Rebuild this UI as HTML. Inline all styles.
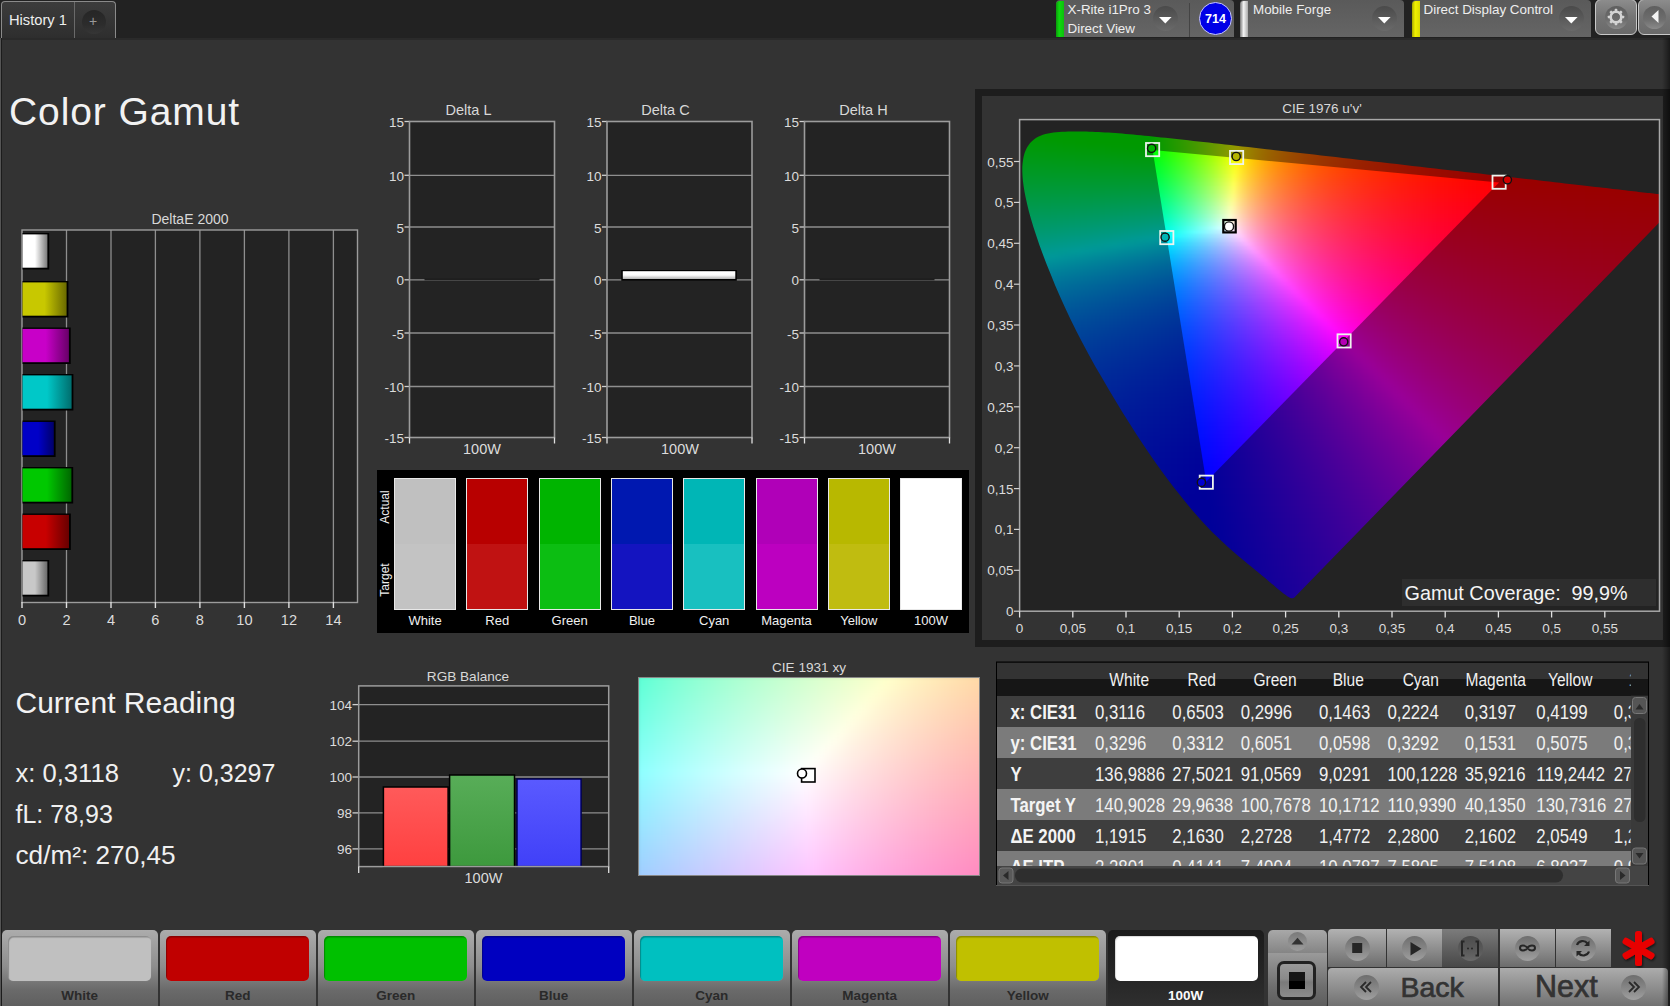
<!DOCTYPE html><html><head><meta charset="utf-8"><style>
*{margin:0;padding:0;box-sizing:border-box}
html,body{width:1670px;height:1006px;overflow:hidden;background:#333;font-family:"Liberation Sans",sans-serif;color:#e6e6e6}
.a{position:absolute}
.t{position:absolute;white-space:nowrap;line-height:1}
svg{position:absolute;overflow:visible}
.fld b{position:absolute;left:0;width:100%}
.r6{height:6px}.r4{height:4px}
</style></head><body>
<div class="a" style="left:0;top:0;width:1670px;height:38px;background:#222"></div><div class="a" style="left:0;top:38px;width:1670px;height:2px;background:#2a2a2a"></div><div class="a" style="left:0;top:38px;width:2px;height:968px;background:#1c1c1c;border-left:1px solid #555"></div><div class="a" style="left:1px;top:0.5px;width:115px;height:37.5px;border:1px solid #8a8a8a;border-bottom:none;border-radius:4px 4px 0 0;background:linear-gradient(#3c3c3c,#2e2e2e)"></div><div class="a" style="left:74px;top:2px;width:1px;height:36px;background:#6a6a6a"></div><div class="t" style="left:9px;top:13.3px;font-size:14.7px;color:#eee">History 1</div><div class="a" style="left:81.5px;top:9.5px;width:24px;height:24px;border-radius:50%;background:linear-gradient(#262626,#2c2c2c 60%,#363636)"></div><div class="t" style="left:89px;top:14px;font-size:14px;color:#999">+</div><div class="a" style="left:1056px;top:0;width:178px;height:37px;border-radius:4px 4px 0 0;background:linear-gradient(#5a5a5a,#656565)"></div><div class="a" style="left:1056px;top:1px;width:8px;height:36px;border-radius:4px 0 0 0;background:linear-gradient(90deg,#0a9a0a,#10d810 40%,#0cc00c)"></div><div class="t" style="left:1067.5px;top:3px;font-size:13.4px;color:#eee">X-Rite i1Pro 3</div><div class="t" style="left:1067.5px;top:22px;font-size:13.4px;color:#eee">Direct View</div><div class="a" style="left:1153px;top:6px;width:25px;height:25px;border-radius:50%;background:linear-gradient(#4a4a4a,#6a6a6a)"></div><svg style="left:1159.2px;top:17px" width="13" height="7"><path d="M0 0H12.6L6.3 6.6Z" fill="#fff"/></svg><div class="a" style="left:1189px;top:3px;width:1px;height:34px;background:#444"></div><div class="a" style="left:1199px;top:2px;width:33px;height:33px;border-radius:50%;background:#0000e6;border:1.5px solid #c8c8ff"></div><div class="t" style="left:1199px;top:12.5px;width:33px;text-align:center;font-size:12.5px;font-weight:bold;color:#fff">714</div><div class="a" style="left:1240px;top:0;width:164px;height:37px;border-radius:4px 4px 0 0;background:linear-gradient(#5a5a5a,#656565)"></div><div class="a" style="left:1240px;top:1px;width:8px;height:36px;border-radius:4px 0 0 0;background:linear-gradient(90deg,#777,#f4f4f4 45%,#aaa)"></div><div class="t" style="left:1253.0px;top:3px;font-size:13.4px;color:#eee">Mobile Forge</div><div class="a" style="left:1372px;top:6px;width:25px;height:25px;border-radius:50%;background:linear-gradient(#4a4a4a,#6a6a6a)"></div><svg style="left:1378.2px;top:17px" width="13" height="7"><path d="M0 0H12.6L6.3 6.6Z" fill="#fff"/></svg><div class="a" style="left:1412px;top:0;width:179px;height:37px;border-radius:4px 4px 0 0;background:linear-gradient(#5a5a5a,#656565)"></div><div class="a" style="left:1412px;top:1px;width:8px;height:36px;border-radius:4px 0 0 0;background:linear-gradient(90deg,#a8a800,#f0f000 40%,#d8d800)"></div><div class="t" style="left:1423.5px;top:3px;font-size:13.4px;color:#eee">Direct Display Control</div><div class="a" style="left:1559px;top:6px;width:25px;height:25px;border-radius:50%;background:linear-gradient(#4a4a4a,#6a6a6a)"></div><svg style="left:1565.2px;top:17px" width="13" height="7"><path d="M0 0H12.6L6.3 6.6Z" fill="#fff"/></svg><div class="a" style="left:1595px;top:-1px;width:42px;height:36px;border:1.5px solid #c8c8c8;border-radius:6px;background:linear-gradient(#8c8c8c,#747474 50%,#6a6a6a)"></div><div class="a" style="left:1637.5px;top:-1px;width:40px;height:36px;border:1.5px solid #c8c8c8;border-radius:6px;background:linear-gradient(#8c8c8c,#747474 50%,#6a6a6a)"></div><div class="a" style="left:1604.5px;top:6px;width:23px;height:23px;border-radius:50%;background:linear-gradient(#5e5e5e,#6e6e6e 60%,#8a8a8a)"></div><div class="a" style="left:1642.5px;top:6px;width:23px;height:23px;border-radius:50%;background:linear-gradient(#5e5e5e,#6e6e6e 60%,#8a8a8a)"></div><svg style="left:1615.8px;top:17.4px" width="1" height="1"><g><rect x="-1.3" y="-8.2" width="2.6" height="4" rx="0.6" transform="rotate(0)" fill="#d4d4d4"/><rect x="-1.3" y="-8.2" width="2.6" height="4" rx="0.6" transform="rotate(45)" fill="#d4d4d4"/><rect x="-1.3" y="-8.2" width="2.6" height="4" rx="0.6" transform="rotate(90)" fill="#d4d4d4"/><rect x="-1.3" y="-8.2" width="2.6" height="4" rx="0.6" transform="rotate(135)" fill="#d4d4d4"/><rect x="-1.3" y="-8.2" width="2.6" height="4" rx="0.6" transform="rotate(180)" fill="#d4d4d4"/><rect x="-1.3" y="-8.2" width="2.6" height="4" rx="0.6" transform="rotate(225)" fill="#d4d4d4"/><rect x="-1.3" y="-8.2" width="2.6" height="4" rx="0.6" transform="rotate(270)" fill="#d4d4d4"/><rect x="-1.3" y="-8.2" width="2.6" height="4" rx="0.6" transform="rotate(315)" fill="#d4d4d4"/><circle r="5.3" fill="none" stroke="#d4d4d4" stroke-width="2.6"/></g></svg><svg style="left:1650.5px;top:10px" width="9" height="14"><path d="M7.5 0V13L0.5 6.5Z" fill="#f4f4f4"/></svg><div class="t" style="left:9px;top:91.5px;font-size:39px;letter-spacing:0.9px;color:#f2f2f2">Color Gamut</div><div class="t" style="left:90px;top:212px;width:200px;text-align:center;font-size:14px;color:#d8d8d8">DeltaE 2000</div><svg style="left:0;top:0" width="1670" height="1006"><defs><linearGradient id="db0" x1="0" x2="1" y1="0" y2="0"><stop offset="0" stop-color="#ffffff"/><stop offset="0.5" stop-color="#ffffff"/><stop offset="1" stop-color="#7a7a7a"/></linearGradient><linearGradient id="db1" x1="0" x2="1" y1="0" y2="0"><stop offset="0" stop-color="#c8c800"/><stop offset="0.5" stop-color="#c8c800"/><stop offset="1" stop-color="#6a6a00"/></linearGradient><linearGradient id="db2" x1="0" x2="1" y1="0" y2="0"><stop offset="0" stop-color="#c800c8"/><stop offset="0.5" stop-color="#c800c8"/><stop offset="1" stop-color="#680068"/></linearGradient><linearGradient id="db3" x1="0" x2="1" y1="0" y2="0"><stop offset="0" stop-color="#00c8c8"/><stop offset="0.5" stop-color="#00c8c8"/><stop offset="1" stop-color="#006e6e"/></linearGradient><linearGradient id="db4" x1="0" x2="1" y1="0" y2="0"><stop offset="0" stop-color="#0000c8"/><stop offset="0.5" stop-color="#0000c8"/><stop offset="1" stop-color="#00006a"/></linearGradient><linearGradient id="db5" x1="0" x2="1" y1="0" y2="0"><stop offset="0" stop-color="#00c800"/><stop offset="0.5" stop-color="#00c800"/><stop offset="1" stop-color="#006800"/></linearGradient><linearGradient id="db6" x1="0" x2="1" y1="0" y2="0"><stop offset="0" stop-color="#c80000"/><stop offset="0.5" stop-color="#c80000"/><stop offset="1" stop-color="#680000"/></linearGradient><linearGradient id="db7" x1="0" x2="1" y1="0" y2="0"><stop offset="0" stop-color="#c8c8c8"/><stop offset="0.5" stop-color="#c8c8c8"/><stop offset="1" stop-color="#6a6a6a"/></linearGradient></defs><rect x="22" y="230" width="335" height="372" fill="#232323"/><line x1="66.5" y1="230" x2="66.5" y2="602" stroke="#8e8e8e" stroke-width="1.3"/><line x1="111.0" y1="230" x2="111.0" y2="602" stroke="#8e8e8e" stroke-width="1.3"/><line x1="155.4" y1="230" x2="155.4" y2="602" stroke="#8e8e8e" stroke-width="1.3"/><line x1="199.9" y1="230" x2="199.9" y2="602" stroke="#8e8e8e" stroke-width="1.3"/><line x1="244.4" y1="230" x2="244.4" y2="602" stroke="#8e8e8e" stroke-width="1.3"/><line x1="288.9" y1="230" x2="288.9" y2="602" stroke="#8e8e8e" stroke-width="1.3"/><line x1="333.4" y1="230" x2="333.4" y2="602" stroke="#8e8e8e" stroke-width="1.3"/><rect x="22" y="230" width="335.5" height="372.5" fill="none" stroke="#9c9c9c" stroke-width="1.4"/><line x1="22.0" y1="602" x2="22.0" y2="608" stroke="#e0e0e0" stroke-width="1.4"/><text x="22.0" y="624.8" font-size="14.6" fill="#dcdcdc" text-anchor="middle">0</text><line x1="66.5" y1="602" x2="66.5" y2="608" stroke="#e0e0e0" stroke-width="1.4"/><text x="66.5" y="624.8" font-size="14.6" fill="#dcdcdc" text-anchor="middle">2</text><line x1="111.0" y1="602" x2="111.0" y2="608" stroke="#e0e0e0" stroke-width="1.4"/><text x="111.0" y="624.8" font-size="14.6" fill="#dcdcdc" text-anchor="middle">4</text><line x1="155.4" y1="602" x2="155.4" y2="608" stroke="#e0e0e0" stroke-width="1.4"/><text x="155.4" y="624.8" font-size="14.6" fill="#dcdcdc" text-anchor="middle">6</text><line x1="199.9" y1="602" x2="199.9" y2="608" stroke="#e0e0e0" stroke-width="1.4"/><text x="199.9" y="624.8" font-size="14.6" fill="#dcdcdc" text-anchor="middle">8</text><line x1="244.4" y1="602" x2="244.4" y2="608" stroke="#e0e0e0" stroke-width="1.4"/><text x="244.4" y="624.8" font-size="14.6" fill="#dcdcdc" text-anchor="middle">10</text><line x1="288.9" y1="602" x2="288.9" y2="608" stroke="#e0e0e0" stroke-width="1.4"/><text x="288.9" y="624.8" font-size="14.6" fill="#dcdcdc" text-anchor="middle">12</text><line x1="333.4" y1="602" x2="333.4" y2="608" stroke="#e0e0e0" stroke-width="1.4"/><text x="333.4" y="624.8" font-size="14.6" fill="#dcdcdc" text-anchor="middle">14</text><rect x="22.5" y="233.0" width="26.7" height="36.5" fill="#000"/><rect x="22.5" y="234.4" width="24.9" height="33.3" fill="url(#db0)"/><rect x="22.5" y="281.0" width="45.9" height="36.5" fill="#000"/><rect x="22.5" y="282.4" width="44.1" height="33.3" fill="url(#db1)"/><rect x="22.5" y="327.5" width="48.2" height="36.5" fill="#000"/><rect x="22.5" y="328.9" width="46.4" height="33.3" fill="url(#db2)"/><rect x="22.5" y="374.0" width="50.9" height="36.5" fill="#000"/><rect x="22.5" y="375.4" width="49.1" height="33.3" fill="url(#db3)"/><rect x="22.5" y="420.5" width="33.1" height="36.5" fill="#000"/><rect x="22.5" y="421.9" width="31.3" height="33.3" fill="url(#db4)"/><rect x="22.5" y="467.0" width="50.7" height="36.5" fill="#000"/><rect x="22.5" y="468.4" width="48.9" height="33.3" fill="url(#db5)"/><rect x="22.5" y="513.5" width="48.3" height="36.5" fill="#000"/><rect x="22.5" y="514.9" width="46.5" height="33.3" fill="url(#db6)"/><rect x="22.5" y="560.0" width="26.7" height="36.5" fill="#000"/><rect x="22.5" y="561.4" width="24.9" height="33.3" fill="url(#db7)"/></svg><div class="t" style="left:366px;top:103px;width:205px;text-align:center;font-size:14.5px;color:#d8d8d8">Delta L</div><svg style="left:0;top:0" width="1670" height="1006"><rect x="409.5" y="121.5" width="145" height="316.0" fill="#232323"/><line x1="404.5" y1="121.5" x2="409.5" y2="121.5" stroke="#d0d0d0" stroke-width="1.3"/><text x="404.0" y="127.0" font-size="13.5" fill="#dcdcdc" text-anchor="end">15</text><line x1="409.5" y1="175.3" x2="554.5" y2="175.3" stroke="#8e8e8e" stroke-width="1.3"/><line x1="404.5" y1="175.3" x2="409.5" y2="175.3" stroke="#d0d0d0" stroke-width="1.3"/><text x="404.0" y="180.8" font-size="13.5" fill="#dcdcdc" text-anchor="end">10</text><line x1="409.5" y1="227.0" x2="554.5" y2="227.0" stroke="#8e8e8e" stroke-width="1.3"/><line x1="404.5" y1="227.0" x2="409.5" y2="227.0" stroke="#d0d0d0" stroke-width="1.3"/><text x="404.0" y="232.5" font-size="13.5" fill="#dcdcdc" text-anchor="end">5</text><line x1="409.5" y1="279.8" x2="554.5" y2="279.8" stroke="#8e8e8e" stroke-width="1.3"/><line x1="404.5" y1="279.8" x2="409.5" y2="279.8" stroke="#d0d0d0" stroke-width="1.3"/><text x="404.0" y="285.3" font-size="13.5" fill="#dcdcdc" text-anchor="end">0</text><line x1="409.5" y1="333.0" x2="554.5" y2="333.0" stroke="#8e8e8e" stroke-width="1.3"/><line x1="404.5" y1="333.0" x2="409.5" y2="333.0" stroke="#d0d0d0" stroke-width="1.3"/><text x="404.0" y="338.5" font-size="13.5" fill="#dcdcdc" text-anchor="end">-5</text><line x1="409.5" y1="386.5" x2="554.5" y2="386.5" stroke="#8e8e8e" stroke-width="1.3"/><line x1="404.5" y1="386.5" x2="409.5" y2="386.5" stroke="#d0d0d0" stroke-width="1.3"/><text x="404.0" y="392.0" font-size="13.5" fill="#dcdcdc" text-anchor="end">-10</text><line x1="404.5" y1="437.5" x2="409.5" y2="437.5" stroke="#d0d0d0" stroke-width="1.3"/><text x="404.0" y="443.0" font-size="13.5" fill="#dcdcdc" text-anchor="end">-15</text><rect x="409.5" y="121.5" width="145" height="316.0" fill="none" stroke="#9c9c9c" stroke-width="1.6"/><line x1="409.5" y1="437.5" x2="409.5" y2="443.5" stroke="#e0e0e0" stroke-width="1.3"/><line x1="554.5" y1="437.5" x2="554.5" y2="443.5" stroke="#e0e0e0" stroke-width="1.3"/><rect x="424.5" y="278.3" width="115" height="2" fill="#1e1e1e"/></svg><div class="t" style="left:432px;top:442px;width:100px;text-align:center;font-size:14.5px;color:#dcdcdc">100W</div><div class="t" style="left:563px;top:103px;width:205px;text-align:center;font-size:14.5px;color:#d8d8d8">Delta C</div><svg style="left:0;top:0" width="1670" height="1006"><rect x="607.0" y="121.5" width="145" height="316.0" fill="#232323"/><line x1="602.0" y1="121.5" x2="607.0" y2="121.5" stroke="#d0d0d0" stroke-width="1.3"/><text x="601.5" y="127.0" font-size="13.5" fill="#dcdcdc" text-anchor="end">15</text><line x1="607.0" y1="175.3" x2="752.0" y2="175.3" stroke="#8e8e8e" stroke-width="1.3"/><line x1="602.0" y1="175.3" x2="607.0" y2="175.3" stroke="#d0d0d0" stroke-width="1.3"/><text x="601.5" y="180.8" font-size="13.5" fill="#dcdcdc" text-anchor="end">10</text><line x1="607.0" y1="227.0" x2="752.0" y2="227.0" stroke="#8e8e8e" stroke-width="1.3"/><line x1="602.0" y1="227.0" x2="607.0" y2="227.0" stroke="#d0d0d0" stroke-width="1.3"/><text x="601.5" y="232.5" font-size="13.5" fill="#dcdcdc" text-anchor="end">5</text><line x1="607.0" y1="279.8" x2="752.0" y2="279.8" stroke="#8e8e8e" stroke-width="1.3"/><line x1="602.0" y1="279.8" x2="607.0" y2="279.8" stroke="#d0d0d0" stroke-width="1.3"/><text x="601.5" y="285.3" font-size="13.5" fill="#dcdcdc" text-anchor="end">0</text><line x1="607.0" y1="333.0" x2="752.0" y2="333.0" stroke="#8e8e8e" stroke-width="1.3"/><line x1="602.0" y1="333.0" x2="607.0" y2="333.0" stroke="#d0d0d0" stroke-width="1.3"/><text x="601.5" y="338.5" font-size="13.5" fill="#dcdcdc" text-anchor="end">-5</text><line x1="607.0" y1="386.5" x2="752.0" y2="386.5" stroke="#8e8e8e" stroke-width="1.3"/><line x1="602.0" y1="386.5" x2="607.0" y2="386.5" stroke="#d0d0d0" stroke-width="1.3"/><text x="601.5" y="392.0" font-size="13.5" fill="#dcdcdc" text-anchor="end">-10</text><line x1="602.0" y1="437.5" x2="607.0" y2="437.5" stroke="#d0d0d0" stroke-width="1.3"/><text x="601.5" y="443.0" font-size="13.5" fill="#dcdcdc" text-anchor="end">-15</text><rect x="607.0" y="121.5" width="145" height="316.0" fill="none" stroke="#9c9c9c" stroke-width="1.6"/><line x1="607.0" y1="437.5" x2="607.0" y2="443.5" stroke="#e0e0e0" stroke-width="1.3"/><line x1="752.0" y1="437.5" x2="752.0" y2="443.5" stroke="#e0e0e0" stroke-width="1.3"/><defs><linearGradient id="wb" x1="0" x2="0" y1="0" y2="1"><stop offset="0" stop-color="#fff"/><stop offset="0.5" stop-color="#fafafa"/><stop offset="1" stop-color="#b0b0b0"/></linearGradient></defs><rect x="621.3" y="270.0" width="115.5" height="10.8" fill="#000"/><rect x="622.8" y="271.2" width="112.5" height="7.8" fill="url(#wb)"/></svg><div class="t" style="left:630px;top:442px;width:100px;text-align:center;font-size:14.5px;color:#dcdcdc">100W</div><div class="t" style="left:761px;top:103px;width:205px;text-align:center;font-size:14.5px;color:#d8d8d8">Delta H</div><svg style="left:0;top:0" width="1670" height="1006"><rect x="804.5" y="121.5" width="145" height="316.0" fill="#232323"/><line x1="799.5" y1="121.5" x2="804.5" y2="121.5" stroke="#d0d0d0" stroke-width="1.3"/><text x="799.0" y="127.0" font-size="13.5" fill="#dcdcdc" text-anchor="end">15</text><line x1="804.5" y1="175.3" x2="949.5" y2="175.3" stroke="#8e8e8e" stroke-width="1.3"/><line x1="799.5" y1="175.3" x2="804.5" y2="175.3" stroke="#d0d0d0" stroke-width="1.3"/><text x="799.0" y="180.8" font-size="13.5" fill="#dcdcdc" text-anchor="end">10</text><line x1="804.5" y1="227.0" x2="949.5" y2="227.0" stroke="#8e8e8e" stroke-width="1.3"/><line x1="799.5" y1="227.0" x2="804.5" y2="227.0" stroke="#d0d0d0" stroke-width="1.3"/><text x="799.0" y="232.5" font-size="13.5" fill="#dcdcdc" text-anchor="end">5</text><line x1="804.5" y1="279.8" x2="949.5" y2="279.8" stroke="#8e8e8e" stroke-width="1.3"/><line x1="799.5" y1="279.8" x2="804.5" y2="279.8" stroke="#d0d0d0" stroke-width="1.3"/><text x="799.0" y="285.3" font-size="13.5" fill="#dcdcdc" text-anchor="end">0</text><line x1="804.5" y1="333.0" x2="949.5" y2="333.0" stroke="#8e8e8e" stroke-width="1.3"/><line x1="799.5" y1="333.0" x2="804.5" y2="333.0" stroke="#d0d0d0" stroke-width="1.3"/><text x="799.0" y="338.5" font-size="13.5" fill="#dcdcdc" text-anchor="end">-5</text><line x1="804.5" y1="386.5" x2="949.5" y2="386.5" stroke="#8e8e8e" stroke-width="1.3"/><line x1="799.5" y1="386.5" x2="804.5" y2="386.5" stroke="#d0d0d0" stroke-width="1.3"/><text x="799.0" y="392.0" font-size="13.5" fill="#dcdcdc" text-anchor="end">-10</text><line x1="799.5" y1="437.5" x2="804.5" y2="437.5" stroke="#d0d0d0" stroke-width="1.3"/><text x="799.0" y="443.0" font-size="13.5" fill="#dcdcdc" text-anchor="end">-15</text><rect x="804.5" y="121.5" width="145" height="316.0" fill="none" stroke="#9c9c9c" stroke-width="1.6"/><line x1="804.5" y1="437.5" x2="804.5" y2="443.5" stroke="#e0e0e0" stroke-width="1.3"/><line x1="949.5" y1="437.5" x2="949.5" y2="443.5" stroke="#e0e0e0" stroke-width="1.3"/><rect x="819.5" y="278.3" width="115" height="2" fill="#1e1e1e"/></svg><div class="t" style="left:827px;top:442px;width:100px;text-align:center;font-size:14.5px;color:#dcdcdc">100W</div><div class="a" style="left:377px;top:470px;width:592px;height:163px;background:#000"></div><div class="a" style="left:394.0px;top:478px;width:62px;height:132px;border:1px solid #e8e8e8;background:linear-gradient(#c0c0c0 50%,#c3c3c3 50%)"></div><div class="t" style="left:375.0px;top:614px;width:100px;text-align:center;font-size:13px;color:#f0f0f0">White</div><div class="a" style="left:466.3px;top:478px;width:62px;height:132px;border:1px solid #e8e8e8;background:linear-gradient(#b80000 50%,#c01212 50%)"></div><div class="t" style="left:447.3px;top:614px;width:100px;text-align:center;font-size:13px;color:#f0f0f0">Red</div><div class="a" style="left:538.6px;top:478px;width:62px;height:132px;border:1px solid #e8e8e8;background:linear-gradient(#00b400 50%,#0cbe12 50%)"></div><div class="t" style="left:519.6px;top:614px;width:100px;text-align:center;font-size:13px;color:#f0f0f0">Green</div><div class="a" style="left:610.9px;top:478px;width:62px;height:132px;border:1px solid #e8e8e8;background:linear-gradient(#0018b0 50%,#1414c0 50%)"></div><div class="t" style="left:591.9px;top:614px;width:100px;text-align:center;font-size:13px;color:#f0f0f0">Blue</div><div class="a" style="left:683.2px;top:478px;width:62px;height:132px;border:1px solid #e8e8e8;background:linear-gradient(#00b6b6 50%,#18c0c0 50%)"></div><div class="t" style="left:664.2px;top:614px;width:100px;text-align:center;font-size:13px;color:#f0f0f0">Cyan</div><div class="a" style="left:755.5px;top:478px;width:62px;height:132px;border:1px solid #e8e8e8;background:linear-gradient(#b000b8 50%,#bc00c0 50%)"></div><div class="t" style="left:736.5px;top:614px;width:100px;text-align:center;font-size:13px;color:#f0f0f0">Magenta</div><div class="a" style="left:827.8px;top:478px;width:62px;height:132px;border:1px solid #e8e8e8;background:linear-gradient(#b8b800 50%,#c0bc10 50%)"></div><div class="t" style="left:808.8px;top:614px;width:100px;text-align:center;font-size:13px;color:#f0f0f0">Yellow</div><div class="a" style="left:900.1px;top:478px;width:62px;height:132px;border:1px solid #e8e8e8;background:linear-gradient(#ffffff 50%,#ffffff 50%)"></div><div class="t" style="left:881.1px;top:614px;width:100px;text-align:center;font-size:13px;color:#f0f0f0">100W</div><div class="t" style="left:357px;top:501px;width:56px;text-align:center;font-size:12px;color:#f0f0f0;transform:rotate(-90deg)">Actual</div><div class="t" style="left:357px;top:574px;width:56px;text-align:center;font-size:12px;color:#f0f0f0;transform:rotate(-90deg)">Target</div><div class="a" style="left:975px;top:89px;width:695px;height:558px;background:#1d1d1d"></div><div class="a" style="left:982px;top:96px;width:681px;height:544px;background:#333"></div><div class="t" style="left:1222px;top:102px;width:200px;text-align:center;font-size:13.5px;color:#d8d8d8">CIE 1976 u'v'</div><div class="a" style="left:1020px;top:120px;width:640px;height:491px;background:#232323"></div><div class="a" style="left:1000px;top:110px;width:684px;height:510px;clip-path:polygon(294.1px 487.7px,294.0px 487.7px,294.0px 487.7px,293.9px 487.7px,293.9px 487.7px,293.8px 487.7px,293.8px 487.7px,293.7px 487.8px,293.7px 487.8px,293.6px 487.8px,293.6px 487.8px,293.6px 487.9px,293.5px 487.9px,293.5px 488.0px,293.4px 488.0px,293.3px 488.0px,293.3px 488.1px,293.2px 488.1px,293.1px 488.1px,293.0px 488.2px,292.9px 488.2px,292.8px 488.2px,292.7px 488.2px,292.6px 488.2px,292.5px 488.2px,292.3px 488.2px,292.2px 488.2px,292.0px 488.2px,291.9px 488.2px,291.7px 488.2px,291.6px 488.2px,291.4px 488.2px,291.3px 488.2px,291.1px 488.2px,290.9px 488.1px,290.7px 488.1px,290.5px 488.0px,290.2px 487.9px,289.9px 487.8px,289.6px 487.6px,289.2px 487.4px,288.7px 487.1px,288.2px 486.8px,287.6px 486.4px,287.0px 486.0px,286.4px 485.6px,285.7px 485.1px,285.0px 484.6px,284.3px 484.0px,283.5px 483.4px,282.6px 482.7px,281.7px 482.0px,280.7px 481.2px,279.6px 480.3px,278.5px 479.4px,277.3px 478.5px,276.1px 477.4px,274.8px 476.3px,273.5px 475.1px,272.0px 473.9px,270.6px 472.7px,269.0px 471.4px,267.4px 470.0px,265.7px 468.6px,263.9px 467.1px,261.9px 465.5px,259.9px 463.8px,257.8px 462.1px,255.5px 460.2px,253.2px 458.3px,250.8px 456.3px,248.2px 454.2px,245.6px 452.0px,242.9px 449.8px,240.1px 447.4px,237.1px 444.9px,234.0px 442.2px,230.8px 439.4px,227.4px 436.4px,224.0px 433.2px,220.5px 430.0px,216.9px 426.6px,213.1px 422.9px,209.2px 418.9px,205.0px 414.6px,200.6px 409.7px,195.8px 404.3px,190.8px 398.4px,185.5px 392.0px,179.9px 385.1px,174.1px 377.8px,168.2px 370.0px,162.1px 361.7px,155.8px 353.0px,149.4px 343.7px,142.8px 334.0px,136.2px 323.9px,129.4px 313.3px,122.6px 302.4px,115.8px 291.2px,108.9px 279.8px,102.1px 268.1px,95.3px 256.4px,88.7px 244.6px,82.4px 232.8px,76.3px 221.0px,70.5px 209.3px,65.1px 197.8px,60.0px 186.4px,55.2px 175.4px,50.8px 164.6px,46.6px 154.2px,42.8px 144.2px,39.3px 134.7px,36.2px 125.6px,33.4px 117.1px,31.0px 109.0px,28.9px 101.5px,27.2px 94.4px,25.7px 87.8px,24.5px 81.7px,23.6px 76.0px,22.9px 70.8px,22.5px 65.9px,22.3px 61.3px,22.3px 57.1px,22.6px 53.2px,23.1px 49.5px,23.7px 46.2px,24.6px 43.1px,25.7px 40.2px,27.0px 37.6px,28.5px 35.2px,30.1px 33.1px,31.9px 31.2px,33.9px 29.5px,35.9px 28.0px,38.1px 26.7px,40.5px 25.7px,42.9px 24.7px,45.4px 24.0px,48.0px 23.4px,50.7px 22.9px,53.4px 22.5px,56.2px 22.2px,59.1px 22.0px,62.0px 21.8px,65.0px 21.7px,68.0px 21.6px,71.0px 21.5px,74.1px 21.5px,77.1px 21.5px,80.1px 21.5px,83.1px 21.5px,86.2px 21.6px,89.2px 21.7px,92.3px 21.8px,95.5px 21.9px,98.6px 22.0px,101.8px 22.2px,105.1px 22.4px,108.4px 22.6px,111.8px 22.8px,115.2px 23.1px,118.6px 23.3px,122.2px 23.6px,125.7px 23.9px,129.4px 24.2px,133.1px 24.6px,136.9px 24.9px,140.7px 25.3px,144.6px 25.7px,148.6px 26.1px,152.7px 26.5px,156.9px 26.9px,161.1px 27.4px,165.5px 27.8px,169.9px 28.3px,174.4px 28.8px,179.0px 29.3px,183.7px 29.8px,188.5px 30.3px,193.4px 30.9px,198.4px 31.4px,203.5px 32.0px,208.7px 32.6px,214.0px 33.2px,219.4px 33.8px,225.0px 34.4px,230.6px 35.0px,236.3px 35.7px,242.2px 36.4px,248.2px 37.0px,254.2px 37.7px,260.4px 38.4px,266.7px 39.2px,273.2px 39.9px,279.7px 40.7px,286.3px 41.4px,293.1px 42.2px,299.9px 43.0px,306.9px 43.8px,313.9px 44.6px,321.1px 45.4px,328.3px 46.2px,335.7px 47.1px,343.1px 47.9px,350.6px 48.8px,358.1px 49.7px,365.8px 50.5px,373.5px 51.4px,381.3px 52.3px,389.1px 53.2px,396.9px 54.1px,404.7px 55.0px,412.4px 55.9px,420.1px 56.8px,427.7px 57.7px,435.2px 58.5px,442.7px 59.4px,450.1px 60.2px,457.6px 61.1px,465.0px 61.9px,472.4px 62.8px,479.7px 63.6px,486.8px 64.4px,493.8px 65.2px,500.6px 66.0px,507.2px 66.8px,513.6px 67.5px,519.9px 68.2px,526.1px 68.9px,532.2px 69.6px,538.0px 70.3px,543.7px 71.0px,549.3px 71.6px,554.6px 72.2px,559.8px 72.8px,564.8px 73.4px,569.6px 73.9px,574.3px 74.5px,578.8px 75.0px,583.2px 75.5px,587.3px 76.0px,591.4px 76.4px,595.3px 76.9px,599.0px 77.3px,602.7px 77.7px,606.2px 78.1px,609.6px 78.5px,612.9px 78.9px,616.1px 79.3px,619.3px 79.6px,622.3px 80.0px,625.3px 80.3px,628.2px 80.7px,631.0px 81.0px,633.7px 81.3px,636.3px 81.6px,638.8px 81.9px,641.1px 82.2px,643.4px 82.4px,645.6px 82.7px,647.7px 82.9px,649.6px 83.1px,651.5px 83.3px,653.3px 83.6px,655.0px 83.7px,656.7px 83.9px,658.2px 84.1px,659.5px 84.3px,659.5px 112.3px)"><div class="a fld" style="left:0;top:0;width:684px;height:510px;filter:blur(2.5px)"><b class="r6" style="top:0px;background:linear-gradient(90deg,#009900,#009900,#009900,#009900,#009900,#009900,#009900,#009900,#009900,#009900,#009900,#009900,#009900,#009900,#009900,#009900,#009900,#009900,#009900,#009900,#009900,#009900,#009900,#009900,#009900,#049900,#0c9900,#149900,#1c9900,#259900,#2e9900,#379900,#409900,#4a9900,#549900,#5e9900,#699900,#749900,#7f9900,#8b9900,#989900,#998e00,#998400,#997a00,#997200,#996a00,#996300,#995d00,#995700,#995200,#994d00,#994800,#994400,#994000,#993c00,#993900,#993600,#993300,#993000,#992d00,#992b00,#992800,#992600,#992400,#992200,#992000,#991e00,#991c00,#991b00,#991900,#991800,#991600,#991500,#991300,#991200,#991100,#991000,#990f00,#990d00,#990c00,#990b00,#990a00,#990900,#990900,#990800,#990700,#990600,#990500,#990400,#990400,#990300,#990200,#990200,#990100,#990000,#990000,#990000,#990000,#990000,#990000,#990000,#990000,#990000,#990000,#990000,#990000,#990000,#990000,#990000,#990000,#990000,#990000,#990000,#990000,#990000)"></b><b class="r6" style="top:6px;background:linear-gradient(90deg,#009900,#009900,#009900,#009900,#009900,#009900,#009900,#009900,#009900,#009900,#009900,#009900,#009900,#009900,#009900,#009900,#009900,#009900,#009900,#009900,#009900,#009900,#009900,#009900,#009900,#039900,#0b9900,#139900,#1b9900,#249900,#2d9900,#369900,#409900,#4a9900,#549900,#5e9900,#699900,#749900,#809900,#8c9900,#999900,#998d00,#998300,#997900,#997000,#996900,#996200,#995b00,#995600,#995000,#994b00,#994700,#994300,#993f00,#993b00,#993800,#993500,#993200,#992f00,#992c00,#992a00,#992700,#992500,#992300,#992100,#991f00,#991d00,#991b00,#991a00,#991800,#991700,#991500,#991400,#991300,#991100,#991000,#990f00,#990e00,#990d00,#990c00,#990b00,#990a00,#990900,#990800,#990700,#990600,#990500,#990500,#990400,#990300,#990200,#990200,#990100,#990000,#990000,#990000,#990000,#990000,#990000,#990000,#990000,#990000,#990000,#990000,#990000,#990000,#990000,#990000,#990000,#990000,#990000,#990000,#990000,#990000,#990000)"></b><b class="r6" style="top:12px;background:linear-gradient(90deg,#009900,#009900,#009900,#009900,#009900,#009900,#009900,#009900,#009900,#009900,#009900,#009900,#009900,#009900,#009900,#009900,#009900,#009900,#009900,#009900,#009900,#009900,#009900,#009900,#009900,#029900,#0a9900,#129900,#1a9900,#239900,#2c9900,#369900,#3f9900,#499900,#549900,#5e9900,#699900,#759900,#819900,#8d9900,#999800,#998c00,#998100,#997800,#996f00,#996800,#996100,#995a00,#995400,#994f00,#994a00,#994600,#994200,#993e00,#993a00,#993700,#993300,#993000,#992e00,#992b00,#992900,#992600,#992400,#992200,#992000,#991e00,#991c00,#991b00,#991900,#991700,#991600,#991400,#991300,#991200,#991000,#990f00,#990e00,#990d00,#990c00,#990b00,#990a00,#990900,#990800,#990700,#990600,#990500,#990500,#990400,#990300,#990200,#990200,#990100,#990000,#990000,#990000,#990000,#990000,#990000,#990000,#990000,#990000,#990000,#990000,#990000,#990000,#990000,#990000,#990000,#990000,#990000,#990000,#990000,#990000,#990000,#990000)"></b><b class="r6" style="top:18px;background:linear-gradient(90deg,#009900,#009900,#009900,#009900,#009900,#009900,#009900,#009900,#009900,#009900,#009900,#009900,#009900,#009900,#009900,#009900,#009900,#009900,#009900,#009900,#009900,#009900,#009900,#009900,#009900,#009900,#089900,#119900,#199900,#229900,#2c9900,#359900,#3f9900,#499900,#549900,#5e9900,#6a9900,#759900,#829900,#8e9900,#999700,#998b00,#998000,#997600,#996e00,#996600,#995f00,#995900,#995300,#994e00,#994900,#994400,#994000,#993c00,#993900,#993500,#993200,#992f00,#992d00,#992a00,#992800,#992500,#992300,#992100,#991f00,#991d00,#991b00,#991a00,#991800,#991600,#991500,#991400,#991200,#991100,#991000,#990e00,#990d00,#990c00,#990b00,#990a00,#990900,#990800,#990700,#990600,#990600,#990500,#990400,#990300,#990200,#990200,#990100,#990000,#990000,#990000,#990000,#990000,#990000,#990000,#990000,#990000,#990000,#990000,#990000,#990000,#990000,#990000,#990000,#990000,#990000,#990000,#990000,#990000,#990000,#990000,#990000)"></b><b class="r6" style="top:24px;background:linear-gradient(90deg,#009902,#009902,#009901,#009901,#009900,#009900,#009900,#009900,#009900,#009900,#009900,#009900,#009900,#009900,#009900,#009900,#009900,#009900,#009900,#009900,#009900,#009900,#009900,#009900,#009900,#009900,#079900,#109900,#199900,#229900,#2b9900,#359900,#3e9900,#499900,#539900,#5f9900,#6a9900,#769900,#829900,#8f9900,#999600,#998900,#997f00,#997500,#996d00,#996500,#995e00,#995800,#995200,#994d00,#994800,#994300,#993f00,#993b00,#993800,#993400,#993100,#992e00,#992c00,#992900,#992700,#992400,#992200,#992000,#991e00,#991c00,#991a00,#991900,#991700,#991600,#991400,#991300,#991100,#991000,#990f00,#990e00,#990d00,#990b00,#990a00,#990900,#990800,#990700,#990700,#990600,#990500,#990400,#990300,#990200,#990200,#990100,#990000,#990000,#990000,#990000,#990000,#990000,#990000,#990000,#990000,#990000,#990000,#990000,#990000,#990000,#990000,#990000,#990000,#990000,#990000,#990000,#990000,#990000,#990000,#990000,#990000)"></b><b class="r6" style="top:30px;background:linear-gradient(90deg,#009908,#009907,#009907,#009906,#009906,#009906,#009905,#009905,#009904,#009904,#009903,#009902,#009902,#009901,#009901,#009900,#009900,#009900,#009900,#009900,#009900,#009900,#009900,#009900,#009900,#009900,#069900,#0f9900,#189900,#219900,#2a9900,#349900,#3e9900,#499900,#539900,#5f9900,#6a9900,#779900,#839900,#909900,#999400,#998800,#997d00,#997400,#996b00,#996300,#995d00,#995600,#995100,#994b00,#994600,#994200,#993e00,#993a00,#993600,#993300,#993000,#992d00,#992a00,#992800,#992500,#992300,#992100,#991f00,#991d00,#991b00,#991900,#991800,#991600,#991500,#991300,#991200,#991000,#990f00,#990e00,#990d00,#990c00,#990b00,#990a00,#990900,#990800,#990700,#990600,#990500,#990400,#990300,#990300,#990200,#990100,#990000,#990000,#990000,#990000,#990000,#990000,#990000,#990000,#990000,#990000,#990000,#990000,#990000,#990000,#990000,#990000,#990000,#990000,#990000,#990000,#990000,#990000,#990000,#990000,#990000,#990000)"></b><b class="r6" style="top:36px;background:linear-gradient(90deg,#00990d,#00990d,#00990d,#00990c,#00990c,#00990b,#00990b,#00990b,#00990a,#00990a,#009909,#009909,#009908,#009908,#009907,#009907,#009906,#009906,#009905,#009904,#009904,#009903,#009903,#009902,#009901,#009901,#059900,#0d9900,#169900,#209900,#299900,#339900,#3e9900,#489900,#539900,#5f9900,#6b9900,#779900,#849900,#919900,#999300,#998700,#997c00,#997200,#996a00,#996200,#995b00,#995500,#994f00,#994a00,#994500,#994100,#993d00,#993900,#993500,#993200,#992f00,#992c00,#992900,#992700,#992400,#992200,#992000,#991e00,#991c00,#991a00,#991800,#991700,#991500,#991400,#991200,#991100,#991000,#990e00,#990d00,#990c00,#990b00,#990a00,#990900,#990800,#990700,#990600,#990500,#990400,#990300,#990300,#990200,#990100,#990000,#990000,#990000,#990000,#990000,#990000,#990000,#990000,#990000,#990000,#990000,#990000,#990000,#990000,#990000,#990000,#990000,#990000,#990000,#990000,#990000,#990000,#990000,#990000,#990000,#990000,#990000)"></b><b class="r6" style="top:42px;background:linear-gradient(90deg,#009913,#009913,#009913,#009912,#009912,#009912,#009911,#009911,#009910,#009910,#009910,#00990f,#00990f,#00990e,#00990e,#00990e,#00990d,#00990d,#00990c,#00990c,#00990b,#00990b,#00990a,#00990a,#009909,#009908,#039908,#0c9907,#159907,#1f9906,#299905,#339904,#3d9904,#489903,#539902,#5f9901,#6b9900,#789900,#859900,#939900,#999200,#998500,#997a00,#997100,#996800,#996100,#995a00,#995400,#994e00,#994900,#994400,#993f00,#993b00,#993800,#993400,#993100,#992e00,#992b00,#992800,#992600,#992300,#992100,#991f00,#991d00,#991b00,#991900,#991700,#991600,#991400,#991300,#991100,#991000,#990f00,#990e00,#990c00,#990b00,#990a00,#990900,#990800,#990700,#990600,#990500,#990400,#990300,#990300,#990200,#990100,#990000,#990000,#990000,#990000,#990000,#990000,#990000,#990000,#990000,#990000,#990000,#990000,#990000,#990000,#990000,#990000,#990000,#990000,#990000,#990000,#990000,#990000,#990000,#990000,#990000,#990000,#990000,#990000)"></b><b class="r6" style="top:48px;background:linear-gradient(90deg,#009919,#009919,#009919,#009918,#009918,#009918,#009918,#009917,#009917,#009917,#009916,#009916,#009916,#009915,#009915,#009915,#009914,#009914,#009914,#009913,#009913,#009912,#009912,#009911,#009911,#009911,#029910,#0b9910,#14990f,#1e990e,#28990e,#32990d,#3d990d,#48990c,#53990b,#5f990b,#6b990a,#789909,#869909,#949908,#999007,#998405,#997904,#996f03,#996702,#995f01,#995801,#995200,#994c00,#994700,#994300,#993e00,#993a00,#993600,#993300,#993000,#992d00,#992a00,#992700,#992500,#992200,#992000,#991e00,#991c00,#991a00,#991800,#991700,#991500,#991300,#991200,#991000,#990f00,#990e00,#990d00,#990b00,#990a00,#990900,#990800,#990700,#990600,#990500,#990400,#990400,#990300,#990200,#990100,#990000,#990000,#990000,#990000,#990000,#990000,#990000,#990000,#990000,#990000,#990000,#990000,#990000,#990000,#990000,#990000,#990000,#990000,#990000,#990000,#990000,#990000,#990000,#990000,#990000,#990000,#990000,#990000,#990000)"></b><b class="r6" style="top:54px;background:linear-gradient(90deg,#00991f,#00991f,#00991f,#00991f,#00991e,#00991e,#00991e,#00991e,#00991e,#00991d,#00991d,#00991d,#00991d,#00991c,#00991c,#00991c,#00991c,#00991b,#00991b,#00991b,#00991b,#00991a,#00991a,#00991a,#009919,#009919,#019919,#0a9918,#139918,#1d9917,#279917,#319917,#3c9916,#479916,#539915,#5f9915,#6c9914,#799914,#879913,#959913,#998f11,#99820f,#99780d,#996e0b,#99650a,#995e09,#995708,#995107,#994b06,#994605,#994104,#993d04,#993903,#993502,#993202,#992e01,#992b01,#992900,#992600,#992300,#992100,#991f00,#991d00,#991b00,#991900,#991700,#991600,#991400,#991200,#991100,#991000,#990e00,#990d00,#990c00,#990b00,#990900,#990800,#990700,#990600,#990500,#990500,#990400,#990300,#990200,#990100,#990000,#990000,#990000,#990000,#990000,#990000,#990000,#990000,#990000,#990000,#990000,#990000,#990000,#990000,#990000,#990000,#990000,#990000,#990000,#990000,#990000,#990000,#990000,#990000,#990000,#990000,#990000,#990000,#990000,#990000)"></b><b class="r6" style="top:60px;background:linear-gradient(90deg,#009925,#009925,#009925,#009925,#009925,#009925,#009925,#009925,#009924,#009924,#009924,#009924,#009924,#009924,#009924,#009923,#009923,#009923,#009923,#009923,#009923,#009922,#009922,#009922,#009922,#009922,#009921,#089921,#129921,#1c9921,#269920,#319920,#3c9920,#479920,#53991f,#5f991f,#6c991f,#7a991e,#88991e,#96991e,#998d1b,#998118,#997616,#996c14,#996412,#995c10,#99550f,#994f0e,#994a0c,#99450b,#99400a,#993b09,#993708,#993408,#993007,#992d06,#992a05,#992705,#992504,#992204,#992003,#991e03,#991c02,#991a02,#991802,#991601,#991501,#991300,#991100,#991000,#990f00,#990d00,#990c00,#990b00,#990a00,#990900,#990800,#990700,#990600,#990500,#990400,#990300,#990200,#990100,#990000,#990000,#990000,#990000,#990000,#990000,#990000,#990000,#990000,#990000,#990000,#990000,#990000,#990000,#990000,#990000,#990000,#990000,#990000,#990000,#990000,#990000,#990000,#990000,#990000,#990000,#990000,#990000,#990000,#990000,#990000)"></b><b class="r6" style="top:66px;background:linear-gradient(90deg,#00992c,#00992c,#00992c,#00992c,#00992b,#00992b,#00992b,#00992b,#00992b,#00992b,#00992b,#00992b,#00992b,#00992b,#00992b,#00992b,#00992b,#00992b,#00992b,#00992b,#00992b,#00992b,#00992b,#00992b,#00992b,#00992b,#00992a,#07992a,#11992a,#1b992a,#25992a,#30992a,#3b992a,#47992a,#53992a,#60992a,#6d992a,#7a992a,#899929,#989929,#998c26,#997f22,#99751f,#996b1d,#99621a,#995b18,#995416,#994e15,#994813,#994312,#993e10,#993a0f,#99360e,#99320d,#992f0c,#992c0b,#99290a,#99260a,#992409,#992108,#991f07,#991d07,#991b06,#991906,#991705,#991505,#991404,#991204,#991004,#990f03,#990e03,#990c02,#990b02,#990a02,#990901,#990801,#990701,#990601,#990500,#990400,#990300,#990200,#990100,#990000,#990000,#990000,#990000,#990000,#990000,#990000,#990000,#990000,#990000,#990000,#990000,#990000,#990000,#990000,#990000,#990000,#990000,#990000,#990000,#990000,#990000,#990000,#990000,#990000,#990000,#990000,#990000,#990000,#990000,#990000,#990000)"></b><b class="r6" style="top:72px;background:linear-gradient(90deg,#009932,#009932,#009932,#009932,#009932,#009932,#009932,#009932,#009933,#009933,#009933,#009933,#009933,#009933,#009933,#009933,#009933,#009933,#009933,#009933,#009933,#009933,#009934,#009934,#009934,#009934,#009934,#069934,#0f9934,#1a9934,#249934,#2f9934,#3b9935,#469935,#539935,#609935,#6d9935,#7b9935,#8a9935,#999936,#998a31,#997e2c,#997329,#996925,#996123,#995920,#99521e,#994c1c,#99471a,#994218,#993d16,#993915,#993514,#993112,#992e11,#992b10,#99280f,#99250e,#99220d,#99200d,#991e0c,#991c0b,#991a0a,#99180a,#991609,#991408,#991308,#991107,#991007,#990e06,#990d06,#990c06,#990a05,#990905,#990804,#990704,#990604,#990503,#990403,#990303,#990202,#990102,#990002,#990002,#990001,#990001,#990001,#990001,#990000,#990000,#990000,#990000,#990000,#990000,#990000,#990000,#990000,#990000,#990000,#990000,#990000,#990000,#990000,#990000,#990000,#990000,#990000,#990000,#990000,#990000,#990000,#990000,#990000,#990000,#990000)"></b><b class="r6" style="top:78px;background:linear-gradient(90deg,#009939,#009939,#009939,#009939,#009939,#009939,#00993a,#00993a,#00993a,#00993a,#00993a,#00993a,#00993b,#00993b,#00993b,#00993b,#00993b,#00993b,#00993c,#00993c,#00993c,#00993c,#00993d,#00993d,#00993d,#00993d,#00993e,#04993e,#0e993e,#19993f,#23993f,#2e993f,#3a993f,#469940,#539940,#609941,#6e9941,#7c9941,#8b9942,#999742,#99893c,#997c37,#997132,#99682e,#995f2b,#995828,#995125,#994b23,#994520,#99401e,#993c1d,#99371b,#993319,#993018,#992c16,#992915,#992614,#992413,#992112,#991f11,#991d10,#991a0f,#99180e,#99170e,#99150d,#99130c,#99120c,#99100b,#990f0a,#990d0a,#990c09,#990b09,#990908,#990808,#990707,#990607,#990507,#990406,#990306,#990205,#990105,#990105,#990004,#990004,#990004,#990003,#990003,#990003,#990003,#990002,#990002,#990002,#990002,#990001,#990001,#990001,#990001,#990001,#990000,#990000,#990000,#990000,#990000,#990000,#990000,#990000,#990000,#990000,#990000,#990000,#990000,#990000,#990000,#990000,#990000)"></b><b class="r6" style="top:84px;background:linear-gradient(90deg,#00993f,#009940,#009940,#009940,#009940,#009941,#009941,#009941,#009941,#009942,#009942,#009942,#009943,#009943,#009943,#009943,#009944,#009944,#009944,#009945,#009945,#009946,#009946,#009946,#009947,#009947,#009948,#039948,#0d9949,#179949,#22994a,#2e994a,#39994b,#46994b,#53994c,#60994d,#6e994d,#7d994e,#8c994f,#99964e,#998747,#997b41,#99703c,#996638,#995e34,#995630,#994f2d,#99492a,#994427,#993f25,#993a23,#993621,#99321f,#992e1d,#992b1c,#99281a,#992519,#992318,#992017,#991e15,#991b14,#991913,#991712,#991612,#991411,#991210,#99100f,#990f0f,#990e0e,#990c0d,#990b0d,#990a0c,#99080b,#99070b,#99060a,#99050a,#990409,#990309,#990209,#990108,#990108,#990007,#990007,#990007,#990006,#990006,#990006,#990005,#990005,#990005,#990004,#990004,#990004,#990004,#990003,#990003,#990003,#990003,#990002,#990002,#990002,#990002,#990002,#990001,#990001,#990001,#990001,#990001,#990000,#990000,#990000,#990000,#990000,#990000,#990000)"></b><b class="r6" style="top:90px;background:linear-gradient(90deg,#009946,#009947,#009947,#009947,#009948,#009948,#009948,#009949,#009949,#00994a,#00994a,#00994a,#00994b,#00994b,#00994c,#00994c,#00994d,#00994d,#00994e,#00994e,#00994f,#00994f,#009950,#009950,#009951,#009952,#009952,#019953,#0b9954,#169954,#219955,#2d9956,#399957,#459958,#539958,#609959,#6f995a,#7e995b,#8d995d,#99945b,#998653,#99794c,#996e46,#996541,#995c3c,#995538,#994e35,#994831,#99422e,#993d2c,#993929,#993527,#993125,#992d23,#992a21,#992720,#99241e,#99211d,#991f1b,#991c1a,#991a19,#991818,#991617,#991416,#991315,#991114,#990f13,#990e12,#990d11,#990b11,#990a10,#99090f,#99080f,#99060e,#99050d,#99040d,#99030c,#99020c,#99010b,#99010b,#99000a,#99000a,#99000a,#990009,#990009,#990008,#990008,#990008,#990007,#990007,#990007,#990006,#990006,#990006,#990005,#990005,#990005,#990005,#990004,#990004,#990004,#990004,#990003,#990003,#990003,#990003,#990003,#990002,#990002,#990002,#990002,#990002,#990001,#990001,#990001)"></b><b class="r6" style="top:96px;background:linear-gradient(90deg,#00994e,#00994e,#00994e,#00994f,#00994f,#009950,#009950,#009951,#009951,#009952,#009952,#009953,#009953,#009954,#009954,#009955,#009956,#009956,#009957,#009958,#009958,#009959,#00995a,#00995b,#00995b,#00995c,#00995d,#00995e,#0a995f,#159960,#209961,#2c9962,#389963,#459964,#529965,#609967,#6f9968,#7e9969,#8f996b,#999368,#99845f,#997757,#996c50,#99634b,#995a45,#995341,#994c3d,#994639,#994136,#993c33,#993730,#99332d,#992f2b,#992c29,#992827,#992525,#992323,#992021,#991e20,#991b1f,#99191d,#99171c,#99151b,#99131a,#991219,#991018,#990e17,#990d16,#990c15,#990a14,#990913,#990813,#990712,#990511,#990411,#990310,#99020f,#99020f,#99010e,#99000e,#99000d,#99000d,#99000c,#99000c,#99000b,#99000b,#99000a,#99000a,#99000a,#990009,#990009,#990009,#990008,#990008,#990008,#990007,#990007,#990007,#990006,#990006,#990006,#990006,#990005,#990005,#990005,#990005,#990004,#990004,#990004,#990004,#990004,#990003,#990003,#990003,#990003)"></b><b class="r6" style="top:102px;background:linear-gradient(90deg,#009955,#009955,#009956,#009956,#009957,#009958,#009958,#009959,#009959,#00995a,#00995b,#00995b,#00995c,#00995d,#00995d,#00995e,#00995f,#009960,#009961,#009961,#009962,#009963,#009964,#009965,#009966,#009967,#009968,#009969,#08996b,#13996c,#1f996d,#2b996f,#389970,#459971,#529973,#619975,#709976,#7f9978,#90997a,#999175,#99826b,#997662,#996b5b,#996154,#99594e,#995149,#994b45,#994541,#993f3d,#993a39,#993636,#993233,#992e31,#992a2e,#99272c,#99242a,#992128,#991f26,#991c25,#991a23,#991822,#991620,#99141f,#99121e,#99101d,#990f1b,#990d1a,#990c19,#990b18,#990918,#990817,#990716,#990615,#990514,#990414,#990313,#990212,#990112,#990011,#990010,#990010,#99000f,#99000f,#99000e,#99000e,#99000d,#99000d,#99000c,#99000c,#99000c,#99000b,#99000b,#99000a,#99000a,#99000a,#990009,#990009,#990009,#990008,#990008,#990008,#990008,#990007,#990007,#990007,#990006,#990006,#990006,#990006,#990006,#990005,#990005,#990005,#990005,#990004)"></b><b class="r6" style="top:108px;background:linear-gradient(90deg,#00995c,#00995d,#00995e,#00995e,#00995f,#009960,#009960,#009961,#009962,#009962,#009963,#009964,#009965,#009966,#009967,#009968,#009968,#009969,#00996a,#00996c,#00996d,#00996e,#00996f,#009970,#009971,#009973,#009974,#009975,#079977,#129978,#1e997a,#2a997c,#37997d,#44997f,#529981,#619983,#709985,#809987,#91998a,#998f83,#998178,#99746e,#996966,#995f5e,#995758,#995052,#99494d,#994348,#993e44,#993940,#99343d,#99303a,#992c37,#992934,#992632,#99232f,#99202d,#991d2b,#991b2a,#991928,#991726,#991525,#991323,#991122,#990f21,#990e1f,#990c1e,#990b1d,#990a1c,#99081b,#99071a,#990619,#990518,#990418,#990317,#990216,#990115,#990015,#990014,#990013,#990013,#990012,#990011,#990011,#990010,#990010,#99000f,#99000f,#99000e,#99000e,#99000e,#99000d,#99000d,#99000c,#99000c,#99000c,#99000b,#99000b,#99000a,#99000a,#99000a,#990009,#990009,#990009,#990009,#990008,#990008,#990008,#990008,#990007,#990007,#990007,#990007,#990006,#990006)"></b><b class="r6" style="top:114px;background:linear-gradient(90deg,#009964,#009965,#009965,#009966,#009967,#009968,#009969,#009969,#00996a,#00996b,#00996c,#00996d,#00996e,#00996f,#009970,#009971,#009972,#009974,#009975,#009976,#009977,#009979,#00997a,#00997b,#00997d,#00997f,#009980,#009982,#059984,#119985,#1d9987,#299989,#36998b,#44998e,#529990,#619992,#719995,#819997,#929899,#998e91,#997f85,#99727a,#996770,#995e68,#995561,#994e5b,#994755,#994150,#993c4c,#993747,#993344,#992f40,#992b3d,#99273a,#992437,#992135,#991f33,#991c30,#991a2e,#99182d,#99152b,#991429,#991227,#991026,#990e25,#990d23,#990b22,#990a21,#990820,#99071f,#99061e,#99051d,#99041c,#99031b,#99021a,#990119,#990018,#990017,#990017,#990016,#990015,#990015,#990014,#990013,#990013,#990012,#990012,#990011,#990011,#990010,#990010,#99000f,#99000f,#99000e,#99000e,#99000e,#99000d,#99000d,#99000d,#99000c,#99000c,#99000b,#99000b,#99000b,#99000a,#99000a,#99000a,#99000a,#990009,#990009,#990009,#990008,#990008,#990008,#990008)"></b><b class="r6" style="top:120px;background:linear-gradient(90deg,#00996c,#00996d,#00996e,#00996e,#00996f,#009970,#009971,#009972,#009973,#009974,#009975,#009977,#009978,#009979,#00997a,#00997b,#00997d,#00997e,#00997f,#009981,#009982,#009984,#009986,#009987,#009989,#00998b,#00998d,#00998f,#039991,#0f9993,#1b9995,#289998,#359899,#429599,#4f9399,#5c9099,#698e99,#778b99,#848899,#928699,#997d92,#997086,#99657c,#995c73,#99536b,#994c64,#99455e,#994058,#993a53,#99354f,#99314b,#992d47,#992943,#992640,#99233d,#99203a,#991d38,#991b36,#991833,#991631,#99142f,#99122e,#99102c,#990f2a,#990d29,#990c27,#990a26,#990925,#990723,#990622,#990521,#990420,#99031f,#99021e,#99011d,#99001c,#99001b,#99001a,#99001a,#990019,#990018,#990017,#990017,#990016,#990015,#990015,#990014,#990014,#990013,#990013,#990012,#990012,#990011,#990011,#990010,#990010,#99000f,#99000f,#99000f,#99000e,#99000e,#99000d,#99000d,#99000d,#99000c,#99000c,#99000c,#99000b,#99000b,#99000b,#99000a,#99000a,#99000a,#99000a,#990009)"></b><b class="r6" style="top:126px;background:linear-gradient(90deg,#009974,#009975,#009976,#009977,#009978,#009979,#00997a,#00997b,#00997c,#00997e,#00997f,#009980,#009982,#009983,#009984,#009986,#009987,#009989,#00998a,#00998c,#00998e,#009990,#009992,#009994,#009996,#009998,#009899,#009699,#029499,#0d9199,#188f99,#248d99,#2f8a99,#3b8899,#478599,#538399,#608099,#6c7e99,#797b99,#867999,#937699,#996e92,#996387,#995a7d,#995275,#994a6d,#994466,#993e60,#99395b,#993456,#993051,#992c4d,#99284a,#992546,#992143,#991f40,#991c3d,#99193b,#991738,#991536,#991334,#991132,#990f30,#990e2e,#990c2d,#990a2b,#99092a,#990828,#990627,#990526,#990424,#990323,#990222,#990121,#990020,#99001f,#99001e,#99001d,#99001d,#99001c,#99001b,#99001a,#990019,#990019,#990018,#990017,#990017,#990016,#990016,#990015,#990014,#990014,#990013,#990013,#990012,#990012,#990011,#990011,#990011,#990010,#990010,#99000f,#99000f,#99000f,#99000e,#99000e,#99000e,#99000d,#99000d,#99000d,#99000c,#99000c,#99000c,#99000b,#99000b)"></b><b class="r6" style="top:132px;background:linear-gradient(90deg,#00997c,#00997d,#00997e,#009980,#009981,#009982,#009983,#009985,#009986,#009987,#009989,#00998a,#00998c,#00998d,#00998f,#009991,#009992,#009994,#009996,#009998,#009899,#009699,#009499,#009299,#009099,#008e99,#008c99,#008999,#008799,#0a8599,#158399,#208199,#2b7e99,#367c99,#417a99,#4c7799,#587599,#637299,#6f7099,#7b6d99,#876b99,#936899,#996193,#995888,#99507f,#994877,#99426f,#993c69,#993763,#99325d,#992e59,#992a54,#992650,#99234c,#992049,#991d46,#991b43,#991840,#99163d,#99143b,#991239,#991037,#990e35,#990c33,#990b31,#99092f,#99082e,#99072c,#99052b,#990429,#990328,#990227,#990126,#990024,#990023,#990022,#990021,#990020,#99001f,#99001f,#99001e,#99001d,#99001c,#99001b,#99001b,#99001a,#990019,#990019,#990018,#990017,#990017,#990016,#990016,#990015,#990015,#990014,#990014,#990013,#990013,#990012,#990012,#990011,#990011,#990011,#990010,#990010,#99000f,#99000f,#99000f,#99000e,#99000e,#99000e,#99000d,#99000d,#99000d)"></b><b class="r6" style="top:138px;background:linear-gradient(90deg,#009985,#009986,#009987,#009989,#00998a,#00998b,#00998d,#00998e,#009990,#009991,#009993,#009994,#009996,#009998,#009899,#009699,#009599,#009399,#009199,#008f99,#008d99,#008b99,#008999,#008799,#008599,#008399,#008199,#007f99,#007c99,#087a99,#127899,#1c7699,#267499,#317199,#3b6f99,#466d99,#506b99,#5b6899,#666699,#716399,#7d6199,#885e99,#935c99,#995693,#994e89,#994780,#994078,#993a71,#99356b,#993165,#992c60,#99285b,#992557,#992253,#991f4f,#991c4b,#991948,#991745,#991542,#991240,#99103d,#990f3b,#990d39,#990b37,#990a35,#990833,#990732,#990630,#99042e,#99032d,#99022c,#99012a,#990029,#990028,#990027,#990025,#990024,#990023,#990022,#990021,#990021,#990020,#99001f,#99001e,#99001d,#99001d,#99001c,#99001b,#99001a,#99001a,#990019,#990019,#990018,#990017,#990017,#990016,#990016,#990015,#990015,#990014,#990014,#990013,#990013,#990012,#990012,#990012,#990011,#990011,#990010,#990010,#990010,#99000f,#99000f,#99000f,#99000e)"></b><b class="r6" style="top:144px;background:linear-gradient(90deg,#00998e,#00998f,#009990,#009992,#009993,#009995,#009996,#009998,#009899,#009799,#009599,#009399,#009199,#009099,#008e99,#008c99,#008a99,#008899,#008799,#008599,#008399,#008199,#007f99,#007d99,#007b99,#007999,#007799,#007599,#007399,#067199,#106f99,#196d99,#236a99,#2c6899,#366699,#406499,#4a6299,#545f99,#5f5d99,#695b99,#735899,#7e5699,#895499,#945199,#994c94,#99458a,#993e81,#99397a,#993373,#992f6d,#992b67,#992762,#99235d,#992059,#991d55,#991a51,#99184e,#99154b,#991348,#991145,#990f42,#990d40,#990c3d,#990a3b,#990939,#990737,#990636,#990434,#990332,#990231,#99012f,#99002e,#99002c,#99002b,#99002a,#990029,#990028,#990026,#990025,#990024,#990023,#990022,#990022,#990021,#990020,#99001f,#99001e,#99001e,#99001d,#99001c,#99001c,#99001b,#99001a,#99001a,#990019,#990018,#990018,#990017,#990017,#990016,#990016,#990015,#990015,#990014,#990014,#990014,#990013,#990013,#990012,#990012,#990012,#990011,#990011,#990010,#990010)"></b><b class="r6" style="top:150px;background:linear-gradient(90deg,#009997,#009998,#009899,#009799,#009599,#009499,#009299,#009099,#008f99,#008d99,#008b99,#008a99,#008899,#008699,#008499,#008399,#008199,#007f99,#007d99,#007c99,#007a99,#007899,#007699,#007499,#007299,#007099,#006e99,#006c99,#006a99,#046899,#0d6699,#166499,#1f6299,#296099,#325e99,#3b5c99,#455a99,#4e5799,#585599,#625399,#6b5199,#754e99,#7f4c99,#8a4a99,#944799,#994394,#993c8b,#993782,#99327b,#992d74,#99296e,#992569,#992264,#991f5f,#991c5b,#991957,#991653,#991450,#99124d,#99104a,#990e47,#990c44,#990a42,#990940,#99073e,#99063c,#99053a,#990338,#990236,#990134,#990033,#990031,#990030,#99002e,#99002d,#99002c,#99002b,#990029,#990028,#990027,#990026,#990025,#990024,#990023,#990023,#990022,#990021,#990020,#99001f,#99001f,#99001e,#99001d,#99001d,#99001c,#99001b,#99001b,#99001a,#990019,#990019,#990018,#990018,#990017,#990017,#990016,#990016,#990015,#990015,#990015,#990014,#990014,#990013,#990013,#990013,#990012,#990012)"></b><b class="r6" style="top:156px;background:linear-gradient(90deg,#009299,#009199,#008f99,#008e99,#008c99,#008b99,#008999,#008899,#008699,#008499,#008399,#008199,#007f99,#007e99,#007c99,#007a99,#007999,#007799,#007599,#007399,#007199,#007099,#006e99,#006c99,#006a99,#006899,#006699,#006499,#006399,#036199,#0b5f99,#145d99,#1c5b99,#255999,#2e5799,#375599,#405299,#495099,#524e99,#5b4c99,#644a99,#6e4899,#774599,#814399,#8a4199,#943f99,#993a94,#99358b,#993083,#992b7c,#992776,#992370,#99206b,#991d66,#991a61,#99175d,#991559,#991355,#991052,#990e4f,#990d4c,#990b49,#990947,#990844,#990642,#990540,#99033e,#99023c,#99013a,#990038,#990036,#990035,#990033,#990032,#990030,#99002f,#99002e,#99002d,#99002b,#99002a,#990029,#990028,#990027,#990026,#990025,#990024,#990023,#990023,#990022,#990021,#990020,#990020,#99001f,#99001e,#99001d,#99001d,#99001c,#99001c,#99001b,#99001a,#99001a,#990019,#990019,#990018,#990018,#990017,#990017,#990016,#990016,#990016,#990015,#990015,#990014,#990014,#990013)"></b><b class="r6" style="top:162px;background:linear-gradient(90deg,#008a99,#008999,#008799,#008699,#008499,#008399,#008199,#008099,#007e99,#007c99,#007b99,#007999,#007899,#007699,#007499,#007399,#007199,#006f99,#006e99,#006c99,#006a99,#006899,#006799,#006599,#006399,#006199,#005f99,#005d99,#005c99,#015a99,#095899,#115699,#1a5499,#225299,#2a5099,#334e99,#3b4c99,#444a99,#4c4899,#554699,#5e4499,#674299,#704099,#793d99,#823b99,#8b3999,#943799,#993394,#992e8c,#992a84,#99257d,#992277,#991e71,#991b6c,#991967,#991663,#99135f,#99115b,#990f57,#990d54,#990b51,#990a4e,#99084b,#990649,#990546,#990444,#990242,#990140,#99003e,#99003c,#99003a,#990038,#990037,#990035,#990034,#990032,#990031,#990030,#99002e,#99002d,#99002c,#99002b,#99002a,#990029,#990028,#990027,#990026,#990025,#990024,#990023,#990023,#990022,#990021,#990020,#990020,#99001f,#99001e,#99001e,#99001d,#99001d,#99001c,#99001b,#99001b,#99001a,#99001a,#990019,#990019,#990018,#990018,#990017,#990017,#990016,#990016,#990016,#990015)"></b><b class="r6" style="top:168px;background:linear-gradient(90deg,#008399,#008199,#008099,#007e99,#007d99,#007b99,#007a99,#007899,#007799,#007599,#007499,#007299,#007099,#006f99,#006d99,#006c99,#006a99,#006899,#006799,#006599,#006399,#006299,#006099,#005e99,#005c99,#005b99,#005999,#005799,#005599,#005399,#085299,#0f5099,#174e99,#1f4c99,#274a99,#2f4899,#374699,#3f4499,#474299,#504099,#583e99,#603c99,#693a99,#713899,#7a3699,#833499,#8c3299,#953099,#992c95,#99288c,#992485,#99207e,#991d78,#991a73,#99176e,#991469,#991265,#991061,#990e5d,#990c59,#990a56,#990853,#990750,#99054d,#99044b,#990248,#990146,#990044,#990042,#990040,#99003e,#99003c,#99003a,#990039,#990037,#990036,#990034,#990033,#990031,#990030,#99002f,#99002e,#99002d,#99002c,#99002b,#99002a,#990029,#990028,#990027,#990026,#990025,#990024,#990024,#990023,#990022,#990021,#990021,#990020,#99001f,#99001f,#99001e,#99001d,#99001d,#99001c,#99001c,#99001b,#99001b,#99001a,#99001a,#990019,#990019,#990018,#990018,#990017,#990017)"></b><b class="r6" style="top:174px;background:linear-gradient(90deg,#007c99,#007a99,#007999,#007799,#007699,#007499,#007399,#007199,#007099,#006e99,#006d99,#006b99,#006a99,#006899,#006799,#006599,#006499,#006299,#006099,#005f99,#005d99,#005b99,#005a99,#005899,#005699,#005599,#005399,#005199,#004f99,#004e99,#064c99,#0e4a99,#154899,#1c4699,#244599,#2c4399,#334199,#3b3f99,#433d99,#4b3b99,#533999,#5b3799,#633599,#6b3399,#733199,#7b2f99,#842d99,#8c2b99,#952999,#992695,#99228d,#991e86,#991b7f,#99187a,#991574,#99136f,#99106a,#990e66,#990c62,#990a5e,#99095b,#990758,#990555,#990452,#99034f,#99014c,#99004a,#990048,#990045,#990043,#990041,#990040,#99003e,#99003c,#99003a,#990039,#990037,#990036,#990035,#990033,#990032,#990031,#990030,#99002e,#99002d,#99002c,#99002b,#99002a,#990029,#990028,#990028,#990027,#990026,#990025,#990024,#990024,#990023,#990022,#990021,#990021,#990020,#99001f,#99001f,#99001e,#99001e,#99001d,#99001d,#99001c,#99001b,#99001b,#99001a,#99001a,#99001a,#990019,#990019)"></b><b class="r6" style="top:180px;background:linear-gradient(90deg,#007599,#007499,#007299,#007199,#007099,#006e99,#006d99,#006b99,#006a99,#006899,#006799,#006599,#006499,#006299,#006199,#005f99,#005e99,#005c99,#005b99,#005999,#005799,#005699,#005499,#005399,#005199,#004f99,#004e99,#004c99,#004a99,#004899,#054799,#0c4599,#134399,#1a4199,#214099,#293e99,#303c99,#373a99,#3f3899,#463699,#4e3599,#553399,#5d3199,#652f99,#6d2d99,#752b99,#7d2999,#852799,#8d2599,#952399,#992095,#991d8d,#991987,#991680,#99147b,#991175,#990f70,#990d6c,#990b68,#990964,#990760,#99065d,#990459,#990356,#990153,#990051,#99004e,#99004c,#990049,#990047,#990045,#990043,#990041,#99003f,#99003e,#99003c,#99003b,#990039,#990038,#990036,#990035,#990034,#990032,#990031,#990030,#99002f,#99002e,#99002d,#99002c,#99002b,#99002a,#990029,#990028,#990027,#990027,#990026,#990025,#990024,#990024,#990023,#990022,#990021,#990021,#990020,#990020,#99001f,#99001e,#99001e,#99001d,#99001d,#99001c,#99001c,#99001b,#99001b,#99001a)"></b><b class="r6" style="top:186px;background:linear-gradient(90deg,#006f99,#006e99,#006d99,#006b99,#006a99,#006899,#006799,#006699,#006499,#006399,#006199,#006099,#005e99,#005d99,#005b99,#005a99,#005899,#005799,#005599,#005499,#005299,#005199,#004f99,#004d99,#004c99,#004a99,#004999,#004799,#004599,#004499,#044299,#0a4099,#113f99,#183d99,#1f3b99,#263999,#2d3899,#343699,#3b3499,#423299,#493099,#512f99,#582d99,#602b99,#672999,#6f2799,#762599,#7e2399,#852199,#8d1f99,#951d99,#991b95,#99188e,#991587,#991281,#99107c,#990d76,#990b72,#99096d,#990869,#990665,#990462,#99035e,#99015b,#990058,#990055,#990052,#990050,#99004d,#99004b,#990049,#990047,#990045,#990043,#990041,#99003f,#99003e,#99003c,#99003b,#990039,#990038,#990037,#990035,#990034,#990033,#990032,#990031,#99002f,#99002e,#99002d,#99002c,#99002b,#99002b,#99002a,#990029,#990028,#990027,#990026,#990026,#990025,#990024,#990024,#990023,#990022,#990022,#990021,#990020,#990020,#99001f,#99001f,#99001e,#99001e,#99001d,#99001d,#99001c)"></b><b class="r6" style="top:192px;background:linear-gradient(90deg,#006a99,#006899,#006799,#006699,#006499,#006399,#006299,#006099,#005f99,#005d99,#005c99,#005b99,#005999,#005899,#005699,#005599,#005399,#005299,#005099,#004f99,#004d99,#004c99,#004a99,#004999,#004799,#004699,#004499,#004299,#004199,#003f99,#023e99,#093c99,#0f3a99,#163999,#1d3799,#233599,#2a3499,#313299,#383099,#3e2e99,#452d99,#4c2b99,#532999,#5a2799,#622599,#692499,#702299,#772099,#7f1e99,#861c99,#8e1a99,#951899,#991695,#99138e,#991088,#990e82,#990c7d,#990a78,#990873,#99066e,#99046a,#990367,#990163,#990060,#99005c,#990059,#990057,#990054,#990051,#99004f,#99004d,#99004b,#990048,#990047,#990045,#990043,#990041,#99003f,#99003e,#99003c,#99003b,#990039,#990038,#990037,#990036,#990034,#990033,#990032,#990031,#990030,#99002f,#99002e,#99002d,#99002c,#99002b,#99002a,#990029,#990029,#990028,#990027,#990026,#990026,#990025,#990024,#990024,#990023,#990022,#990022,#990021,#990020,#990020,#99001f,#99001f,#99001e,#99001e)"></b><b class="r6" style="top:198px;background:linear-gradient(90deg,#006599,#006399,#006299,#006199,#005f99,#005e99,#005d99,#005b99,#005a99,#005999,#005799,#005699,#005499,#005399,#005299,#005099,#004f99,#004d99,#004c99,#004a99,#004999,#004799,#004699,#004499,#004399,#004199,#004099,#003e99,#003d99,#003b99,#013999,#073899,#0e3699,#143599,#1a3399,#213199,#273099,#2e2e99,#342c99,#3b2b99,#422999,#482799,#4f2699,#562499,#5d2299,#642099,#6b1f99,#721d99,#791b99,#801999,#871799,#8e1599,#951499,#991195,#990f8f,#990c88,#990a83,#99087d,#990679,#990574,#990370,#99026c,#990068,#990064,#990061,#99005e,#99005b,#990058,#990055,#990053,#990051,#99004e,#99004c,#99004a,#990048,#990046,#990044,#990043,#990041,#99003f,#99003e,#99003c,#99003b,#99003a,#990038,#990037,#990036,#990035,#990034,#990032,#990031,#990030,#99002f,#99002e,#99002d,#99002d,#99002c,#99002b,#99002a,#990029,#990028,#990028,#990027,#990026,#990026,#990025,#990024,#990024,#990023,#990022,#990022,#990021,#990021,#990020,#990020)"></b><b class="r6" style="top:204px;background:linear-gradient(90deg,#006099,#005e99,#005d99,#005c99,#005b99,#005999,#005899,#005799,#005599,#005499,#005399,#005199,#005099,#004f99,#004d99,#004c99,#004a99,#004999,#004899,#004699,#004599,#004399,#004299,#004099,#003f99,#003d99,#003c99,#003a99,#003999,#003799,#003699,#063499,#0c3399,#123199,#192f99,#1f2e99,#252c99,#2b2b99,#312999,#382799,#3e2699,#452499,#4b2299,#522199,#581f99,#5f1d99,#651c99,#6c1a99,#731899,#7a1699,#811599,#881399,#8e1199,#960f99,#990d96,#990b8f,#990989,#990783,#99057e,#990379,#990275,#990071,#99006d,#990069,#990066,#990062,#99005f,#99005c,#99005a,#990057,#990054,#990052,#990050,#99004e,#99004c,#99004a,#990048,#990046,#990044,#990043,#990041,#99003f,#99003e,#99003c,#99003b,#99003a,#990039,#990037,#990036,#990035,#990034,#990033,#990032,#990031,#990030,#99002f,#99002e,#99002d,#99002c,#99002b,#99002b,#99002a,#990029,#990028,#990028,#990027,#990026,#990025,#990025,#990024,#990024,#990023,#990022,#990022,#990021)"></b><b class="r6" style="top:210px;background:linear-gradient(90deg,#005b99,#005a99,#005999,#005799,#005699,#005599,#005499,#005299,#005199,#005099,#004e99,#004d99,#004c99,#004a99,#004999,#004899,#004699,#004599,#004499,#004299,#004199,#003f99,#003e99,#003c99,#003b99,#003a99,#003899,#003799,#003599,#003499,#003299,#053199,#0b2f99,#112e99,#172c99,#1d2b99,#232999,#292799,#2f2699,#352499,#3b2399,#412199,#471f99,#4e1e99,#541c99,#5a1b99,#611999,#671799,#6e1699,#741499,#7b1299,#811099,#880f99,#8f0d99,#960b99,#990996,#99078f,#99058a,#990384,#99027f,#99007a,#990076,#990072,#99006e,#99006a,#990067,#990064,#990061,#99005e,#99005b,#990058,#990056,#990053,#990051,#99004f,#99004d,#99004b,#990049,#990047,#990046,#990044,#990042,#990041,#99003f,#99003e,#99003d,#99003b,#99003a,#990039,#990038,#990036,#990035,#990034,#990033,#990032,#990031,#990030,#99002f,#99002e,#99002e,#99002d,#99002c,#99002b,#99002a,#99002a,#990029,#990028,#990027,#990027,#990026,#990025,#990025,#990024,#990024,#990023)"></b><b class="r6" style="top:216px;background:linear-gradient(90deg,#005799,#005699,#005499,#005399,#005299,#005199,#004f99,#004e99,#004d99,#004c99,#004a99,#004999,#004899,#004699,#004599,#004499,#004399,#004199,#004099,#003e99,#003d99,#003c99,#003a99,#003999,#003899,#003699,#003599,#003399,#003299,#003099,#002f99,#042d99,#0a2c99,#0f2b99,#152999,#1b2899,#212699,#262499,#2c2399,#322199,#382099,#3e1e99,#441d99,#4a1b99,#501a99,#561899,#5c1699,#631599,#691399,#6f1199,#751099,#7c0e99,#820c99,#890b99,#8f0999,#960799,#990596,#990490,#99028a,#990085,#990080,#99007b,#990077,#990073,#99006f,#99006b,#990068,#990065,#990062,#99005f,#99005c,#99005a,#990057,#990055,#990053,#990050,#99004e,#99004c,#99004b,#990049,#990047,#990045,#990044,#990042,#990041,#99003f,#99003e,#99003d,#99003b,#99003a,#990039,#990038,#990037,#990036,#990034,#990033,#990032,#990032,#990031,#990030,#99002f,#99002e,#99002d,#99002c,#99002c,#99002b,#99002a,#990029,#990029,#990028,#990027,#990027,#990026,#990025,#990025)"></b><b class="r6" style="top:222px;background:linear-gradient(90deg,#005399,#005299,#005199,#004f99,#004e99,#004d99,#004c99,#004a99,#004999,#004899,#004799,#004599,#004499,#004399,#004299,#004099,#003f99,#003e99,#003c99,#003b99,#003a99,#003899,#003799,#003699,#003499,#003399,#003299,#003099,#002f99,#002d99,#002c99,#032a99,#082999,#0e2899,#132699,#192599,#1f2399,#242299,#2a2099,#2f1f99,#351d99,#3b1c99,#411a99,#471999,#4c1799,#521699,#581499,#5e1299,#641199,#6a0f99,#700e99,#770c99,#7d0a99,#830999,#890799,#8f0599,#960499,#990296,#990090,#99008a,#990085,#990080,#99007c,#990078,#990074,#990070,#99006d,#990069,#990066,#990063,#990060,#99005e,#99005b,#990059,#990056,#990054,#990052,#990050,#99004e,#99004c,#99004a,#990048,#990047,#990045,#990044,#990042,#990041,#99003f,#99003e,#99003d,#99003b,#99003a,#990039,#990038,#990037,#990036,#990035,#990034,#990033,#990032,#990031,#990030,#99002f,#99002e,#99002e,#99002d,#99002c,#99002b,#99002b,#99002a,#990029,#990028,#990028,#990027,#990027)"></b><b class="r6" style="top:228px;background:linear-gradient(90deg,#004f99,#004e99,#004d99,#004c99,#004a99,#004999,#004899,#004799,#004699,#004499,#004399,#004299,#004199,#003f99,#003e99,#003d99,#003c99,#003a99,#003999,#003899,#003699,#003599,#003499,#003399,#003199,#003099,#002f99,#002d99,#002c99,#002a99,#002999,#022899,#072699,#0d2599,#122399,#172299,#1d2199,#221f99,#281e99,#2d1c99,#331b99,#381999,#3e1899,#431699,#491599,#4f1399,#541299,#5a1099,#600f99,#660d99,#6c0c99,#720a99,#780899,#7e0799,#840599,#8a0499,#900299,#960099,#990096,#990090,#99008b,#990086,#990081,#99007d,#990079,#990075,#990071,#99006e,#99006a,#990067,#990064,#990061,#99005f,#99005c,#99005a,#990057,#990055,#990053,#990051,#99004f,#99004d,#99004b,#99004a,#990048,#990046,#990045,#990043,#990042,#990041,#99003f,#99003e,#99003d,#99003c,#99003a,#990039,#990038,#990037,#990036,#990035,#990034,#990033,#990032,#990031,#990030,#990030,#99002f,#99002e,#99002d,#99002c,#99002c,#99002b,#99002a,#99002a,#990029,#990028)"></b><b class="r6" style="top:234px;background:linear-gradient(90deg,#004c99,#004a99,#004999,#004899,#004799,#004699,#004599,#004399,#004299,#004199,#004099,#003f99,#003d99,#003c99,#003b99,#003a99,#003999,#003799,#003699,#003599,#003399,#003299,#003199,#003099,#002e99,#002d99,#002c99,#002a99,#002999,#002899,#002699,#012599,#062499,#0b2299,#112199,#161f99,#1b1e99,#201d99,#261b99,#2b1a99,#301899,#361799,#3b1699,#401499,#461399,#4b1199,#511099,#560e99,#5c0d99,#620b99,#670a99,#6d0899,#730799,#790599,#7e0499,#840299,#8a0099,#900099,#960099,#990096,#990090,#99008b,#990086,#990082,#99007d,#990079,#990076,#990072,#99006f,#99006b,#990068,#990065,#990063,#990060,#99005d,#99005b,#990059,#990056,#990054,#990052,#990050,#99004f,#99004d,#99004b,#990049,#990048,#990046,#990045,#990043,#990042,#990041,#99003f,#99003e,#99003d,#99003c,#99003a,#990039,#990038,#990037,#990036,#990035,#990034,#990033,#990033,#990032,#990031,#990030,#99002f,#99002e,#99002e,#99002d,#99002c,#99002b,#99002b,#99002a)"></b><b class="r6" style="top:240px;background:linear-gradient(90deg,#004899,#004799,#004699,#004599,#004499,#004399,#004199,#004099,#003f99,#003e99,#003d99,#003c99,#003a99,#003999,#003899,#003799,#003699,#003499,#003399,#003299,#003199,#002f99,#002e99,#002d99,#002c99,#002a99,#002999,#002899,#002699,#002599,#002499,#002399,#052199,#0a2099,#0f1e99,#141d99,#191c99,#1e1a99,#241999,#291899,#2e1699,#331599,#381399,#3e1299,#431199,#480f99,#4e0e99,#530c99,#580b99,#5e0999,#630899,#690699,#6e0599,#740399,#7a0299,#7f0099,#850099,#8b0099,#900099,#960099,#990096,#990091,#99008c,#990087,#990082,#99007e,#99007a,#990076,#990073,#990070,#99006c,#990069,#990066,#990064,#990061,#99005f,#99005c,#99005a,#990058,#990056,#990054,#990052,#990050,#99004e,#99004c,#99004b,#990049,#990047,#990046,#990045,#990043,#990042,#990040,#99003f,#99003e,#99003d,#99003c,#99003b,#99003a,#990038,#990037,#990037,#990036,#990035,#990034,#990033,#990032,#990031,#990030,#990030,#99002f,#99002e,#99002d,#99002d,#99002c)"></b><b class="r6" style="top:246px;background:linear-gradient(90deg,#004599,#004499,#004399,#004299,#004199,#004099,#003e99,#003d99,#003c99,#003b99,#003a99,#003999,#003899,#003699,#003599,#003499,#003399,#003299,#003099,#002f99,#002e99,#002d99,#002c99,#002a99,#002999,#002899,#002799,#002599,#002499,#002399,#002199,#002099,#041f99,#091e99,#0e1c99,#131b99,#181a99,#1d1899,#221799,#271699,#2c1499,#311399,#361199,#3b1099,#400f99,#450d99,#4a0c99,#500b99,#550999,#5a0899,#5f0699,#650599,#6a0399,#700299,#750099,#7a0099,#800099,#850099,#8b0099,#910099,#960099,#990096,#990091,#99008c,#990087,#990083,#99007f,#99007b,#990077,#990074,#990070,#99006d,#99006a,#990067,#990065,#990062,#990060,#99005d,#99005b,#990059,#990057,#990055,#990053,#990051,#99004f,#99004d,#99004c,#99004a,#990049,#990047,#990046,#990044,#990043,#990042,#990040,#99003f,#99003e,#99003d,#99003c,#99003b,#99003a,#990039,#990038,#990037,#990036,#990035,#990034,#990033,#990032,#990031,#990031,#990030,#99002f,#99002e,#99002e)"></b><b class="r6" style="top:252px;background:linear-gradient(90deg,#004299,#004199,#004099,#003f99,#003e99,#003d99,#003c99,#003a99,#003999,#003899,#003799,#003699,#003599,#003499,#003299,#003199,#003099,#002f99,#002e99,#002d99,#002b99,#002a99,#002999,#002899,#002799,#002599,#002499,#002399,#002299,#002099,#001f99,#001e99,#041d99,#081b99,#0d1a99,#121999,#161899,#1b1699,#201599,#251499,#2a1299,#2f1199,#331099,#380e99,#3d0d99,#420c99,#470a99,#4c0999,#520799,#570699,#5c0599,#610399,#660299,#6b0099,#710099,#760099,#7b0099,#810099,#860099,#8b0099,#910099,#960099,#990096,#990091,#99008c,#990088,#990083,#99007f,#99007c,#990078,#990075,#990071,#99006e,#99006b,#990068,#990066,#990063,#990061,#99005e,#99005c,#99005a,#990058,#990056,#990054,#990052,#990050,#99004f,#99004d,#99004b,#99004a,#990048,#990047,#990046,#990044,#990043,#990042,#990040,#99003f,#99003e,#99003d,#99003c,#99003b,#99003a,#990039,#990038,#990037,#990036,#990035,#990034,#990033,#990033,#990032,#990031,#990030,#99002f)"></b><b class="r6" style="top:258px;background:linear-gradient(90deg,#003f99,#003e99,#003d99,#003c99,#003b99,#003a99,#003999,#003899,#003799,#003699,#003499,#003399,#003299,#003199,#003099,#002f99,#002e99,#002d99,#002b99,#002a99,#002999,#002899,#002799,#002699,#002499,#002399,#002299,#002199,#002099,#001e99,#001d99,#001c99,#031b99,#071999,#0c1899,#101799,#151699,#1a1499,#1e1399,#231299,#281099,#2d0f99,#310e99,#360d99,#3b0b99,#400a99,#450999,#4a0799,#4e0699,#530599,#580399,#5d0299,#620099,#670099,#6d0099,#720099,#770099,#7c0099,#810099,#860099,#8c0099,#910099,#960099,#990096,#990091,#99008d,#990088,#990084,#990080,#99007c,#990079,#990075,#990072,#99006f,#99006c,#990069,#990067,#990064,#990062,#99005f,#99005d,#99005b,#990059,#990057,#990055,#990053,#990051,#990050,#99004e,#99004c,#99004b,#990049,#990048,#990047,#990045,#990044,#990043,#990042,#990040,#99003f,#99003e,#99003d,#99003c,#99003b,#99003a,#990039,#990038,#990037,#990036,#990035,#990034,#990034,#990033,#990032,#990031)"></b><b class="r6" style="top:264px;background:linear-gradient(90deg,#003d99,#003b99,#003a99,#003999,#003899,#003799,#003699,#003599,#003499,#003399,#003299,#003199,#003099,#002f99,#002e99,#002c99,#002b99,#002a99,#002999,#002899,#002799,#002699,#002499,#002399,#002299,#002199,#002099,#001f99,#001d99,#001c99,#001b99,#001a99,#021999,#061799,#0b1699,#0f1599,#141499,#181399,#1d1199,#211099,#260f99,#2b0e99,#2f0c99,#340b99,#390a99,#3d0899,#420799,#470699,#4c0499,#500399,#550299,#5a0099,#5f0099,#640099,#690099,#6e0099,#730099,#780099,#7d0099,#820099,#870099,#8c0099,#910099,#960099,#990096,#990092,#99008d,#990089,#990084,#990081,#99007d,#990079,#990076,#990073,#990070,#99006d,#99006a,#990068,#990065,#990063,#990060,#99005e,#99005c,#99005a,#990058,#990056,#990054,#990053,#990051,#99004f,#99004e,#99004c,#99004b,#990049,#990048,#990046,#990045,#990044,#990043,#990041,#990040,#99003f,#99003e,#99003d,#99003c,#99003b,#99003a,#990039,#990038,#990037,#990036,#990036,#990035,#990034,#990033)"></b><b class="r6" style="top:270px;background:linear-gradient(90deg,#003a99,#003999,#003899,#003799,#003699,#003599,#003499,#003399,#003299,#003199,#003099,#002e99,#002d99,#002c99,#002b99,#002a99,#002999,#002899,#002799,#002699,#002599,#002399,#002299,#002199,#002099,#001f99,#001e99,#001d99,#001b99,#001a99,#001999,#001899,#011799,#051699,#0a1499,#0e1399,#131299,#171199,#1b1099,#200e99,#240d99,#290c99,#2d0b99,#320999,#360899,#3b0799,#3f0699,#440499,#490399,#4d0299,#520199,#570099,#5c0099,#600099,#650099,#6a0099,#6f0099,#740099,#790099,#7d0099,#820099,#870099,#8c0099,#910099,#960099,#990097,#990092,#99008d,#990089,#990085,#990081,#99007d,#99007a,#990077,#990074,#990071,#99006e,#99006b,#990068,#990066,#990064,#990061,#99005f,#99005d,#99005b,#990059,#990057,#990055,#990054,#990052,#990050,#99004f,#99004d,#99004c,#99004a,#990049,#990047,#990046,#990045,#990044,#990043,#990041,#990040,#99003f,#99003e,#99003d,#99003c,#99003b,#99003a,#990039,#990038,#990037,#990037,#990036,#990035)"></b><b class="r6" style="top:276px;background:linear-gradient(90deg,#003799,#003699,#003599,#003499,#003399,#003299,#003199,#003099,#002f99,#002e99,#002d99,#002c99,#002b99,#002a99,#002999,#002899,#002799,#002699,#002599,#002499,#002399,#002199,#002099,#001f99,#001e99,#001d99,#001c99,#001b99,#001a99,#001899,#001799,#001699,#001599,#051499,#091399,#0d1299,#111099,#160f99,#1a0e99,#1e0d99,#230c99,#270a99,#2b0999,#300899,#340799,#390699,#3d0499,#420399,#460299,#4b0199,#4f0099,#540099,#580099,#5d0099,#620099,#660099,#6b0099,#700099,#750099,#790099,#7e0099,#830099,#880099,#8d0099,#920099,#960099,#990097,#990092,#99008e,#990089,#990085,#990082,#99007e,#99007b,#990077,#990074,#990071,#99006f,#99006c,#990069,#990067,#990065,#990062,#990060,#99005e,#99005c,#99005a,#990058,#990056,#990055,#990053,#990051,#990050,#99004e,#99004d,#99004b,#99004a,#990049,#990047,#990046,#990045,#990044,#990042,#990041,#990040,#99003f,#99003e,#99003d,#99003c,#99003b,#99003a,#990039,#990038,#990038,#990037)"></b><b class="r6" style="top:282px;background:linear-gradient(90deg,#003599,#003499,#003399,#003299,#003199,#003099,#002f99,#002e99,#002d99,#002c99,#002b99,#002a99,#002999,#002899,#002799,#002699,#002599,#002499,#002399,#002299,#002199,#002099,#001e99,#001d99,#001c99,#001b99,#001a99,#001999,#001899,#001799,#001699,#001599,#001399,#041299,#081199,#0c1099,#100f99,#140e99,#190c99,#1d0b99,#210a99,#250999,#2a0899,#2e0799,#320599,#370499,#3b0399,#3f0299,#440199,#480099,#4c0099,#510099,#550099,#5a0099,#5e0099,#630099,#680099,#6c0099,#710099,#750099,#7a0099,#7f0099,#830099,#880099,#8d0099,#920099,#970099,#990097,#990092,#99008e,#99008a,#990086,#990082,#99007f,#99007b,#990078,#990075,#990072,#99006f,#99006d,#99006a,#990068,#990065,#990063,#990061,#99005f,#99005d,#99005b,#990059,#990057,#990056,#990054,#990052,#990051,#99004f,#99004e,#99004c,#99004b,#99004a,#990048,#990047,#990046,#990045,#990043,#990042,#990041,#990040,#99003f,#99003e,#99003d,#99003c,#99003b,#99003a,#990039,#990039)"></b><b class="r6" style="top:288px;background:linear-gradient(90deg,#003399,#003299,#003199,#003099,#002f99,#002e99,#002d99,#002c99,#002b99,#002a99,#002999,#002899,#002799,#002699,#002599,#002499,#002399,#002299,#002199,#002099,#001f99,#001e99,#001d99,#001c99,#001a99,#001999,#001899,#001799,#001699,#001599,#001499,#001399,#001299,#031199,#071099,#0b0e99,#0f0d99,#130c99,#170b99,#1b0a99,#200999,#240899,#280699,#2c0599,#300499,#350399,#390299,#3d0199,#410099,#460099,#4a0099,#4e0099,#530099,#570099,#5b0099,#600099,#640099,#690099,#6d0099,#720099,#760099,#7b0099,#7f0099,#840099,#890099,#8d0099,#920099,#970099,#990097,#990092,#99008e,#99008a,#990086,#990083,#99007f,#99007c,#990079,#990076,#990073,#990070,#99006e,#99006b,#990069,#990066,#990064,#990062,#990060,#99005e,#99005c,#99005a,#990058,#990057,#990055,#990053,#990052,#990050,#99004f,#99004d,#99004c,#99004b,#990049,#990048,#990047,#990046,#990044,#990043,#990042,#990041,#990040,#99003f,#99003e,#99003d,#99003c,#99003b,#99003a)"></b><b class="r6" style="top:294px;background:linear-gradient(90deg,#003199,#003099,#002f99,#002e99,#002d99,#002c99,#002b99,#002a99,#002999,#002899,#002799,#002699,#002599,#002499,#002399,#002299,#002199,#002099,#001f99,#001e99,#001d99,#001c99,#001b99,#001a99,#001999,#001899,#001799,#001699,#001599,#001499,#001299,#001199,#001099,#020f99,#060e99,#0a0d99,#0e0c99,#120b99,#160a99,#1a0999,#1e0799,#220699,#260599,#2a0499,#2e0399,#330299,#370199,#3b0099,#3f0099,#430099,#470099,#4c0099,#500099,#540099,#580099,#5d0099,#610099,#650099,#6a0099,#6e0099,#730099,#770099,#7b0099,#800099,#840099,#890099,#8e0099,#920099,#970099,#990097,#990092,#99008e,#99008a,#990087,#990083,#990080,#99007c,#990079,#990076,#990074,#990071,#99006e,#99006c,#990069,#990067,#990065,#990063,#990061,#99005f,#99005d,#99005b,#990059,#990057,#990056,#990054,#990053,#990051,#990050,#99004e,#99004d,#99004c,#99004a,#990049,#990048,#990047,#990045,#990044,#990043,#990042,#990041,#990040,#99003f,#99003e,#99003d,#99003c)"></b><b class="r6" style="top:300px;background:linear-gradient(90deg,#002f99,#002e99,#002d99,#002c99,#002b99,#002a99,#002999,#002899,#002799,#002699,#002599,#002499,#002399,#002299,#002199,#002099,#001f99,#001e99,#001d99,#001c99,#001b99,#001a99,#001999,#001899,#001799,#001699,#001599,#001499,#001399,#001299,#001199,#001099,#000f99,#020e99,#060d99,#090c99,#0d0b99,#110999,#150899,#190799,#1d0699,#210599,#250499,#290399,#2d0299,#310199,#350099,#390099,#3d0099,#410099,#450099,#490099,#4d0099,#510099,#560099,#5a0099,#5e0099,#620099,#670099,#6b0099,#6f0099,#730099,#780099,#7c0099,#810099,#850099,#890099,#8e0099,#920099,#970099,#990097,#990093,#99008f,#99008b,#990087,#990084,#990080,#99007d,#99007a,#990077,#990074,#990072,#99006f,#99006d,#99006a,#990068,#990066,#990064,#990062,#990060,#99005e,#99005c,#99005a,#990058,#990057,#990055,#990054,#990052,#990051,#99004f,#99004e,#99004d,#99004b,#99004a,#990049,#990048,#990046,#990045,#990044,#990043,#990042,#990041,#990040,#99003f,#99003e)"></b><b class="r6" style="top:306px;background:linear-gradient(90deg,#002d99,#002c99,#002b99,#002a99,#002999,#002899,#002799,#002699,#002599,#002499,#002399,#002299,#002199,#002199,#002099,#001f99,#001e99,#001d99,#001c99,#001b99,#001a99,#001999,#001899,#001799,#001699,#001599,#001499,#001399,#001299,#001199,#001099,#000e99,#000d99,#010c99,#050b99,#090a99,#0c0999,#100899,#140799,#180699,#1c0599,#1f0499,#230399,#270299,#2b0199,#2f0099,#330099,#370099,#3b0099,#3f0099,#430099,#470099,#4b0099,#4f0099,#530099,#570099,#5b0099,#5f0099,#630099,#680099,#6c0099,#700099,#740099,#790099,#7d0099,#810099,#850099,#8a0099,#8e0099,#920099,#970099,#990097,#990093,#99008f,#99008b,#990087,#990084,#990081,#99007e,#99007b,#990078,#990075,#990072,#990070,#99006d,#99006b,#990069,#990067,#990064,#990062,#990060,#99005f,#99005d,#99005b,#990059,#990058,#990056,#990054,#990053,#990052,#990050,#99004f,#99004d,#99004c,#99004b,#99004a,#990048,#990047,#990046,#990045,#990044,#990043,#990042,#990041,#990040)"></b><b class="r6" style="top:312px;background:linear-gradient(90deg,#002b99,#002a99,#002999,#002899,#002799,#002699,#002599,#002499,#002499,#002399,#002299,#002199,#002099,#001f99,#001e99,#001d99,#001c99,#001b99,#001a99,#001999,#001899,#001799,#001699,#001599,#001499,#001399,#001299,#001199,#001099,#000f99,#000e99,#000d99,#000c99,#010b99,#040a99,#080999,#0b0899,#0f0799,#130699,#170599,#1a0499,#1e0399,#220299,#260199,#2a0099,#2d0099,#310099,#350099,#390099,#3d0099,#410099,#450099,#490099,#4d0099,#500099,#540099,#580099,#5d0099,#610099,#650099,#690099,#6d0099,#710099,#750099,#790099,#7d0099,#820099,#860099,#8a0099,#8e0099,#930099,#970099,#990097,#990093,#99008f,#99008b,#990088,#990084,#990081,#99007e,#99007b,#990078,#990076,#990073,#990070,#99006e,#99006c,#990069,#990067,#990065,#990063,#990061,#99005f,#99005e,#99005c,#99005a,#990058,#990057,#990055,#990054,#990052,#990051,#990050,#99004e,#99004d,#99004c,#99004b,#990049,#990048,#990047,#990046,#990045,#990044,#990043,#990042)"></b><b class="r6" style="top:318px;background:linear-gradient(90deg,#002999,#002899,#002799,#002699,#002599,#002599,#002499,#002399,#002299,#002199,#002099,#001f99,#001e99,#001d99,#001c99,#001b99,#001a99,#001999,#001999,#001899,#001799,#001699,#001599,#001499,#001399,#001299,#001199,#001099,#000f99,#000e99,#000d99,#000c99,#000b99,#000a99,#030999,#070899,#0b0799,#0e0699,#120599,#160499,#190399,#1d0299,#210199,#240099,#280099,#2c0099,#2f0099,#330099,#370099,#3b0099,#3f0099,#420099,#460099,#4a0099,#4e0099,#520099,#560099,#5a0099,#5e0099,#620099,#660099,#6a0099,#6e0099,#720099,#760099,#7a0099,#7e0099,#820099,#860099,#8a0099,#8e0099,#930099,#970099,#990097,#990093,#99008f,#99008c,#990088,#990085,#990082,#99007f,#99007c,#990079,#990076,#990074,#990071,#99006f,#99006c,#99006a,#990068,#990066,#990064,#990062,#990060,#99005e,#99005d,#99005b,#990059,#990058,#990056,#990055,#990053,#990052,#990051,#99004f,#99004e,#99004d,#99004b,#99004a,#990049,#990048,#990047,#990046,#990045,#990044)"></b><b class="r6" style="top:324px;background:linear-gradient(90deg,#002799,#002699,#002699,#002599,#002499,#002399,#002299,#002199,#002099,#001f99,#001e99,#001e99,#001d99,#001c99,#001b99,#001a99,#001999,#001899,#001799,#001699,#001599,#001499,#001399,#001299,#001199,#001099,#000f99,#000f99,#000e99,#000d99,#000c99,#000b99,#000a99,#000999,#030899,#060799,#0a0699,#0d0599,#110499,#150399,#180299,#1c0199,#1f0099,#230099,#270099,#2a0099,#2e0099,#320099,#350099,#390099,#3d0099,#400099,#440099,#480099,#4c0099,#500099,#530099,#570099,#5b0099,#5f0099,#630099,#670099,#6b0099,#6f0099,#730099,#770099,#7a0099,#7e0099,#830099,#870099,#8b0099,#8f0099,#930099,#970099,#990097,#990093,#99008f,#99008c,#990088,#990085,#990082,#99007f,#99007c,#990079,#990077,#990074,#990072,#99006f,#99006d,#99006b,#990069,#990067,#990065,#990063,#990061,#99005f,#99005d,#99005c,#99005a,#990059,#990057,#990056,#990054,#990053,#990051,#990050,#99004f,#99004e,#99004c,#99004b,#99004a,#990049,#990048,#990047,#990046)"></b><b class="r6" style="top:330px;background:linear-gradient(90deg,#002699,#002599,#002499,#002399,#002299,#002199,#002099,#002099,#001f99,#001e99,#001d99,#001c99,#001b99,#001a99,#001999,#001899,#001799,#001799,#001699,#001599,#001499,#001399,#001299,#001199,#001099,#000f99,#000e99,#000d99,#000c99,#000b99,#000a99,#000999,#000899,#000899,#020799,#060699,#090599,#0d0499,#100399,#140299,#170199,#1b0099,#1e0099,#220099,#250099,#290099,#2c0099,#300099,#340099,#370099,#3b0099,#3e0099,#420099,#460099,#4a0099,#4d0099,#510099,#550099,#590099,#5c0099,#600099,#640099,#680099,#6c0099,#6f0099,#730099,#770099,#7b0099,#7f0099,#830099,#870099,#8b0099,#8f0099,#930099,#970099,#990097,#990093,#990090,#99008c,#990089,#990085,#990082,#99007f,#99007d,#99007a,#990077,#990075,#990072,#990070,#99006e,#99006c,#990069,#990067,#990065,#990064,#990062,#990060,#99005e,#99005d,#99005b,#990059,#990058,#990056,#990055,#990054,#990052,#990051,#990050,#99004e,#99004d,#99004c,#99004b,#99004a,#990049,#990048)"></b><b class="r6" style="top:336px;background:linear-gradient(90deg,#002499,#002399,#002299,#002199,#002199,#002099,#001f99,#001e99,#001d99,#001c99,#001b99,#001b99,#001a99,#001999,#001899,#001799,#001699,#001599,#001499,#001399,#001399,#001299,#001199,#001099,#000f99,#000e99,#000d99,#000c99,#000b99,#000a99,#000999,#000899,#000799,#000699,#020599,#050599,#080499,#0c0399,#0f0299,#130199,#160099,#190099,#1d0099,#200099,#240099,#270099,#2b0099,#2e0099,#320099,#350099,#390099,#3d0099,#400099,#440099,#470099,#4b0099,#4f0099,#520099,#560099,#5a0099,#5d0099,#610099,#650099,#690099,#6c0099,#700099,#740099,#780099,#7c0099,#800099,#830099,#870099,#8b0099,#8f0099,#930099,#970099,#990097,#990093,#990090,#99008c,#990089,#990086,#990083,#990080,#99007d,#99007a,#990078,#990075,#990073,#990071,#99006e,#99006c,#99006a,#990068,#990066,#990064,#990062,#990061,#99005f,#99005d,#99005c,#99005a,#990059,#990057,#990056,#990054,#990053,#990052,#990050,#99004f,#99004e,#99004d,#99004c,#99004b,#990049)"></b><b class="r6" style="top:342px;background:linear-gradient(90deg,#002299,#002299,#002199,#002099,#001f99,#001e99,#001d99,#001d99,#001c99,#001b99,#001a99,#001999,#001899,#001799,#001799,#001699,#001599,#001499,#001399,#001299,#001199,#001099,#000f99,#000f99,#000e99,#000d99,#000c99,#000b99,#000a99,#000999,#000899,#000799,#000699,#000599,#010499,#040399,#080399,#0b0299,#0e0199,#120099,#150099,#180099,#1c0099,#1f0099,#230099,#260099,#290099,#2d0099,#300099,#340099,#370099,#3b0099,#3e0099,#420099,#450099,#490099,#4d0099,#500099,#540099,#570099,#5b0099,#5f0099,#620099,#660099,#6a0099,#6d0099,#710099,#750099,#780099,#7c0099,#800099,#840099,#880099,#8b0099,#8f0099,#930099,#970099,#990097,#990093,#990090,#99008d,#990089,#990086,#990083,#990080,#99007e,#99007b,#990078,#990076,#990073,#990071,#99006f,#99006d,#99006b,#990069,#990067,#990065,#990063,#990061,#990060,#99005e,#99005d,#99005b,#990059,#990058,#990057,#990055,#990054,#990053,#990051,#990050,#99004f,#99004e,#99004d,#99004b)"></b><b class="r6" style="top:348px;background:linear-gradient(90deg,#002199,#002099,#001f99,#001f99,#001e99,#001d99,#001c99,#001b99,#001a99,#001a99,#001999,#001899,#001799,#001699,#001599,#001499,#001499,#001399,#001299,#001199,#001099,#000f99,#000e99,#000d99,#000d99,#000c99,#000b99,#000a99,#000999,#000899,#000799,#000699,#000599,#000499,#010399,#040399,#070299,#0a0199,#0e0099,#110099,#140099,#170099,#1b0099,#1e0099,#210099,#250099,#280099,#2b0099,#2f0099,#320099,#360099,#390099,#3d0099,#400099,#430099,#470099,#4a0099,#4e0099,#510099,#550099,#590099,#5c0099,#600099,#630099,#670099,#6a0099,#6e0099,#720099,#750099,#790099,#7d0099,#800099,#840099,#880099,#8c0099,#8f0099,#930099,#970099,#990097,#990094,#990090,#99008d,#99008a,#990086,#990084,#990081,#99007e,#99007b,#990079,#990076,#990074,#990072,#990070,#99006d,#99006b,#990069,#990068,#990066,#990064,#990062,#990060,#99005f,#99005d,#99005c,#99005a,#990059,#990057,#990056,#990055,#990053,#990052,#990051,#990050,#99004e,#99004d)"></b><b class="r6" style="top:354px;background:linear-gradient(90deg,#002099,#001f99,#001e99,#001d99,#001c99,#001b99,#001b99,#001a99,#001999,#001899,#001799,#001799,#001699,#001599,#001499,#001399,#001299,#001199,#001199,#001099,#000f99,#000e99,#000d99,#000c99,#000b99,#000b99,#000a99,#000999,#000899,#000799,#000699,#000599,#000499,#000399,#000299,#030299,#060199,#0a0099,#0d0099,#100099,#130099,#160099,#1a0099,#1d0099,#200099,#230099,#270099,#2a0099,#2d0099,#310099,#340099,#370099,#3b0099,#3e0099,#420099,#450099,#480099,#4c0099,#4f0099,#530099,#560099,#5a0099,#5d0099,#610099,#640099,#680099,#6b0099,#6f0099,#720099,#760099,#7a0099,#7d0099,#810099,#850099,#880099,#8c0099,#900099,#930099,#970099,#990097,#990094,#990090,#99008d,#99008a,#990087,#990084,#990081,#99007e,#99007c,#990079,#990077,#990075,#990072,#990070,#99006e,#99006c,#99006a,#990068,#990066,#990065,#990063,#990061,#990060,#99005e,#99005c,#99005b,#99005a,#990058,#990057,#990055,#990054,#990053,#990052,#990050,#99004f)"></b><b class="r6" style="top:360px;background:linear-gradient(90deg,#001e99,#001d99,#001d99,#001c99,#001b99,#001a99,#001999,#001999,#001899,#001799,#001699,#001599,#001499,#001499,#001399,#001299,#001199,#001099,#000f99,#000f99,#000e99,#000d99,#000c99,#000b99,#000a99,#000999,#000999,#000899,#000799,#000699,#000599,#000499,#000399,#000299,#000299,#030199,#060099,#090099,#0c0099,#0f0099,#120099,#150099,#190099,#1c0099,#1f0099,#220099,#260099,#290099,#2c0099,#2f0099,#330099,#360099,#390099,#3c0099,#400099,#430099,#460099,#4a0099,#4d0099,#510099,#540099,#570099,#5b0099,#5e0099,#620099,#650099,#690099,#6c0099,#700099,#730099,#770099,#7a0099,#7e0099,#810099,#850099,#890099,#8c0099,#900099,#930099,#970099,#990097,#990094,#990090,#99008d,#99008a,#990087,#990084,#990081,#99007f,#99007c,#99007a,#990077,#990075,#990073,#990071,#99006f,#99006d,#99006b,#990069,#990067,#990065,#990064,#990062,#990060,#99005f,#99005d,#99005c,#99005a,#990059,#990057,#990056,#990055,#990054,#990052,#990051)"></b><b class="r6" style="top:366px;background:linear-gradient(90deg,#001d99,#001c99,#001b99,#001a99,#001a99,#001999,#001899,#001799,#001699,#001699,#001599,#001499,#001399,#001299,#001299,#001199,#001099,#000f99,#000e99,#000d99,#000d99,#000c99,#000b99,#000a99,#000999,#000899,#000899,#000799,#000699,#000599,#000499,#000399,#000299,#000299,#000199,#020099,#050099,#080099,#0b0099,#0e0099,#110099,#150099,#180099,#1b0099,#1e0099,#210099,#240099,#280099,#2b0099,#2e0099,#310099,#340099,#380099,#3b0099,#3e0099,#410099,#450099,#480099,#4b0099,#4f0099,#520099,#550099,#590099,#5c0099,#5f0099,#630099,#660099,#6a0099,#6d0099,#700099,#740099,#770099,#7b0099,#7e0099,#820099,#850099,#890099,#8c0099,#900099,#940099,#970099,#990097,#990094,#990091,#99008d,#99008a,#990087,#990085,#990082,#99007f,#99007d,#99007a,#990078,#990076,#990073,#990071,#99006f,#99006d,#99006b,#990069,#990068,#990066,#990064,#990063,#990061,#99005f,#99005e,#99005c,#99005b,#99005a,#990058,#990057,#990056,#990054,#990053)"></b><b class="r6" style="top:372px;background:linear-gradient(90deg,#001c99,#001b99,#001a99,#001999,#001899,#001899,#001799,#001699,#001599,#001599,#001499,#001399,#001299,#001199,#001199,#001099,#000f99,#000e99,#000d99,#000c99,#000c99,#000b99,#000a99,#000999,#000899,#000799,#000799,#000699,#000599,#000499,#000399,#000299,#000299,#000199,#000099,#020099,#050099,#080099,#0b0099,#0e0099,#110099,#140099,#170099,#1a0099,#1d0099,#200099,#230099,#260099,#290099,#2d0099,#300099,#330099,#360099,#390099,#3c0099,#400099,#430099,#460099,#490099,#4d0099,#500099,#530099,#560099,#5a0099,#5d0099,#600099,#640099,#670099,#6a0099,#6e0099,#710099,#750099,#780099,#7b0099,#7f0099,#820099,#860099,#890099,#8d0099,#900099,#940099,#970099,#990097,#990094,#990091,#99008e,#99008b,#990088,#990085,#990082,#990080,#99007d,#99007b,#990078,#990076,#990074,#990072,#990070,#99006e,#99006c,#99006a,#990068,#990067,#990065,#990063,#990062,#990060,#99005f,#99005d,#99005c,#99005a,#990059,#990058,#990056,#990055)"></b><b class="r6" style="top:378px;background:linear-gradient(90deg,#001a99,#001a99,#001999,#001899,#001799,#001699,#001699,#001599,#001499,#001399,#001399,#001299,#001199,#001099,#000f99,#000f99,#000e99,#000d99,#000c99,#000b99,#000b99,#000a99,#000999,#000899,#000799,#000799,#000699,#000599,#000499,#000399,#000299,#000299,#000199,#000099,#000099,#010099,#040099,#070099,#0a0099,#0d0099,#100099,#130099,#160099,#190099,#1c0099,#1f0099,#220099,#250099,#280099,#2b0099,#2e0099,#310099,#350099,#380099,#3b0099,#3e0099,#410099,#440099,#470099,#4b0099,#4e0099,#510099,#540099,#580099,#5b0099,#5e0099,#610099,#650099,#680099,#6b0099,#6e0099,#720099,#750099,#780099,#7c0099,#7f0099,#830099,#860099,#890099,#8d0099,#900099,#940099,#970099,#990097,#990094,#990091,#99008e,#99008b,#990088,#990085,#990083,#990080,#99007e,#99007b,#990079,#990077,#990074,#990072,#990070,#99006e,#99006d,#99006b,#990069,#990067,#990066,#990064,#990062,#990061,#99005f,#99005e,#99005c,#99005b,#99005a,#990058,#990057)"></b><b class="r6" style="top:384px;background:linear-gradient(90deg,#001999,#001899,#001899,#001799,#001699,#001599,#001599,#001499,#001399,#001299,#001199,#001199,#001099,#000f99,#000e99,#000e99,#000d99,#000c99,#000b99,#000a99,#000a99,#000999,#000899,#000799,#000699,#000699,#000599,#000499,#000399,#000299,#000299,#000199,#000099,#000099,#000099,#010099,#030099,#060099,#090099,#0c0099,#0f0099,#120099,#150099,#180099,#1b0099,#1e0099,#210099,#240099,#270099,#2a0099,#2d0099,#300099,#330099,#360099,#390099,#3c0099,#3f0099,#430099,#460099,#490099,#4c0099,#4f0099,#520099,#550099,#590099,#5c0099,#5f0099,#620099,#650099,#690099,#6c0099,#6f0099,#720099,#760099,#790099,#7c0099,#800099,#830099,#860099,#8a0099,#8d0099,#900099,#940099,#970099,#990097,#990094,#990091,#99008e,#99008b,#990088,#990086,#990083,#990080,#99007e,#99007c,#990079,#990077,#990075,#990073,#990071,#99006f,#99006d,#99006b,#99006a,#990068,#990066,#990065,#990063,#990061,#990060,#99005e,#99005d,#99005c,#99005a,#990059)"></b><b class="r6" style="top:390px;background:linear-gradient(90deg,#001899,#001799,#001699,#001699,#001599,#001499,#001399,#001399,#001299,#001199,#001099,#001099,#000f99,#000e99,#000d99,#000d99,#000c99,#000b99,#000a99,#000999,#000999,#000899,#000799,#000699,#000699,#000599,#000499,#000399,#000299,#000299,#000199,#000099,#000099,#000099,#000099,#000099,#030099,#060099,#090099,#0c0099,#0e0099,#110099,#140099,#170099,#1a0099,#1d0099,#200099,#230099,#260099,#290099,#2c0099,#2f0099,#320099,#350099,#380099,#3b0099,#3e0099,#410099,#440099,#470099,#4a0099,#4d0099,#500099,#530099,#570099,#5a0099,#5d0099,#600099,#630099,#660099,#690099,#6d0099,#700099,#730099,#760099,#7a0099,#7d0099,#800099,#830099,#870099,#8a0099,#8d0099,#910099,#940099,#970099,#990097,#990094,#990091,#99008e,#99008b,#990088,#990086,#990083,#990081,#99007e,#99007c,#99007a,#990078,#990075,#990073,#990071,#990070,#99006e,#99006c,#99006a,#990068,#990067,#990065,#990064,#990062,#990061,#99005f,#99005e,#99005c,#99005b)"></b><b class="r6" style="top:396px;background:linear-gradient(90deg,#001799,#001699,#001599,#001599,#001499,#001399,#001299,#001299,#001199,#001099,#000f99,#000f99,#000e99,#000d99,#000c99,#000c99,#000b99,#000a99,#000999,#000999,#000899,#000799,#000699,#000599,#000599,#000499,#000399,#000299,#000299,#000199,#000099,#000099,#000099,#000099,#000099,#000099,#020099,#050099,#080099,#0b0099,#0e0099,#110099,#130099,#160099,#190099,#1c0099,#1f0099,#220099,#250099,#280099,#2b0099,#2d0099,#300099,#330099,#360099,#390099,#3c0099,#3f0099,#420099,#450099,#480099,#4b0099,#4e0099,#510099,#550099,#580099,#5b0099,#5e0099,#610099,#640099,#670099,#6a0099,#6d0099,#710099,#740099,#770099,#7a0099,#7d0099,#800099,#840099,#870099,#8a0099,#8d0099,#910099,#940099,#970099,#990097,#990094,#990091,#99008e,#99008b,#990089,#990086,#990084,#990081,#99007f,#99007c,#99007a,#990078,#990076,#990074,#990072,#990070,#99006e,#99006c,#99006b,#990069,#990067,#990066,#990064,#990063,#990061,#990060,#99005e,#99005d)"></b><b class="r6" style="top:402px;background:linear-gradient(90deg,#001699,#001599,#001499,#001499,#001399,#001299,#001199,#001199,#001099,#000f99,#000e99,#000e99,#000d99,#000c99,#000b99,#000b99,#000a99,#000999,#000899,#000899,#000799,#000699,#000599,#000599,#000499,#000399,#000299,#000199,#000199,#000099,#000099,#000099,#000099,#000099,#000099,#000099,#020099,#050099,#070099,#0a0099,#0d0099,#100099,#130099,#150099,#180099,#1b0099,#1e0099,#210099,#240099,#260099,#290099,#2c0099,#2f0099,#320099,#350099,#380099,#3b0099,#3e0099,#410099,#440099,#470099,#4a0099,#4d0099,#500099,#530099,#560099,#590099,#5c0099,#5f0099,#620099,#650099,#680099,#6b0099,#6e0099,#710099,#740099,#770099,#7b0099,#7e0099,#810099,#840099,#870099,#8a0099,#8e0099,#910099,#940099,#970099,#990097,#990094,#990091,#99008e,#99008c,#990089,#990086,#990084,#990081,#99007f,#99007d,#99007b,#990078,#990076,#990074,#990072,#990071,#99006f,#99006d,#99006b,#99006a,#990068,#990066,#990065,#990063,#990062,#990060,#99005f)"></b><b class="r6" style="top:408px;background:linear-gradient(90deg,#001599,#001499,#001399,#001399,#001299,#001199,#001099,#001099,#000f99,#000e99,#000d99,#000d99,#000c99,#000b99,#000b99,#000a99,#000999,#000899,#000899,#000799,#000699,#000599,#000599,#000499,#000399,#000299,#000199,#000199,#000099,#000099,#000099,#000099,#000099,#000099,#000099,#000099,#020099,#040099,#070099,#0a0099,#0c0099,#0f0099,#120099,#150099,#170099,#1a0099,#1d0099,#200099,#230099,#250099,#280099,#2b0099,#2e0099,#310099,#340099,#360099,#390099,#3c0099,#3f0099,#420099,#450099,#480099,#4b0099,#4e0099,#510099,#540099,#570099,#5a0099,#5d0099,#600099,#630099,#660099,#690099,#6c0099,#6f0099,#720099,#750099,#780099,#7b0099,#7e0099,#810099,#840099,#870099,#8b0099,#8e0099,#910099,#940099,#970099,#990098,#990094,#990091,#99008f,#99008c,#990089,#990087,#990084,#990082,#99007f,#99007d,#99007b,#990079,#990077,#990075,#990073,#990071,#99006f,#99006d,#99006c,#99006a,#990068,#990067,#990065,#990064,#990062,#990061)"></b><b class="r6" style="top:414px;background:linear-gradient(90deg,#001499,#001399,#001299,#001299,#001199,#001099,#000f99,#000f99,#000e99,#000d99,#000d99,#000c99,#000b99,#000a99,#000a99,#000999,#000899,#000799,#000799,#000699,#000599,#000499,#000499,#000399,#000299,#000199,#000199,#000099,#000099,#000099,#000099,#000099,#000099,#000099,#000099,#000099,#010099,#040099,#060099,#090099,#0c0099,#0e0099,#110099,#140099,#170099,#190099,#1c0099,#1f0099,#220099,#240099,#270099,#2a0099,#2d0099,#300099,#320099,#350099,#380099,#3b0099,#3e0099,#400099,#430099,#460099,#490099,#4c0099,#4f0099,#520099,#550099,#580099,#5b0099,#5e0099,#600099,#630099,#660099,#690099,#6c0099,#6f0099,#720099,#750099,#780099,#7c0099,#7f0099,#820099,#850099,#880099,#8b0099,#8e0099,#910099,#940099,#970099,#990098,#990095,#990092,#99008f,#99008c,#990089,#990087,#990084,#990082,#990080,#99007e,#99007b,#990079,#990077,#990075,#990073,#990072,#990070,#99006e,#99006c,#99006b,#990069,#990067,#990066,#990064,#990063)"></b><b class="r6" style="top:420px;background:linear-gradient(90deg,#001399,#001299,#001199,#001199,#001099,#000f99,#000e99,#000e99,#000d99,#000c99,#000c99,#000b99,#000a99,#000999,#000999,#000899,#000799,#000799,#000699,#000599,#000499,#000499,#000399,#000299,#000199,#000199,#000099,#000099,#000099,#000099,#000099,#000099,#000099,#000099,#000099,#000099,#010099,#030099,#060099,#090099,#0b0099,#0e0099,#100099,#130099,#160099,#190099,#1b0099,#1e0099,#210099,#230099,#260099,#290099,#2c0099,#2e0099,#310099,#340099,#370099,#390099,#3c0099,#3f0099,#420099,#450099,#470099,#4a0099,#4d0099,#500099,#530099,#560099,#590099,#5c0099,#5e0099,#610099,#640099,#670099,#6a0099,#6d0099,#700099,#730099,#760099,#790099,#7c0099,#7f0099,#820099,#850099,#880099,#8b0099,#8e0099,#910099,#940099,#970099,#990098,#990095,#990092,#99008f,#99008c,#99008a,#990087,#990085,#990082,#990080,#99007e,#99007c,#99007a,#990078,#990076,#990074,#990072,#990070,#99006e,#99006d,#99006b,#99006a,#990068,#990066,#990065)"></b><b class="r6" style="top:426px;background:linear-gradient(90deg,#001299,#001199,#001099,#001099,#000f99,#000e99,#000e99,#000d99,#000c99,#000b99,#000b99,#000a99,#000999,#000999,#000899,#000799,#000799,#000699,#000599,#000499,#000499,#000399,#000299,#000199,#000199,#000099,#000099,#000099,#000099,#000099,#000099,#000099,#000099,#000099,#000099,#000099,#000099,#030099,#050099,#080099,#0b0099,#0d0099,#100099,#120099,#150099,#180099,#1a0099,#1d0099,#200099,#220099,#250099,#280099,#2a0099,#2d0099,#300099,#330099,#350099,#380099,#3b0099,#3e0099,#400099,#430099,#460099,#490099,#4b0099,#4e0099,#510099,#540099,#570099,#5a0099,#5c0099,#5f0099,#620099,#650099,#680099,#6b0099,#6e0099,#710099,#740099,#760099,#790099,#7c0099,#7f0099,#820099,#850099,#880099,#8b0099,#8e0099,#910099,#940099,#970099,#990098,#990095,#990092,#99008f,#99008c,#99008a,#990087,#990085,#990083,#990080,#99007e,#99007c,#99007a,#990078,#990076,#990074,#990072,#990071,#99006f,#99006d,#99006c,#99006a,#990069,#990067)"></b><b class="r6" style="top:432px;background:linear-gradient(90deg,#001199,#001099,#000f99,#000f99,#000e99,#000d99,#000d99,#000c99,#000b99,#000b99,#000a99,#000999,#000999,#000899,#000799,#000699,#000699,#000599,#000499,#000499,#000399,#000299,#000199,#000199,#000099,#000099,#000099,#000099,#000099,#000099,#000099,#000099,#000099,#000099,#000099,#000099,#000099,#020099,#050099,#070099,#0a0099,#0d0099,#0f0099,#120099,#140099,#170099,#1a0099,#1c0099,#1f0099,#210099,#240099,#270099,#290099,#2c0099,#2f0099,#310099,#340099,#370099,#390099,#3c0099,#3f0099,#420099,#440099,#470099,#4a0099,#4d0099,#4f0099,#520099,#550099,#580099,#5b0099,#5d0099,#600099,#630099,#660099,#690099,#6c0099,#6e0099,#710099,#740099,#770099,#7a0099,#7d0099,#800099,#830099,#860099,#890099,#8b0099,#8e0099,#910099,#940099,#970099,#990098,#990095,#990092,#99008f,#99008d,#99008a,#990088,#990085,#990083,#990081,#99007f,#99007d,#99007a,#990079,#990077,#990075,#990073,#990071,#99006f,#99006e,#99006c,#99006b,#990069)"></b><b class="r6" style="top:438px;background:linear-gradient(90deg,#001099,#000f99,#000e99,#000e99,#000d99,#000c99,#000c99,#000b99,#000a99,#000a99,#000999,#000899,#000899,#000799,#000699,#000699,#000599,#000499,#000499,#000399,#000299,#000199,#000199,#000099,#000099,#000099,#000099,#000099,#000099,#000099,#000099,#000099,#000099,#000099,#000099,#000099,#000099,#020099,#040099,#070099,#090099,#0c0099,#0e0099,#110099,#140099,#160099,#190099,#1b0099,#1e0099,#200099,#230099,#260099,#280099,#2b0099,#2e0099,#300099,#330099,#350099,#380099,#3b0099,#3d0099,#400099,#430099,#460099,#480099,#4b0099,#4e0099,#500099,#530099,#560099,#590099,#5b0099,#5e0099,#610099,#640099,#670099,#690099,#6c0099,#6f0099,#720099,#750099,#780099,#7a0099,#7d0099,#800099,#830099,#860099,#890099,#8c0099,#8f0099,#920099,#940099,#970099,#990098,#990095,#990092,#99008f,#99008d,#99008a,#990088,#990086,#990083,#990081,#99007f,#99007d,#99007b,#990079,#990077,#990075,#990073,#990072,#990070,#99006e,#99006d,#99006b)"></b><b class="r6" style="top:444px;background:linear-gradient(90deg,#000f99,#000e99,#000e99,#000d99,#000c99,#000c99,#000b99,#000a99,#000a99,#000999,#000899,#000899,#000799,#000699,#000699,#000599,#000499,#000499,#000399,#000299,#000199,#000199,#000099,#000099,#000099,#000099,#000099,#000099,#000099,#000099,#000099,#000099,#000099,#000099,#000099,#000099,#000099,#010099,#040099,#060099,#090099,#0b0099,#0e0099,#100099,#130099,#150099,#180099,#1a0099,#1d0099,#200099,#220099,#250099,#270099,#2a0099,#2c0099,#2f0099,#320099,#340099,#370099,#390099,#3c0099,#3f0099,#410099,#440099,#470099,#490099,#4c0099,#4f0099,#510099,#540099,#570099,#5a0099,#5c0099,#5f0099,#620099,#650099,#670099,#6a0099,#6d0099,#700099,#720099,#750099,#780099,#7b0099,#7e0099,#800099,#830099,#860099,#890099,#8c0099,#8f0099,#920099,#950099,#970099,#990098,#990095,#990092,#990090,#99008d,#99008a,#990088,#990086,#990084,#990081,#99007f,#99007d,#99007b,#990079,#990077,#990076,#990074,#990072,#990070,#99006f,#99006d)"></b><b class="r6" style="top:450px;background:linear-gradient(90deg,#000e99,#000d99,#000d99,#000c99,#000b99,#000b99,#000a99,#000999,#000999,#000899,#000799,#000799,#000699,#000599,#000599,#000499,#000399,#000399,#000299,#000199,#000199,#000099,#000099,#000099,#000099,#000099,#000099,#000099,#000099,#000099,#000099,#000099,#000099,#000099,#000099,#000099,#000099,#010099,#030099,#060099,#080099,#0b0099,#0d0099,#100099,#120099,#150099,#170099,#1a0099,#1c0099,#1f0099,#210099,#240099,#260099,#290099,#2b0099,#2e0099,#300099,#330099,#360099,#380099,#3b0099,#3d0099,#400099,#430099,#450099,#480099,#4a0099,#4d0099,#500099,#520099,#550099,#580099,#5a0099,#5d0099,#600099,#630099,#650099,#680099,#6b0099,#6d0099,#700099,#730099,#760099,#780099,#7b0099,#7e0099,#810099,#840099,#860099,#890099,#8c0099,#8f0099,#920099,#950099,#970099,#990098,#990095,#990092,#990090,#99008d,#99008b,#990088,#990086,#990084,#990082,#990080,#99007e,#99007c,#99007a,#990078,#990076,#990074,#990073,#990071,#99006f)"></b><b class="r6" style="top:456px;background:linear-gradient(90deg,#000d99,#000d99,#000c99,#000b99,#000b99,#000a99,#000999,#000999,#000899,#000799,#000799,#000699,#000599,#000599,#000499,#000399,#000399,#000299,#000199,#000199,#000099,#000099,#000099,#000099,#000099,#000099,#000099,#000099,#000099,#000099,#000099,#000099,#000099,#000099,#000099,#000099,#000099,#010099,#030099,#050099,#080099,#0a0099,#0d0099,#0f0099,#120099,#140099,#160099,#190099,#1b0099,#1e0099,#200099,#230099,#250099,#280099,#2a0099,#2d0099,#2f0099,#320099,#340099,#370099,#3a0099,#3c0099,#3f0099,#410099,#440099,#460099,#490099,#4c0099,#4e0099,#510099,#530099,#560099,#590099,#5b0099,#5e0099,#610099,#630099,#660099,#690099,#6b0099,#6e0099,#710099,#730099,#760099,#790099,#7c0099,#7e0099,#810099,#840099,#870099,#890099,#8c0099,#8f0099,#920099,#950099,#970099,#990098,#990095,#990092,#990090,#99008d,#99008b,#990089,#990086,#990084,#990082,#990080,#99007e,#99007c,#99007a,#990078,#990076,#990075,#990073,#990071)"></b><b class="r6" style="top:462px;background:linear-gradient(90deg,#000c99,#000c99,#000b99,#000b99,#000a99,#000999,#000999,#000899,#000799,#000799,#000699,#000599,#000599,#000499,#000399,#000399,#000299,#000199,#000199,#000099,#000099,#000099,#000099,#000099,#000099,#000099,#000099,#000099,#000099,#000099,#000099,#000099,#000099,#000099,#000099,#000099,#000099,#000099,#030099,#050099,#070099,#0a0099,#0c0099,#0f0099,#110099,#130099,#160099,#180099,#1b0099,#1d0099,#1f0099,#220099,#240099,#270099,#290099,#2c0099,#2e0099,#310099,#330099,#360099,#380099,#3b0099,#3d0099,#400099,#420099,#450099,#470099,#4a0099,#4d0099,#4f0099,#520099,#540099,#570099,#5a0099,#5c0099,#5f0099,#610099,#640099,#670099,#690099,#6c0099,#6f0099,#710099,#740099,#770099,#790099,#7c0099,#7f0099,#810099,#840099,#870099,#8a0099,#8c0099,#8f0099,#920099,#950099,#970099,#990098,#990095,#990092,#990090,#99008d,#99008b,#990089,#990087,#990084,#990082,#990080,#99007e,#99007c,#99007a,#990079,#990077,#990075,#990073)"></b><b class="r6" style="top:468px;background:linear-gradient(90deg,#000c99,#000b99,#000a99,#000a99,#000999,#000899,#000899,#000799,#000799,#000699,#000599,#000599,#000499,#000399,#000399,#000299,#000199,#000199,#000099,#000099,#000099,#000099,#000099,#000099,#000099,#000099,#000099,#000099,#000099,#000099,#000099,#000099,#000099,#000099,#000099,#000099,#000099,#000099,#020099,#050099,#070099,#090099,#0c0099,#0e0099,#100099,#130099,#150099,#170099,#1a0099,#1c0099,#1f0099,#210099,#230099,#260099,#280099,#2b0099,#2d0099,#300099,#320099,#350099,#370099,#3a0099,#3c0099,#3f0099,#410099,#440099,#460099,#490099,#4b0099,#4e0099,#500099,#530099,#550099,#580099,#5a0099,#5d0099,#600099,#620099,#650099,#670099,#6a0099,#6d0099,#6f0099,#720099,#740099,#770099,#7a0099,#7c0099,#7f0099,#820099,#840099,#870099,#8a0099,#8d0099,#8f0099,#920099,#950099,#980099,#990098,#990095,#990093,#990090,#99008e,#99008b,#990089,#990087,#990085,#990083,#990080,#99007f,#99007d,#99007b,#990079,#990077,#990075)"></b><b class="r6" style="top:474px;background:linear-gradient(90deg,#000b99,#000a99,#000a99,#000999,#000899,#000899,#000799,#000699,#000699,#000599,#000599,#000499,#000399,#000399,#000299,#000199,#000199,#000099,#000099,#000099,#000099,#000099,#000099,#000099,#000099,#000099,#000099,#000099,#000099,#000099,#000099,#000099,#000099,#000099,#000099,#000099,#000099,#000099,#020099,#040099,#060099,#090099,#0b0099,#0d0099,#100099,#120099,#140099,#170099,#190099,#1b0099,#1e0099,#200099,#230099,#250099,#270099,#2a0099,#2c0099,#2f0099,#310099,#330099,#360099,#380099,#3b0099,#3d0099,#400099,#420099,#450099,#470099,#4a0099,#4c0099,#4f0099,#510099,#540099,#560099,#590099,#5b0099,#5e0099,#600099,#630099,#650099,#680099,#6b0099,#6d0099,#700099,#720099,#750099,#780099,#7a0099,#7d0099,#7f0099,#820099,#850099,#870099,#8a0099,#8d0099,#8f0099,#920099,#950099,#980099,#990098,#990095,#990093,#990090,#99008e,#99008b,#990089,#990087,#990085,#990083,#990081,#99007f,#99007d,#99007b,#990079,#990078)"></b><b class="r6" style="top:480px;background:linear-gradient(90deg,#000a99,#000999,#000999,#000899,#000899,#000799,#000699,#000699,#000599,#000599,#000499,#000399,#000399,#000299,#000199,#000199,#000099,#000099,#000099,#000099,#000099,#000099,#000099,#000099,#000099,#000099,#000099,#000099,#000099,#000099,#000099,#000099,#000099,#000099,#000099,#000099,#000099,#000099,#010099,#040099,#060099,#080099,#0b0099,#0d0099,#0f0099,#110099,#140099,#160099,#180099,#1b0099,#1d0099,#1f0099,#220099,#240099,#260099,#290099,#2b0099,#2e0099,#300099,#320099,#350099,#370099,#3a0099,#3c0099,#3e0099,#410099,#430099,#460099,#480099,#4b0099,#4d0099,#500099,#520099,#550099,#570099,#5a0099,#5c0099,#5f0099,#610099,#640099,#660099,#690099,#6b0099,#6e0099,#700099,#730099,#750099,#780099,#7b0099,#7d0099,#800099,#820099,#850099,#880099,#8a0099,#8d0099,#900099,#920099,#950099,#980099,#990098,#990095,#990093,#990090,#99008e,#99008c,#990089,#990087,#990085,#990083,#990081,#99007f,#99007d,#99007b,#99007a)"></b><b class="r6" style="top:486px;background:linear-gradient(90deg,#000999,#000999,#000899,#000899,#000799,#000699,#000699,#000599,#000499,#000499,#000399,#000399,#000299,#000199,#000199,#000099,#000099,#000099,#000099,#000099,#000099,#000099,#000099,#000099,#000099,#000099,#000099,#000099,#000099,#000099,#000099,#000099,#000099,#000099,#000099,#000099,#000099,#000099,#010099,#030099,#060099,#080099,#0a0099,#0c0099,#0f0099,#110099,#130099,#150099,#180099,#1a0099,#1c0099,#1f0099,#210099,#230099,#260099,#280099,#2a0099,#2d0099,#2f0099,#310099,#340099,#360099,#380099,#3b0099,#3d0099,#400099,#420099,#440099,#470099,#490099,#4c0099,#4e0099,#500099,#530099,#550099,#580099,#5a0099,#5d0099,#5f0099,#620099,#640099,#670099,#690099,#6c0099,#6e0099,#710099,#730099,#760099,#780099,#7b0099,#7e0099,#800099,#830099,#850099,#880099,#8a0099,#8d0099,#900099,#920099,#950099,#980099,#990098,#990095,#990093,#990090,#99008e,#99008c,#99008a,#990087,#990085,#990083,#990081,#99007f,#99007e,#99007c)"></b><b class="r6" style="top:492px;background:linear-gradient(90deg,#000999,#000899,#000799,#000799,#000699,#000699,#000599,#000499,#000499,#000399,#000399,#000299,#000199,#000199,#000099,#000099,#000099,#000099,#000099,#000099,#000099,#000099,#000099,#000099,#000099,#000099,#000099,#000099,#000099,#000099,#000099,#000099,#000099,#000099,#000099,#000099,#000099,#000099,#010099,#030099,#050099,#070099,#0a0099,#0c0099,#0e0099,#100099,#120099,#150099,#170099,#190099,#1c0099,#1e0099,#200099,#220099,#250099,#270099,#290099,#2c0099,#2e0099,#300099,#330099,#350099,#370099,#3a0099,#3c0099,#3e0099,#410099,#430099,#450099,#480099,#4a0099,#4d0099,#4f0099,#510099,#540099,#560099,#590099,#5b0099,#5e0099,#600099,#620099,#650099,#670099,#6a0099,#6c0099,#6f0099,#710099,#740099,#760099,#790099,#7b0099,#7e0099,#800099,#830099,#860099,#880099,#8b0099,#8d0099,#900099,#920099,#950099,#980099,#990098,#990095,#990093,#990090,#99008e,#99008c,#99008a,#990088,#990086,#990084,#990082,#990080,#99007e)"></b><b class="r6" style="top:498px;background:linear-gradient(90deg,#000899,#000899,#000799,#000699,#000699,#000599,#000599,#000499,#000399,#000399,#000299,#000299,#000199,#000099,#000099,#000099,#000099,#000099,#000099,#000099,#000099,#000099,#000099,#000099,#000099,#000099,#000099,#000099,#000099,#000099,#000099,#000099,#000099,#000099,#000099,#000099,#000099,#000099,#000099,#020099,#050099,#070099,#090099,#0b0099,#0d0099,#100099,#120099,#140099,#160099,#190099,#1b0099,#1d0099,#1f0099,#220099,#240099,#260099,#280099,#2b0099,#2d0099,#2f0099,#320099,#340099,#360099,#380099,#3b0099,#3d0099,#3f0099,#420099,#440099,#470099,#490099,#4b0099,#4e0099,#500099,#520099,#550099,#570099,#5a0099,#5c0099,#5e0099,#610099,#630099,#660099,#680099,#6b0099,#6d0099,#700099,#720099,#750099,#770099,#790099,#7c0099,#7e0099,#810099,#840099,#860099,#890099,#8b0099,#8e0099,#900099,#930099,#950099,#980099,#990098,#990095,#990093,#990090,#99008e,#99008c,#99008a,#990088,#990086,#990084,#990082,#990080)"></b><b class="r6" style="top:504px;background:linear-gradient(90deg,#000899,#000899,#000799,#000699,#000699,#000599,#000599,#000499,#000399,#000399,#000299,#000299,#000199,#000099,#000099,#000099,#000099,#000099,#000099,#000099,#000099,#000099,#000099,#000099,#000099,#000099,#000099,#000099,#000099,#000099,#000099,#000099,#000099,#000099,#000099,#000099,#000099,#000099,#000099,#020099,#050099,#070099,#090099,#0b0099,#0d0099,#100099,#120099,#140099,#160099,#190099,#1b0099,#1d0099,#1f0099,#220099,#240099,#260099,#280099,#2b0099,#2d0099,#2f0099,#320099,#340099,#360099,#380099,#3b0099,#3d0099,#3f0099,#420099,#440099,#470099,#490099,#4b0099,#4e0099,#500099,#520099,#550099,#570099,#5a0099,#5c0099,#5e0099,#610099,#630099,#660099,#680099,#6b0099,#6d0099,#700099,#720099,#750099,#770099,#790099,#7c0099,#7e0099,#810099,#840099,#860099,#890099,#8b0099,#8e0099,#900099,#930099,#950099,#980099,#990098,#990095,#990093,#990090,#99008e,#99008c,#99008a,#990088,#990086,#990084,#990082,#990080)"></b></div></div><div class="a" style="left:1130px;top:130px;width:392px;height:372px;clip-path:polygon(369.1px 52.4px,22.6px 20.0px,76.2px 351.7px)"><div class="a fld" style="left:0;top:0;width:392px;height:372px;filter:blur(1.2px)"><b class="r4" style="top:0px;background:linear-gradient(90deg,#00ff00,#00ff00,#00ff00,#00ff00,#00ff00,#00ff00,#09ff00,#12ff00,#1cff00,#25ff00,#2fff00,#39ff00,#43ff00,#4eff00,#58ff00,#63ff00,#6eff00,#7aff00,#85ff00,#91ff00,#9dff00,#aaff00,#b7ff00,#c4ff00,#d1ff00,#dfff00,#edff00,#fcff00,#fff400,#ffe700,#ffdb00,#ffcf00,#ffc500,#ffbb00,#ffb200,#ffaa00,#ffa200,#ff9b00,#ff9400,#ff8d00,#ff8700,#ff8100,#ff7c00,#ff7700,#ff7200,#ff6d00,#ff6900,#ff6400,#ff6000,#ff5d00,#ff5900,#ff5500,#ff5200,#ff4f00,#ff4c00,#ff4900,#ff4600,#ff4300,#ff4000,#ff3e00,#ff3b00,#ff3900,#ff3700,#ff3400,#ff3200,#ff3000,#ff2e00,#ff2c00,#ff2a00,#ff2900,#ff2700,#ff2500,#ff2400,#ff2200,#ff2000,#ff1f00,#ff1d00,#ff1c00,#ff1b00,#ff1900,#ff1800,#ff1700,#ff1500,#ff1400,#ff1300,#ff1200,#ff1100,#ff1000,#ff0f00,#ff0d00,#ff0c00,#ff0b00,#ff0a00,#ff0a00,#ff0900,#ff0800,#ff0700,#ff0600,#ff0500)"></b><b class="r4" style="top:4px;background:linear-gradient(90deg,#00ff00,#00ff00,#00ff00,#00ff00,#00ff00,#00ff00,#08ff00,#11ff00,#1bff00,#24ff00,#2eff00,#38ff00,#42ff00,#4dff00,#58ff00,#63ff00,#6eff00,#79ff00,#85ff00,#91ff00,#9eff00,#aaff00,#b7ff00,#c4ff00,#d2ff00,#e0ff00,#eeff00,#fdff00,#fff300,#ffe500,#ffd900,#ffce00,#ffc300,#ffba00,#ffb100,#ffa800,#ffa100,#ff9900,#ff9200,#ff8c00,#ff8600,#ff8000,#ff7b00,#ff7500,#ff7000,#ff6c00,#ff6700,#ff6300,#ff5f00,#ff5b00,#ff5800,#ff5400,#ff5100,#ff4d00,#ff4a00,#ff4700,#ff4500,#ff4200,#ff3f00,#ff3d00,#ff3a00,#ff3800,#ff3600,#ff3300,#ff3100,#ff2f00,#ff2d00,#ff2b00,#ff2900,#ff2800,#ff2600,#ff2400,#ff2300,#ff2100,#ff1f00,#ff1e00,#ff1c00,#ff1b00,#ff1a00,#ff1800,#ff1700,#ff1600,#ff1400,#ff1300,#ff1200,#ff1100,#ff1000,#ff0f00,#ff0e00,#ff0d00,#ff0c00,#ff0b00,#ff0a00,#ff0900,#ff0800,#ff0700,#ff0600,#ff0500,#ff0400)"></b><b class="r4" style="top:8px;background:linear-gradient(90deg,#00ff00,#00ff00,#00ff00,#00ff00,#00ff00,#00ff00,#06ff00,#10ff00,#19ff00,#23ff00,#2dff00,#37ff00,#42ff00,#4cff00,#57ff00,#62ff00,#6eff00,#79ff00,#85ff00,#91ff00,#9eff00,#abff00,#b8ff00,#c5ff00,#d3ff00,#e1ff00,#f0ff00,#feff00,#fff100,#ffe400,#ffd800,#ffcc00,#ffc200,#ffb800,#ffaf00,#ffa700,#ff9f00,#ff9800,#ff9100,#ff8a00,#ff8400,#ff7f00,#ff7900,#ff7400,#ff6f00,#ff6a00,#ff6600,#ff6200,#ff5e00,#ff5a00,#ff5600,#ff5300,#ff4f00,#ff4c00,#ff4900,#ff4600,#ff4300,#ff4100,#ff3e00,#ff3b00,#ff3900,#ff3700,#ff3400,#ff3200,#ff3000,#ff2e00,#ff2c00,#ff2a00,#ff2800,#ff2700,#ff2500,#ff2300,#ff2200,#ff2000,#ff1e00,#ff1d00,#ff1b00,#ff1a00,#ff1900,#ff1700,#ff1600,#ff1500,#ff1400,#ff1200,#ff1100,#ff1000,#ff0f00,#ff0e00,#ff0d00,#ff0c00,#ff0b00,#ff0a00,#ff0900,#ff0800,#ff0700,#ff0600,#ff0500,#ff0400,#ff0400)"></b><b class="r4" style="top:12px;background:linear-gradient(90deg,#00ff00,#00ff00,#00ff00,#00ff00,#00ff00,#00ff00,#05ff00,#0eff00,#18ff00,#22ff00,#2cff00,#36ff00,#41ff00,#4bff00,#56ff00,#62ff00,#6dff00,#79ff00,#85ff00,#91ff00,#9eff00,#abff00,#b8ff00,#c6ff00,#d4ff00,#e2ff00,#f1ff00,#fffe00,#fff000,#ffe200,#ffd600,#ffcb00,#ffc000,#ffb700,#ffae00,#ffa500,#ff9e00,#ff9600,#ff8f00,#ff8900,#ff8300,#ff7d00,#ff7800,#ff7300,#ff6e00,#ff6900,#ff6500,#ff6000,#ff5c00,#ff5900,#ff5500,#ff5100,#ff4e00,#ff4b00,#ff4800,#ff4500,#ff4200,#ff3f00,#ff3d00,#ff3a00,#ff3800,#ff3600,#ff3300,#ff3100,#ff2f00,#ff2d00,#ff2b00,#ff2900,#ff2700,#ff2600,#ff2400,#ff2200,#ff2100,#ff1f00,#ff1d00,#ff1c00,#ff1b00,#ff1900,#ff1800,#ff1600,#ff1500,#ff1400,#ff1300,#ff1100,#ff1000,#ff0f00,#ff0e00,#ff0d00,#ff0c00,#ff0b00,#ff0a00,#ff0900,#ff0800,#ff0700,#ff0600,#ff0500,#ff0400,#ff0400,#ff0300)"></b><b class="r4" style="top:16px;background:linear-gradient(90deg,#00ff03,#00ff02,#00ff01,#00ff00,#00ff00,#00ff00,#04ff00,#0dff00,#17ff00,#21ff00,#2bff00,#35ff00,#40ff00,#4bff00,#56ff00,#61ff00,#6dff00,#79ff00,#85ff00,#91ff00,#9eff00,#abff00,#b9ff00,#c6ff00,#d5ff00,#e3ff00,#f2ff00,#fffd00,#ffee00,#ffe100,#ffd500,#ffc900,#ffbf00,#ffb500,#ffac00,#ffa400,#ff9c00,#ff9500,#ff8e00,#ff8700,#ff8100,#ff7c00,#ff7600,#ff7100,#ff6c00,#ff6800,#ff6300,#ff5f00,#ff5b00,#ff5700,#ff5400,#ff5000,#ff4d00,#ff4a00,#ff4700,#ff4400,#ff4100,#ff3e00,#ff3c00,#ff3900,#ff3700,#ff3400,#ff3200,#ff3000,#ff2e00,#ff2c00,#ff2a00,#ff2800,#ff2600,#ff2500,#ff2300,#ff2100,#ff2000,#ff1e00,#ff1c00,#ff1b00,#ff1a00,#ff1800,#ff1700,#ff1600,#ff1400,#ff1300,#ff1200,#ff1100,#ff0f00,#ff0e00,#ff0d00,#ff0c00,#ff0b00,#ff0a00,#ff0900,#ff0800,#ff0700,#ff0600,#ff0500,#ff0500,#ff0400,#ff0300,#ff0200)"></b><b class="r4" style="top:20px;background:linear-gradient(90deg,#00ff0b,#00ff0a,#00ff0a,#00ff09,#00ff08,#00ff07,#02ff07,#0cff06,#15ff05,#1fff04,#2aff04,#34ff03,#3fff02,#4aff01,#55ff00,#60ff00,#6cff00,#78ff00,#85ff00,#91ff00,#9eff00,#abff00,#b9ff00,#c7ff00,#d5ff00,#e4ff00,#f3ff00,#fffb00,#ffed00,#ffdf00,#ffd300,#ffc800,#ffbd00,#ffb400,#ffab00,#ffa200,#ff9b00,#ff9300,#ff8c00,#ff8600,#ff8000,#ff7a00,#ff7500,#ff7000,#ff6b00,#ff6600,#ff6200,#ff5e00,#ff5a00,#ff5600,#ff5200,#ff4f00,#ff4c00,#ff4800,#ff4500,#ff4200,#ff4000,#ff3d00,#ff3a00,#ff3800,#ff3600,#ff3300,#ff3100,#ff2f00,#ff2d00,#ff2b00,#ff2900,#ff2700,#ff2500,#ff2300,#ff2200,#ff2000,#ff1f00,#ff1d00,#ff1b00,#ff1a00,#ff1900,#ff1700,#ff1600,#ff1500,#ff1300,#ff1200,#ff1100,#ff1000,#ff0f00,#ff0d00,#ff0c00,#ff0b00,#ff0a00,#ff0900,#ff0800,#ff0700,#ff0600,#ff0500,#ff0500,#ff0400,#ff0300,#ff0200,#ff0100)"></b><b class="r4" style="top:24px;background:linear-gradient(90deg,#00ff13,#00ff13,#00ff12,#00ff12,#00ff11,#00ff10,#01ff10,#0aff0f,#14ff0e,#1eff0e,#29ff0d,#33ff0c,#3eff0b,#49ff0b,#54ff0a,#60ff09,#6cff08,#78ff07,#84ff06,#91ff06,#9eff05,#acff04,#baff03,#c8ff02,#d6ff01,#e5ff00,#f5ff00,#fffa00,#ffeb00,#ffde00,#ffd100,#ffc600,#ffbc00,#ffb200,#ffa900,#ffa100,#ff9900,#ff9200,#ff8b00,#ff8400,#ff7e00,#ff7900,#ff7300,#ff6e00,#ff6900,#ff6500,#ff6000,#ff5c00,#ff5800,#ff5500,#ff5100,#ff4e00,#ff4a00,#ff4700,#ff4400,#ff4100,#ff3e00,#ff3c00,#ff3900,#ff3700,#ff3400,#ff3200,#ff3000,#ff2e00,#ff2c00,#ff2a00,#ff2800,#ff2600,#ff2400,#ff2200,#ff2100,#ff1f00,#ff1e00,#ff1c00,#ff1a00,#ff1900,#ff1800,#ff1600,#ff1500,#ff1400,#ff1200,#ff1100,#ff1000,#ff0f00,#ff0e00,#ff0d00,#ff0c00,#ff0a00,#ff0900,#ff0800,#ff0700,#ff0700,#ff0600,#ff0500,#ff0400,#ff0300,#ff0200,#ff0100,#ff0000)"></b><b class="r4" style="top:28px;background:linear-gradient(90deg,#00ff1c,#00ff1b,#00ff1b,#00ff1a,#00ff1a,#00ff19,#00ff19,#09ff18,#13ff18,#1dff17,#27ff16,#32ff16,#3dff15,#48ff14,#54ff14,#5fff13,#6bff12,#78ff12,#84ff11,#91ff10,#9eff0f,#acff0e,#baff0e,#c8ff0d,#d7ff0c,#e6ff0b,#f6ff0a,#fff809,#ffea07,#ffdc06,#ffd005,#ffc504,#ffba03,#ffb002,#ffa801,#ff9f00,#ff9700,#ff9000,#ff8900,#ff8300,#ff7d00,#ff7700,#ff7200,#ff6d00,#ff6800,#ff6300,#ff5f00,#ff5b00,#ff5700,#ff5300,#ff5000,#ff4c00,#ff4900,#ff4600,#ff4300,#ff4000,#ff3d00,#ff3b00,#ff3800,#ff3600,#ff3300,#ff3100,#ff2f00,#ff2d00,#ff2b00,#ff2900,#ff2700,#ff2500,#ff2300,#ff2100,#ff2000,#ff1e00,#ff1d00,#ff1b00,#ff1a00,#ff1800,#ff1700,#ff1500,#ff1400,#ff1300,#ff1100,#ff1000,#ff0f00,#ff0e00,#ff0d00,#ff0c00,#ff0b00,#ff0a00,#ff0900,#ff0800,#ff0700,#ff0600,#ff0500,#ff0400,#ff0300,#ff0200,#ff0100,#ff0000,#ff0000)"></b><b class="r4" style="top:32px;background:linear-gradient(90deg,#00ff25,#00ff24,#00ff24,#00ff23,#00ff23,#00ff22,#00ff22,#07ff22,#11ff21,#1cff21,#26ff20,#31ff20,#3cff1f,#47ff1e,#53ff1e,#5fff1d,#6bff1d,#77ff1c,#84ff1b,#91ff1b,#9fff1a,#acff1a,#bbff19,#c9ff18,#d8ff17,#e7ff17,#f7ff16,#fff714,#ffe812,#ffdb11,#ffce0f,#ffc30d,#ffb90c,#ffaf0b,#ffa60a,#ff9e09,#ff9607,#ff8f07,#ff8806,#ff8105,#ff7b04,#ff7603,#ff7003,#ff6b02,#ff6601,#ff6201,#ff5e00,#ff5900,#ff5600,#ff5200,#ff4e00,#ff4b00,#ff4800,#ff4500,#ff4200,#ff3f00,#ff3c00,#ff3900,#ff3700,#ff3400,#ff3200,#ff3000,#ff2e00,#ff2c00,#ff2900,#ff2800,#ff2600,#ff2400,#ff2200,#ff2000,#ff1f00,#ff1d00,#ff1b00,#ff1a00,#ff1900,#ff1700,#ff1600,#ff1400,#ff1300,#ff1200,#ff1100,#ff0f00,#ff0e00,#ff0d00,#ff0c00,#ff0b00,#ff0a00,#ff0900,#ff0800,#ff0700,#ff0600,#ff0500,#ff0400,#ff0300,#ff0200,#ff0100,#ff0000,#ff0000,#ff0000)"></b><b class="r4" style="top:36px;background:linear-gradient(90deg,#00ff2e,#00ff2d,#00ff2d,#00ff2d,#00ff2c,#00ff2c,#00ff2c,#06ff2b,#10ff2b,#1aff2a,#25ff2a,#30ff2a,#3bff29,#46ff29,#52ff28,#5eff28,#6aff27,#77ff27,#84ff26,#91ff26,#9fff25,#adff25,#bbff24,#caff24,#d9ff23,#e9ff23,#f9ff22,#fff520,#ffe61e,#ffd91b,#ffcd19,#ffc117,#ffb715,#ffad14,#ffa412,#ff9c11,#ff9410,#ff8d0e,#ff860d,#ff800c,#ff7a0b,#ff740a,#ff6f09,#ff6a08,#ff6507,#ff6007,#ff5c06,#ff5805,#ff5405,#ff5004,#ff4d03,#ff4a03,#ff4602,#ff4302,#ff4001,#ff3d01,#ff3b00,#ff3800,#ff3600,#ff3300,#ff3100,#ff2f00,#ff2c00,#ff2a00,#ff2800,#ff2600,#ff2500,#ff2300,#ff2100,#ff1f00,#ff1e00,#ff1c00,#ff1a00,#ff1900,#ff1700,#ff1600,#ff1500,#ff1300,#ff1200,#ff1100,#ff1000,#ff0e00,#ff0d00,#ff0c00,#ff0b00,#ff0a00,#ff0900,#ff0800,#ff0700,#ff0600,#ff0500,#ff0400,#ff0300,#ff0200,#ff0100,#ff0000,#ff0000,#ff0000,#ff0000)"></b><b class="r4" style="top:40px;background:linear-gradient(90deg,#00ff37,#00ff37,#00ff36,#00ff36,#00ff36,#00ff36,#00ff35,#04ff35,#0eff35,#19ff34,#24ff34,#2fff34,#3aff34,#45ff33,#51ff33,#5dff33,#6aff32,#77ff32,#84ff32,#91ff31,#9fff31,#adff30,#bcff30,#cbff30,#daff2f,#eaff2f,#faff2e,#fff42c,#ffe529,#ffd726,#ffcb23,#ffc021,#ffb51f,#ffac1d,#ffa31b,#ff9a19,#ff9318,#ff8b16,#ff8515,#ff7e13,#ff7812,#ff7311,#ff6d10,#ff680f,#ff630e,#ff5f0d,#ff5b0c,#ff570b,#ff530a,#ff4f0a,#ff4c09,#ff4808,#ff4507,#ff4207,#ff3f06,#ff3c06,#ff3905,#ff3705,#ff3404,#ff3204,#ff3003,#ff2d03,#ff2b02,#ff2902,#ff2701,#ff2501,#ff2300,#ff2200,#ff2000,#ff1e00,#ff1d00,#ff1b00,#ff1900,#ff1800,#ff1600,#ff1500,#ff1400,#ff1200,#ff1100,#ff1000,#ff0f00,#ff0d00,#ff0c00,#ff0b00,#ff0a00,#ff0900,#ff0800,#ff0700,#ff0600,#ff0500,#ff0400,#ff0300,#ff0200,#ff0100,#ff0100,#ff0000,#ff0000,#ff0000,#ff0000)"></b><b class="r4" style="top:44px;background:linear-gradient(90deg,#00ff40,#00ff40,#00ff40,#00ff40,#00ff40,#00ff3f,#00ff3f,#03ff3f,#0dff3f,#18ff3f,#22ff3f,#2eff3e,#39ff3e,#45ff3e,#51ff3e,#5dff3e,#69ff3d,#76ff3d,#84ff3d,#91ff3d,#9fff3d,#adff3c,#bcff3c,#cbff3c,#dbff3c,#ebff3b,#fcff3b,#fff238,#ffe334,#ffd631,#ffc92e,#ffbe2b,#ffb428,#ffaa26,#ffa124,#ff9922,#ff9120,#ff8a1e,#ff831c,#ff7d1b,#ff7719,#ff7118,#ff6c17,#ff6715,#ff6214,#ff5e13,#ff5912,#ff5511,#ff5110,#ff4e0f,#ff4a0e,#ff470e,#ff440d,#ff410c,#ff3e0b,#ff3b0b,#ff380a,#ff3609,#ff3309,#ff3108,#ff2e07,#ff2c07,#ff2a06,#ff2806,#ff2605,#ff2405,#ff2204,#ff2104,#ff1f04,#ff1d03,#ff1b03,#ff1a02,#ff1802,#ff1702,#ff1501,#ff1401,#ff1301,#ff1100,#ff1000,#ff0f00,#ff0e00,#ff0d00,#ff0b00,#ff0a00,#ff0900,#ff0800,#ff0700,#ff0600,#ff0500,#ff0400,#ff0300,#ff0200,#ff0100,#ff0100,#ff0000,#ff0000,#ff0000,#ff0000,#ff0000)"></b><b class="r4" style="top:48px;background:linear-gradient(90deg,#00ff4a,#00ff4a,#00ff4a,#00ff4a,#00ff49,#00ff49,#00ff49,#01ff49,#0bff49,#16ff49,#21ff49,#2cff49,#38ff49,#44ff49,#50ff49,#5cff49,#69ff49,#76ff49,#83ff49,#91ff49,#9fff49,#aeff49,#bdff49,#ccff49,#dcff48,#ecff48,#fdff48,#fff044,#ffe140,#ffd43c,#ffc838,#ffbc35,#ffb232,#ffa82f,#ff9f2d,#ff972a,#ff8f28,#ff8826,#ff8124,#ff7b22,#ff7521,#ff6f1f,#ff6a1d,#ff651c,#ff601b,#ff5c19,#ff5818,#ff5417,#ff5016,#ff4c15,#ff4914,#ff4513,#ff4212,#ff3f11,#ff3c10,#ff3a10,#ff370f,#ff340e,#ff320d,#ff300d,#ff2d0c,#ff2b0b,#ff290b,#ff270a,#ff250a,#ff2309,#ff2108,#ff1f08,#ff1e07,#ff1c07,#ff1a07,#ff1906,#ff1706,#ff1605,#ff1405,#ff1304,#ff1204,#ff1004,#ff0f03,#ff0e03,#ff0d03,#ff0c02,#ff0a02,#ff0902,#ff0801,#ff0701,#ff0601,#ff0500,#ff0400,#ff0300,#ff0200,#ff0100,#ff0100,#ff0000,#ff0000,#ff0000,#ff0000,#ff0000,#ff0000)"></b><b class="r4" style="top:52px;background:linear-gradient(90deg,#00ff53,#00ff53,#00ff53,#00ff54,#00ff54,#00ff54,#00ff54,#00ff54,#0aff54,#15ff54,#20ff54,#2bff54,#37ff54,#43ff54,#4fff54,#5bff55,#68ff55,#76ff55,#83ff55,#91ff55,#9fff55,#aeff55,#bdff55,#cdff55,#ddff56,#eeff56,#ffff56,#ffef51,#ffe04c,#ffd247,#ffc643,#ffbb3f,#ffb03c,#ffa639,#ff9e36,#ff9533,#ff8e31,#ff862e,#ff802c,#ff792a,#ff7328,#ff6e26,#ff6924,#ff6423,#ff5f21,#ff5b20,#ff561e,#ff521d,#ff4e1c,#ff4b1b,#ff4719,#ff4418,#ff4117,#ff3e16,#ff3b15,#ff3815,#ff3614,#ff3313,#ff3112,#ff2e11,#ff2c10,#ff2a10,#ff280f,#ff260e,#ff240e,#ff220d,#ff200d,#ff1e0c,#ff1d0b,#ff1b0b,#ff190a,#ff180a,#ff1609,#ff1509,#ff1308,#ff1208,#ff1107,#ff0f07,#ff0e07,#ff0d06,#ff0c06,#ff0b05,#ff0a05,#ff0805,#ff0704,#ff0604,#ff0504,#ff0403,#ff0303,#ff0203,#ff0102,#ff0102,#ff0002,#ff0002,#ff0001,#ff0001,#ff0001,#ff0001,#ff0000)"></b><b class="r4" style="top:56px;background:linear-gradient(90deg,#00ff5d,#00ff5d,#00ff5e,#00ff5e,#00ff5e,#00ff5e,#00ff5e,#00ff5f,#08ff5f,#13ff5f,#1eff5f,#2aff60,#36ff60,#42ff60,#4eff60,#5bff61,#68ff61,#75ff61,#83ff61,#91ff62,#a0ff62,#afff62,#beff62,#ceff63,#deff63,#efff63,#fffe63,#ffed5d,#ffde58,#ffd053,#ffc44e,#ffb94a,#ffae46,#ffa542,#ff9c3f,#ff943c,#ff8c39,#ff8536,#ff7e34,#ff7832,#ff722f,#ff6c2d,#ff672b,#ff622a,#ff5d28,#ff5926,#ff5525,#ff5123,#ff4d22,#ff4920,#ff461f,#ff431e,#ff401d,#ff3d1c,#ff3a1b,#ff371a,#ff3419,#ff3218,#ff2f17,#ff2d16,#ff2b15,#ff2914,#ff2713,#ff2513,#ff2312,#ff2111,#ff1f11,#ff1d10,#ff1b0f,#ff1a0f,#ff180e,#ff170e,#ff150d,#ff140c,#ff120c,#ff110b,#ff100b,#ff0e0a,#ff0d0a,#ff0c0a,#ff0b09,#ff0a09,#ff0908,#ff0708,#ff0607,#ff0507,#ff0407,#ff0306,#ff0206,#ff0206,#ff0105,#ff0005,#ff0005,#ff0004,#ff0004,#ff0004,#ff0003,#ff0003,#ff0003)"></b><b class="r4" style="top:60px;background:linear-gradient(90deg,#00ff67,#00ff68,#00ff68,#00ff68,#00ff69,#00ff69,#00ff69,#00ff6a,#07ff6a,#12ff6a,#1dff6b,#29ff6b,#34ff6c,#41ff6c,#4dff6c,#5aff6d,#67ff6d,#75ff6e,#83ff6e,#91ff6f,#a0ff6f,#afff6f,#bfff70,#cfff71,#dfff71,#f0ff72,#fffc71,#ffeb6a,#ffdc64,#ffcf5e,#ffc259,#ffb754,#ffad50,#ffa34c,#ff9a48,#ff9245,#ff8a42,#ff833f,#ff7c3c,#ff7639,#ff7037,#ff6b35,#ff6532,#ff6130,#ff5c2e,#ff572d,#ff532b,#ff4f29,#ff4c28,#ff4826,#ff4525,#ff4123,#ff3e22,#ff3b21,#ff3820,#ff361f,#ff331d,#ff311c,#ff2e1b,#ff2c1a,#ff2a1a,#ff2719,#ff2518,#ff2317,#ff2116,#ff2015,#ff1e15,#ff1c14,#ff1a13,#ff1913,#ff1712,#ff1611,#ff1411,#ff1310,#ff1110,#ff100f,#ff0f0e,#ff0d0e,#ff0c0d,#ff0b0d,#ff0a0c,#ff090c,#ff080b,#ff070b,#ff050b,#ff040a,#ff030a,#ff0309,#ff0209,#ff0109,#ff0008,#ff0008,#ff0007,#ff0007,#ff0007,#ff0006,#ff0006,#ff0006,#ff0006)"></b><b class="r4" style="top:64px;background:linear-gradient(90deg,#00ff72,#00ff72,#00ff73,#00ff73,#00ff74,#00ff74,#00ff74,#00ff75,#05ff75,#10ff76,#1bff76,#27ff77,#33ff78,#40ff78,#4cff79,#59ff79,#67ff7a,#74ff7b,#83ff7b,#91ff7c,#a0ff7c,#afff7d,#bfff7e,#d0ff7f,#e1ff7f,#f2ff80,#fffa7f,#ffea77,#ffdb70,#ffcd6a,#ffc164,#ffb55f,#ffab5a,#ffa156,#ff9852,#ff904e,#ff884a,#ff8147,#ff7b44,#ff7441,#ff6f3e,#ff693c,#ff6439,#ff5f37,#ff5a35,#ff5633,#ff5231,#ff4e2f,#ff4a2e,#ff472c,#ff432a,#ff4029,#ff3d28,#ff3a26,#ff3725,#ff3424,#ff3222,#ff2f21,#ff2d20,#ff2b1f,#ff281e,#ff261d,#ff241c,#ff221b,#ff201a,#ff1e1a,#ff1d19,#ff1b18,#ff1917,#ff1816,#ff1616,#ff1515,#ff1314,#ff1214,#ff1013,#ff0f13,#ff0e12,#ff0c11,#ff0b11,#ff0a10,#ff0910,#ff080f,#ff070f,#ff060e,#ff050e,#ff040d,#ff030d,#ff020c,#ff010c,#ff000c,#ff000b,#ff000b,#ff000a,#ff000a,#ff000a,#ff0009,#ff0009,#ff0008,#ff0008)"></b><b class="r4" style="top:68px;background:linear-gradient(90deg,#00ff7c,#00ff7d,#00ff7d,#00ff7e,#00ff7f,#00ff7f,#00ff80,#00ff80,#03ff81,#0eff82,#1aff82,#26ff83,#32ff84,#3eff85,#4bff85,#58ff86,#66ff87,#74ff88,#82ff89,#91ff89,#a0ff8a,#b0ff8b,#c0ff8c,#d1ff8d,#e2ff8e,#f3ff8f,#fff98d,#ffe884,#ffd97d,#ffcb76,#ffbf6f,#ffb36a,#ffa964,#ff9f60,#ff965b,#ff8e57,#ff8753,#ff804f,#ff794c,#ff7349,#ff6d46,#ff6743,#ff6241,#ff5d3e,#ff593c,#ff543a,#ff5038,#ff4c36,#ff4934,#ff4532,#ff4230,#ff3e2f,#ff3b2d,#ff382c,#ff362a,#ff3329,#ff3027,#ff2e26,#ff2c25,#ff2924,#ff2723,#ff2522,#ff2321,#ff2120,#ff1f1f,#ff1d1e,#ff1b1d,#ff1a1c,#ff181b,#ff171a,#ff151a,#ff1319,#ff1218,#ff1117,#ff0f17,#ff0e16,#ff0d15,#ff0b15,#ff0a14,#ff0914,#ff0813,#ff0712,#ff0612,#ff0511,#ff0411,#ff0310,#ff0210,#ff010f,#ff000f,#ff000e,#ff000e,#ff000e,#ff000d,#ff000d,#ff000c,#ff000c,#ff000c,#ff000b,#ff000b)"></b><b class="r4" style="top:72px;background:linear-gradient(90deg,#00ff87,#00ff88,#00ff89,#00ff89,#00ff8a,#00ff8b,#00ff8c,#00ff8c,#01ff8d,#0dff8e,#18ff8f,#24ff90,#31ff91,#3dff91,#4aff92,#58ff93,#65ff94,#74ff95,#82ff96,#91ff98,#a0ff99,#b0ff9a,#c1ff9b,#d2ff9c,#e3ff9d,#f5ff9f,#fff79b,#ffe692,#ffd789,#ffc982,#ffbd7b,#ffb175,#ffa76f,#ff9e6a,#ff9565,#ff8c60,#ff855c,#ff7e58,#ff7754,#ff7151,#ff6b4e,#ff664b,#ff6148,#ff5c45,#ff5743,#ff5340,#ff4f3e,#ff4b3c,#ff473a,#ff4438,#ff4036,#ff3d34,#ff3a33,#ff3731,#ff342f,#ff322e,#ff2f2d,#ff2d2b,#ff2a2a,#ff2829,#ff2627,#ff2426,#ff2225,#ff2024,#ff1e23,#ff1c22,#ff1a21,#ff1920,#ff171f,#ff151e,#ff141d,#ff121d,#ff111c,#ff101b,#ff0e1a,#ff0d1a,#ff0c19,#ff0a18,#ff0918,#ff0817,#ff0716,#ff0616,#ff0515,#ff0415,#ff0314,#ff0213,#ff0113,#ff0012,#ff0012,#ff0011,#ff0011,#ff0010,#ff0010,#ff0010,#ff000f,#ff000f,#ff000e,#ff000e,#ff000d)"></b><b class="r4" style="top:76px;background:linear-gradient(90deg,#00ff92,#00ff93,#00ff94,#00ff95,#00ff96,#00ff97,#00ff98,#00ff98,#00ff99,#0bff9a,#17ff9b,#23ff9d,#2fff9e,#3cff9f,#49ffa0,#57ffa1,#65ffa2,#73ffa3,#82ffa5,#91ffa6,#a1ffa7,#b1ffa9,#c1ffaa,#d3ffac,#e4ffad,#f7ffaf,#fff5aa,#ffe49f,#ffd596,#ffc78e,#ffbb87,#ffb080,#ffa57a,#ff9c74,#ff936e,#ff8b6a,#ff8365,#ff7c61,#ff755d,#ff6f59,#ff6956,#ff6452,#ff5f4f,#ff5a4c,#ff564a,#ff5147,#ff4d45,#ff4942,#ff4640,#ff423e,#ff3f3c,#ff3c3a,#ff3938,#ff3636,#ff3335,#ff3033,#ff2e32,#ff2b30,#ff292f,#ff272d,#ff252c,#ff222b,#ff202a,#ff1f28,#ff1d27,#ff1b26,#ff1925,#ff1724,#ff1623,#ff1422,#ff1321,#ff1120,#ff1020,#ff0f1f,#ff0d1e,#ff0c1d,#ff0b1c,#ff091c,#ff081b,#ff071a,#ff061a,#ff0519,#ff0418,#ff0318,#ff0217,#ff0117,#ff0016,#ff0015,#ff0015,#ff0014,#ff0014,#ff0013,#ff0013,#ff0012,#ff0012,#ff0011,#ff0011,#ff0011,#ff0010)"></b><b class="r4" style="top:80px;background:linear-gradient(90deg,#00ff9e,#00ff9f,#00ffa0,#00ffa1,#00ffa2,#00ffa3,#00ffa4,#00ffa5,#00ffa6,#09ffa7,#15ffa8,#22ffaa,#2effab,#3bffac,#48ffae,#56ffaf,#64ffb0,#73ffb2,#82ffb3,#91ffb5,#a1ffb7,#b1ffb8,#c2ffba,#d4ffbc,#e6ffbd,#f8ffbf,#fff3b8,#ffe2ad,#ffd3a3,#ffc59b,#ffb992,#ffae8b,#ffa384,#ff9a7e,#ff9178,#ff8973,#ff816e,#ff7a69,#ff7465,#ff6d61,#ff685d,#ff625a,#ff5d57,#ff5853,#ff5450,#ff504e,#ff4c4b,#ff4849,#ff4446,#ff4144,#ff3d42,#ff3a40,#ff373e,#ff343c,#ff323a,#ff2f38,#ff2c37,#ff2a35,#ff2834,#ff2532,#ff2331,#ff212f,#ff1f2e,#ff1d2d,#ff1b2c,#ff1a2b,#ff1829,#ff1628,#ff1527,#ff1326,#ff1225,#ff1024,#ff0f23,#ff0d23,#ff0c22,#ff0b21,#ff0a20,#ff081f,#ff071e,#ff061e,#ff051d,#ff041c,#ff031c,#ff021b,#ff011a,#ff001a,#ff0019,#ff0018,#ff0018,#ff0017,#ff0017,#ff0016,#ff0016,#ff0015,#ff0015,#ff0014,#ff0014,#ff0013,#ff0013)"></b><b class="r4" style="top:84px;background:linear-gradient(90deg,#00ffa9,#00ffaa,#00ffac,#00ffad,#00ffae,#00ffaf,#00ffb0,#00ffb2,#00ffb3,#08ffb4,#14ffb6,#20ffb7,#2dffb9,#3affba,#47ffbc,#55ffbd,#64ffbf,#72ffc1,#81ffc2,#91ffc4,#a1ffc6,#b2ffc8,#c3ffca,#d5ffcc,#e7ffce,#faffd0,#fff1c7,#ffe0bc,#ffd1b1,#ffc4a7,#ffb79e,#ffac96,#ffa18f,#ff9888,#ff8f82,#ff877d,#ff7f77,#ff7872,#ff726e,#ff6c69,#ff6665,#ff6162,#ff5c5e,#ff575b,#ff5257,#ff4e54,#ff4a52,#ff464f,#ff434c,#ff3f4a,#ff3c48,#ff3945,#ff3643,#ff3341,#ff303f,#ff2e3e,#ff2b3c,#ff293a,#ff2639,#ff2437,#ff2236,#ff2034,#ff1e33,#ff1c31,#ff1a30,#ff192f,#ff172e,#ff152c,#ff142b,#ff122a,#ff1129,#ff0f28,#ff0e27,#ff0c26,#ff0b25,#ff0a24,#ff0924,#ff0723,#ff0622,#ff0521,#ff0420,#ff0320,#ff021f,#ff011e,#ff001d,#ff001d,#ff001c,#ff001c,#ff001b,#ff001a,#ff001a,#ff0019,#ff0019,#ff0018,#ff0017,#ff0017,#ff0016,#ff0016,#ff0015)"></b><b class="r4" style="top:88px;background:linear-gradient(90deg,#00ffb5,#00ffb6,#00ffb8,#00ffb9,#00ffba,#00ffbc,#00ffbd,#00ffbf,#00ffc0,#06ffc2,#12ffc3,#1effc5,#2bffc7,#39ffc9,#46ffca,#54ffcc,#63ffce,#72ffd0,#81ffd2,#91ffd4,#a1ffd6,#b2ffd8,#c4ffdb,#d6ffdd,#e8ffe0,#fcffe2,#ffefd7,#ffdeca,#ffcfbe,#ffc2b4,#ffb5ab,#ffaaa2,#ff9f9a,#ff9693,#ff8d8c,#ff8586,#ff7e81,#ff777b,#ff7076,#ff6a72,#ff646d,#ff5f69,#ff5a66,#ff5562,#ff515f,#ff4c5b,#ff4858,#ff4555,#ff4153,#ff3e50,#ff3a4e,#ff374b,#ff3449,#ff3147,#ff2f45,#ff2c43,#ff2a41,#ff273f,#ff253e,#ff233c,#ff213a,#ff1f39,#ff1d37,#ff1b36,#ff1934,#ff1733,#ff1632,#ff1431,#ff122f,#ff112e,#ff0f2d,#ff0e2c,#ff0d2b,#ff0b2a,#ff0a29,#ff0928,#ff0827,#ff0626,#ff0525,#ff0425,#ff0324,#ff0223,#ff0122,#ff0021,#ff0021,#ff0020,#ff001f,#ff001f,#ff001e,#ff001d,#ff001d,#ff001c,#ff001b,#ff001b,#ff001a,#ff001a,#ff0019,#ff0019,#ff0018)"></b><b class="r4" style="top:92px;background:linear-gradient(90deg,#00ffc1,#00ffc3,#00ffc4,#00ffc6,#00ffc7,#00ffc9,#00ffca,#00ffcc,#00ffce,#04ffd0,#10ffd1,#1dffd3,#2affd5,#37ffd7,#45ffd9,#53ffdb,#62ffde,#71ffe0,#81ffe2,#91ffe4,#a2ffe7,#b3ffe9,#c4ffec,#d7ffef,#eafff2,#fdfff4,#ffeee6,#ffddd9,#ffcdcc,#ffc0c1,#ffb3b7,#ffa8ae,#ff9da5,#ff949e,#ff8b97,#ff8390,#ff7c8a,#ff7584,#ff6e7f,#ff687a,#ff6275,#ff5d71,#ff586d,#ff5369,#ff4f66,#ff4b62,#ff475f,#ff435c,#ff3f59,#ff3c56,#ff3954,#ff3651,#ff334f,#ff304d,#ff2d4a,#ff2b48,#ff2846,#ff2644,#ff2443,#ff2141,#ff1f3f,#ff1d3d,#ff1b3c,#ff1a3a,#ff1839,#ff1637,#ff1436,#ff1335,#ff1134,#ff1032,#ff0e31,#ff0d30,#ff0c2f,#ff0a2e,#ff092d,#ff082c,#ff062b,#ff052a,#ff0429,#ff0328,#ff0227,#ff0126,#ff0025,#ff0025,#ff0024,#ff0023,#ff0022,#ff0022,#ff0021,#ff0020,#ff0020,#ff001f,#ff001e,#ff001e,#ff001d,#ff001c,#ff001c,#ff001b,#ff001b)"></b><b class="r4" style="top:96px;background:linear-gradient(90deg,#00ffce,#00ffcf,#00ffd1,#00ffd3,#00ffd4,#00ffd6,#00ffd8,#00ffda,#00ffdc,#02ffde,#0effe0,#1bffe2,#28ffe4,#36ffe6,#44ffe9,#53ffeb,#61ffed,#71fff0,#81fff3,#91fff5,#a2fff8,#b3fffb,#c5fffe,#d6fdff,#e7faff,#f7f7ff,#ffecf6,#ffdbe8,#ffcbda,#ffbece,#ffb1c4,#ffa6ba,#ff9bb1,#ff92a9,#ff89a1,#ff819a,#ff7a93,#ff738d,#ff6c88,#ff6683,#ff617e,#ff5b79,#ff5675,#ff5271,#ff4d6d,#ff4969,#ff4566,#ff4163,#ff3e5f,#ff3b5d,#ff375a,#ff3457,#ff3155,#ff2f52,#ff2c50,#ff294e,#ff274c,#ff2549,#ff2248,#ff2046,#ff1e44,#ff1c42,#ff1a40,#ff183f,#ff173d,#ff153c,#ff133a,#ff1239,#ff1038,#ff0f36,#ff0d35,#ff0c34,#ff0a33,#ff0932,#ff0831,#ff072f,#ff052e,#ff042d,#ff032c,#ff022b,#ff012b,#ff002a,#ff0029,#ff0028,#ff0027,#ff0026,#ff0026,#ff0025,#ff0024,#ff0023,#ff0023,#ff0022,#ff0021,#ff0021,#ff0020,#ff001f,#ff001f,#ff001e,#ff001d)"></b><b class="r4" style="top:100px;background:linear-gradient(90deg,#00ffdb,#00ffdc,#00ffde,#00ffe0,#00ffe2,#00ffe4,#00ffe6,#00ffe8,#00ffea,#00ffec,#0dffef,#1afff1,#27fff4,#35fff6,#43fff9,#52fffb,#61fffe,#6ffdff,#7efaff,#8df8ff,#9cf5ff,#abf2ff,#baefff,#c9ecff,#d8e9ff,#e8e6ff,#f8e3ff,#ffd9f7,#ffc9e9,#ffbbdc,#ffafd0,#ffa4c6,#ff99bc,#ff90b4,#ff87ab,#ff7fa4,#ff789d,#ff7197,#ff6a91,#ff648b,#ff5f86,#ff5a81,#ff557d,#ff5078,#ff4c74,#ff4770,#ff446d,#ff4069,#ff3c66,#ff3963,#ff3660,#ff335d,#ff305a,#ff2d58,#ff2a55,#ff2853,#ff2651,#ff234f,#ff214d,#ff1f4b,#ff1d49,#ff1b47,#ff1945,#ff1743,#ff1542,#ff1440,#ff123f,#ff103d,#ff0f3c,#ff0d3a,#ff0c39,#ff0b38,#ff0937,#ff0835,#ff0734,#ff0633,#ff0432,#ff0331,#ff0230,#ff012f,#ff002e,#ff002d,#ff002c,#ff002b,#ff002a,#ff0029,#ff0029,#ff0028,#ff0027,#ff0026,#ff0026,#ff0025,#ff0024,#ff0023,#ff0023,#ff0022,#ff0021,#ff0021,#ff0020)"></b><b class="r4" style="top:104px;background:linear-gradient(90deg,#00ffe8,#00ffea,#00ffec,#00ffee,#00fff0,#00fff2,#00fff4,#00fff7,#00fff9,#00fffb,#0bfffe,#18fdff,#25fbff,#32f8ff,#3ff5ff,#4df3ff,#5af0ff,#68edff,#76ebff,#84e8ff,#92e5ff,#a0e2ff,#aedfff,#bddcff,#cbd9ff,#dad6ff,#e9d3ff,#f8d0ff,#ffc7f7,#ffb9ea,#ffaddd,#ffa2d2,#ff97c8,#ff8ebf,#ff85b6,#ff7dae,#ff76a7,#ff6fa0,#ff699a,#ff6394,#ff5d8e,#ff5889,#ff5384,#ff4e80,#ff4a7b,#ff4677,#ff4274,#ff3e70,#ff3b6c,#ff3769,#ff3466,#ff3163,#ff2e60,#ff2c5e,#ff295b,#ff2658,#ff2456,#ff2254,#ff2052,#ff1d50,#ff1b4e,#ff1a4c,#ff184a,#ff1648,#ff1446,#ff1245,#ff1143,#ff0f42,#ff0e40,#ff0c3f,#ff0b3d,#ff093c,#ff083b,#ff0739,#ff0638,#ff0437,#ff0336,#ff0235,#ff0133,#ff0032,#ff0031,#ff0030,#ff002f,#ff002f,#ff002e,#ff002d,#ff002c,#ff002b,#ff002a,#ff0029,#ff0029,#ff0028,#ff0027,#ff0026,#ff0026,#ff0025,#ff0024,#ff0024,#ff0023)"></b><b class="r4" style="top:108px;background:linear-gradient(90deg,#00fff5,#00fff7,#00fff9,#00fffc,#00fffe,#00feff,#00fbff,#00f9ff,#00f6ff,#00f4ff,#08f1ff,#15efff,#21ecff,#2ee9ff,#3ae7ff,#47e4ff,#54e2ff,#61dfff,#6edcff,#7cd9ff,#89d7ff,#96d4ff,#a4d1ff,#b2ceff,#c0cbff,#cec9ff,#dcc6ff,#eac3ff,#f8c0ff,#ffb7f8,#ffabea,#ffa0df,#ff95d4,#ff8cca,#ff83c1,#ff7bb8,#ff74b1,#ff6daa,#ff67a3,#ff619d,#ff5b97,#ff5691,#ff518c,#ff4c87,#ff4883,#ff447f,#ff407a,#ff3d77,#ff3973,#ff3670,#ff336c,#ff3069,#ff2d66,#ff2a63,#ff2861,#ff255e,#ff235b,#ff2059,#ff1e57,#ff1c55,#ff1a53,#ff1850,#ff164f,#ff154d,#ff134b,#ff1149,#ff1047,#ff0e46,#ff0d44,#ff0b43,#ff0a41,#ff0840,#ff073e,#ff063d,#ff053c,#ff033b,#ff0239,#ff0138,#ff0037,#ff0036,#ff0035,#ff0034,#ff0033,#ff0032,#ff0031,#ff0030,#ff002f,#ff002e,#ff002d,#ff002c,#ff002c,#ff002b,#ff002a,#ff0029,#ff0028,#ff0028,#ff0027,#ff0026,#ff0026)"></b><b class="r4" style="top:112px;background:linear-gradient(90deg,#00fbff,#00f9ff,#00f7ff,#00f4ff,#00f2ff,#00f0ff,#00edff,#00ebff,#00e8ff,#00e6ff,#06e3ff,#12e1ff,#1edeff,#2adcff,#36d9ff,#42d7ff,#4ed4ff,#5bd2ff,#67cfff,#74ccff,#81caff,#8ec7ff,#9bc4ff,#a8c1ff,#b5bfff,#c2bcff,#d0b9ff,#ddb6ff,#ebb3ff,#f8b0ff,#ffa9f8,#ff9deb,#ff93e0,#ff8ad5,#ff81cc,#ff79c3,#ff72bb,#ff6bb3,#ff65ac,#ff5fa5,#ff599f,#ff549a,#ff4f94,#ff4b8f,#ff468a,#ff4286,#ff3f82,#ff3b7d,#ff377a,#ff3476,#ff3173,#ff2e6f,#ff2b6c,#ff2969,#ff2666,#ff2464,#ff2161,#ff1f5e,#ff1d5c,#ff1b5a,#ff1957,#ff1755,#ff1553,#ff1351,#ff124f,#ff104e,#ff0e4c,#ff0d4a,#ff0b48,#ff0a47,#ff0945,#ff0744,#ff0642,#ff0541,#ff0340,#ff023e,#ff013d,#ff003c,#ff003b,#ff0039,#ff0038,#ff0037,#ff0036,#ff0035,#ff0034,#ff0033,#ff0032,#ff0031,#ff0030,#ff002f,#ff002f,#ff002e,#ff002d,#ff002c,#ff002b,#ff002b,#ff002a,#ff0029,#ff0028)"></b><b class="r4" style="top:116px;background:linear-gradient(90deg,#00eeff,#00ecff,#00eaff,#00e8ff,#00e5ff,#00e3ff,#00e1ff,#00deff,#00dcff,#00d9ff,#04d7ff,#0fd5ff,#1bd2ff,#26d0ff,#32cdff,#3ecbff,#49c8ff,#55c6ff,#61c3ff,#6dc0ff,#79beff,#86bbff,#92b8ff,#9fb6ff,#abb3ff,#b8b0ff,#c5aeff,#d1abff,#dea8ff,#eca5ff,#f9a2ff,#ff9bf8,#ff91ec,#ff88e1,#ff7fd7,#ff77cd,#ff70c5,#ff69bd,#ff63b5,#ff5dae,#ff57a8,#ff52a2,#ff4d9c,#ff4997,#ff4592,#ff418d,#ff3d89,#ff3984,#ff3680,#ff337c,#ff2f79,#ff2d75,#ff2a72,#ff276f,#ff256c,#ff2269,#ff2066,#ff1e64,#ff1b61,#ff195f,#ff175c,#ff165a,#ff1458,#ff1256,#ff1054,#ff0f52,#ff0d50,#ff0c4e,#ff0a4d,#ff094b,#ff0749,#ff0648,#ff0546,#ff0445,#ff0243,#ff0142,#ff0041,#ff003f,#ff003e,#ff003d,#ff003c,#ff003b,#ff003a,#ff0038,#ff0037,#ff0036,#ff0035,#ff0034,#ff0033,#ff0033,#ff0032,#ff0031,#ff0030,#ff002f,#ff002e,#ff002d,#ff002d,#ff002c,#ff002b)"></b><b class="r4" style="top:120px;background:linear-gradient(90deg,#00e2ff,#00e0ff,#00deff,#00dcff,#00d9ff,#00d7ff,#00d5ff,#00d2ff,#00d0ff,#00ceff,#02cbff,#0dc9ff,#18c7ff,#23c4ff,#2ec2ff,#39bfff,#45bdff,#50baff,#5bb8ff,#67b5ff,#73b3ff,#7eb0ff,#8aaeff,#96abff,#a2a8ff,#aea6ff,#baa3ff,#c7a0ff,#d39eff,#e09bff,#ec98ff,#f995ff,#ff8ff8,#ff85ed,#ff7de2,#ff75d8,#ff6ecf,#ff67c7,#ff61bf,#ff5bb8,#ff55b1,#ff50aa,#ff4ca4,#ff479f,#ff4399,#ff3f94,#ff3b90,#ff388b,#ff3487,#ff3183,#ff2e7f,#ff2b7c,#ff2878,#ff2675,#ff2372,#ff216f,#ff1e6c,#ff1c69,#ff1a66,#ff1864,#ff1661,#ff145f,#ff125d,#ff115b,#ff0f59,#ff0d57,#ff0c55,#ff0a53,#ff0951,#ff084f,#ff064e,#ff054c,#ff044a,#ff0249,#ff0147,#ff0046,#ff0045,#ff0043,#ff0042,#ff0041,#ff003f,#ff003e,#ff003d,#ff003c,#ff003b,#ff003a,#ff0039,#ff0038,#ff0037,#ff0036,#ff0035,#ff0034,#ff0033,#ff0032,#ff0031,#ff0030,#ff002f,#ff002f,#ff002e)"></b><b class="r4" style="top:124px;background:linear-gradient(90deg,#00d7ff,#00d5ff,#00d3ff,#00d1ff,#00ceff,#00ccff,#00caff,#00c8ff,#00c5ff,#00c3ff,#00c1ff,#0bbeff,#15bcff,#20baff,#2bb7ff,#35b5ff,#40b3ff,#4bb0ff,#56aeff,#61abff,#6ca9ff,#78a6ff,#83a4ff,#8ea1ff,#9a9fff,#a69cff,#b199ff,#bd97ff,#c994ff,#d591ff,#e18fff,#ed8cff,#f989ff,#ff83f9,#ff7bed,#ff73e3,#ff6cd9,#ff65d1,#ff5fc8,#ff59c1,#ff54ba,#ff4eb3,#ff4aad,#ff45a7,#ff41a1,#ff3d9c,#ff3997,#ff3692,#ff328e,#ff2f8a,#ff2c86,#ff2982,#ff277e,#ff247b,#ff2277,#ff1f74,#ff1d71,#ff1b6e,#ff196c,#ff1769,#ff1566,#ff1364,#ff1162,#ff0f5f,#ff0e5d,#ff0c5b,#ff0b59,#ff0957,#ff0855,#ff0653,#ff0552,#ff0450,#ff024e,#ff014d,#ff004b,#ff004a,#ff0048,#ff0047,#ff0045,#ff0044,#ff0043,#ff0042,#ff0040,#ff003f,#ff003e,#ff003d,#ff003c,#ff003b,#ff003a,#ff0039,#ff0038,#ff0037,#ff0036,#ff0035,#ff0034,#ff0033,#ff0032,#ff0031,#ff0031)"></b><b class="r4" style="top:128px;background:linear-gradient(90deg,#00cdff,#00cbff,#00c9ff,#00c6ff,#00c4ff,#00c2ff,#00c0ff,#00beff,#00bbff,#00b9ff,#00b7ff,#09b5ff,#13b2ff,#1db0ff,#27aeff,#32abff,#3ca9ff,#47a7ff,#51a4ff,#5ca2ff,#679fff,#719dff,#7c9bff,#8798ff,#9296ff,#9d93ff,#a990ff,#b48eff,#bf8bff,#cb89ff,#d686ff,#e284ff,#ee81ff,#f97eff,#ff79f9,#ff71ee,#ff6ae4,#ff63db,#ff5dd2,#ff57ca,#ff52c2,#ff4dbb,#ff48b5,#ff43af,#ff3fa9,#ff3ba3,#ff389e,#ff3499,#ff3195,#ff2e90,#ff2b8c,#ff2888,#ff2584,#ff2381,#ff207d,#ff1e7a,#ff1b77,#ff1974,#ff1771,#ff156e,#ff136c,#ff1269,#ff1067,#ff0e64,#ff0c62,#ff0b60,#ff095e,#ff085c,#ff075a,#ff0558,#ff0456,#ff0354,#ff0152,#ff0051,#ff004f,#ff004e,#ff004c,#ff004b,#ff0049,#ff0048,#ff0046,#ff0045,#ff0044,#ff0043,#ff0041,#ff0040,#ff003f,#ff003e,#ff003d,#ff003c,#ff003b,#ff003a,#ff0039,#ff0038,#ff0037,#ff0036,#ff0035,#ff0034,#ff0033)"></b><b class="r4" style="top:132px;background:linear-gradient(90deg,#00c3ff,#00c1ff,#00bfff,#00bdff,#00bbff,#00b9ff,#00b7ff,#00b4ff,#00b2ff,#00b0ff,#00aeff,#07acff,#11a9ff,#1aa7ff,#24a5ff,#2ea2ff,#38a0ff,#439eff,#4d9cff,#5799ff,#6197ff,#6c94ff,#7692ff,#8190ff,#8b8dff,#968bff,#a188ff,#ac86ff,#b683ff,#c181ff,#cc7eff,#d87cff,#e379ff,#ee76ff,#fa74ff,#ff6ff9,#ff67ef,#ff61e5,#ff5bdc,#ff55d3,#ff50cb,#ff4bc4,#ff46bd,#ff42b7,#ff3db1,#ff3aab,#ff36a6,#ff32a0,#ff2f9c,#ff2c97,#ff2993,#ff268e,#ff248b,#ff2187,#ff1f83,#ff1c80,#ff1a7c,#ff1879,#ff1676,#ff1473,#ff1271,#ff106e,#ff0e6b,#ff0d69,#ff0b67,#ff0a64,#ff0862,#ff0760,#ff055e,#ff045c,#ff035a,#ff0158,#ff0056,#ff0055,#ff0053,#ff0051,#ff0050,#ff004e,#ff004d,#ff004b,#ff004a,#ff0049,#ff0047,#ff0046,#ff0045,#ff0044,#ff0042,#ff0041,#ff0040,#ff003f,#ff003e,#ff003d,#ff003c,#ff003b,#ff003a,#ff0039,#ff0038,#ff0037,#ff0036)"></b><b class="r4" style="top:136px;background:linear-gradient(90deg,#00baff,#00b8ff,#00b6ff,#00b4ff,#00b2ff,#00b0ff,#00aeff,#00acff,#00aaff,#00a7ff,#00a5ff,#05a3ff,#0fa1ff,#189fff,#229cff,#2b9aff,#3598ff,#3f96ff,#4893ff,#5291ff,#5c8fff,#668cff,#708aff,#7b88ff,#8585ff,#8f83ff,#9981ff,#a47eff,#ae7cff,#b979ff,#c377ff,#ce74ff,#d972ff,#e46fff,#ef6dff,#fa6aff,#ff65f9,#ff5fef,#ff59e6,#ff53dd,#ff4ed5,#ff49cd,#ff44c6,#ff40bf,#ff3cb9,#ff38b3,#ff34ad,#ff31a8,#ff2da3,#ff2a9e,#ff2799,#ff2595,#ff2291,#ff1f8d,#ff1d89,#ff1b86,#ff1982,#ff167f,#ff147c,#ff1279,#ff1176,#ff0f73,#ff0d70,#ff0b6e,#ff0a6b,#ff0869,#ff0767,#ff0564,#ff0462,#ff0360,#ff015e,#ff005c,#ff005a,#ff0059,#ff0057,#ff0055,#ff0054,#ff0052,#ff0050,#ff004f,#ff004e,#ff004c,#ff004b,#ff0049,#ff0048,#ff0047,#ff0046,#ff0044,#ff0043,#ff0042,#ff0041,#ff0040,#ff003f,#ff003e,#ff003d,#ff003c,#ff003b,#ff003a,#ff0039)"></b><b class="r4" style="top:140px;background:linear-gradient(90deg,#00b2ff,#00b0ff,#00aeff,#00acff,#00aaff,#00a8ff,#00a6ff,#00a4ff,#00a1ff,#009fff,#009dff,#039bff,#0d99ff,#1697ff,#1f95ff,#2892ff,#3290ff,#3b8eff,#458cff,#4e8aff,#5887ff,#6185ff,#6b83ff,#7580ff,#7f7eff,#897cff,#9279ff,#9d77ff,#a775ff,#b172ff,#bb70ff,#c56dff,#d06bff,#da69ff,#e566ff,#ef64ff,#fa61ff,#ff5dfa,#ff56f0,#ff51e6,#ff4cde,#ff47d6,#ff42ce,#ff3ec7,#ff3ac1,#ff36ba,#ff32b4,#ff2faf,#ff2caa,#ff29a5,#ff26a0,#ff239b,#ff2097,#ff1e93,#ff1b8f,#ff198b,#ff1788,#ff1584,#ff1381,#ff117e,#ff0f7b,#ff0d78,#ff0c75,#ff0a73,#ff0970,#ff076e,#ff066b,#ff0469,#ff0367,#ff0265,#ff0063,#ff0061,#ff005f,#ff005d,#ff005b,#ff0059,#ff0057,#ff0056,#ff0054,#ff0053,#ff0051,#ff0050,#ff004e,#ff004d,#ff004b,#ff004a,#ff0049,#ff0048,#ff0046,#ff0045,#ff0044,#ff0043,#ff0042,#ff0041,#ff0040,#ff003f,#ff003e,#ff003d,#ff003c)"></b><b class="r4" style="top:144px;background:linear-gradient(90deg,#00aaff,#00a8ff,#00a6ff,#00a4ff,#00a2ff,#00a0ff,#009eff,#009cff,#009aff,#0098ff,#0096ff,#0294ff,#0b92ff,#148fff,#1d8dff,#268bff,#2f89ff,#3887ff,#4185ff,#4a82ff,#5380ff,#5d7eff,#667cff,#6f7aff,#7977ff,#8275ff,#8c73ff,#9670ff,#a06eff,#a96cff,#b369ff,#bd67ff,#c765ff,#d162ff,#db60ff,#e55eff,#f05bff,#fa59ff,#ff54fa,#ff4ff0,#ff4ae7,#ff45df,#ff40d7,#ff3cd0,#ff38c9,#ff34c2,#ff30bc,#ff2db6,#ff2ab1,#ff27ab,#ff24a7,#ff21a2,#ff1f9d,#ff1c99,#ff1a95,#ff1891,#ff168d,#ff138a,#ff1187,#ff1083,#ff0e80,#ff0c7d,#ff0a7a,#ff0978,#ff0775,#ff0672,#ff0470,#ff036d,#ff026b,#ff0069,#ff0067,#ff0065,#ff0063,#ff0061,#ff005f,#ff005d,#ff005b,#ff005a,#ff0058,#ff0056,#ff0055,#ff0053,#ff0052,#ff0050,#ff004f,#ff004e,#ff004c,#ff004b,#ff004a,#ff0048,#ff0047,#ff0046,#ff0045,#ff0044,#ff0043,#ff0042,#ff0041,#ff0040,#ff003f)"></b><b class="r4" style="top:148px;background:linear-gradient(90deg,#00a3ff,#00a1ff,#009fff,#009dff,#009bff,#0099ff,#0097ff,#0095ff,#0093ff,#0091ff,#008fff,#008dff,#098bff,#1289ff,#1a86ff,#2384ff,#2c82ff,#3580ff,#3d7eff,#467cff,#4f7aff,#5878ff,#6175ff,#6a73ff,#7471ff,#7d6fff,#866dff,#8f6aff,#9968ff,#a266ff,#ac63ff,#b561ff,#bf5fff,#c95dff,#d35aff,#dc58ff,#e655ff,#f053ff,#fa51ff,#ff4dfa,#ff47f1,#ff43e8,#ff3ee0,#ff3ad8,#ff36d1,#ff32ca,#ff2fc4,#ff2bbe,#ff28b8,#ff25b2,#ff22ad,#ff20a8,#ff1da4,#ff1b9f,#ff189b,#ff1697,#ff1493,#ff1290,#ff108c,#ff0e89,#ff0c85,#ff0b82,#ff097f,#ff077c,#ff067a,#ff0477,#ff0374,#ff0272,#ff0070,#ff006d,#ff006b,#ff0069,#ff0067,#ff0065,#ff0063,#ff0061,#ff005f,#ff005d,#ff005c,#ff005a,#ff0058,#ff0057,#ff0055,#ff0054,#ff0052,#ff0051,#ff0050,#ff004e,#ff004d,#ff004c,#ff004a,#ff0049,#ff0048,#ff0047,#ff0046,#ff0045,#ff0044,#ff0043,#ff0041)"></b><b class="r4" style="top:152px;background:linear-gradient(90deg,#009cff,#009aff,#0098ff,#0096ff,#0094ff,#0092ff,#0090ff,#008eff,#008cff,#008aff,#0088ff,#0086ff,#0784ff,#1082ff,#1880ff,#217eff,#297cff,#327aff,#3a78ff,#4376ff,#4b74ff,#5471ff,#5d6fff,#666dff,#6f6bff,#7869ff,#8167ff,#8a65ff,#9362ff,#9c60ff,#a55eff,#ae5cff,#b859ff,#c157ff,#ca55ff,#d452ff,#dd50ff,#e74eff,#f14cff,#fa49ff,#ff45fa,#ff41f1,#ff3ce8,#ff38e0,#ff34d9,#ff30d2,#ff2dcb,#ff2ac5,#ff26bf,#ff23b9,#ff21b4,#ff1eaf,#ff1baa,#ff19a6,#ff17a1,#ff159d,#ff1299,#ff1095,#ff0f92,#ff0d8e,#ff0b8b,#ff0987,#ff0884,#ff0681,#ff057f,#ff037c,#ff0279,#ff0077,#ff0074,#ff0072,#ff006f,#ff006d,#ff006b,#ff0069,#ff0067,#ff0065,#ff0063,#ff0061,#ff005f,#ff005e,#ff005c,#ff005a,#ff0059,#ff0057,#ff0056,#ff0054,#ff0053,#ff0051,#ff0050,#ff004f,#ff004e,#ff004c,#ff004b,#ff004a,#ff0049,#ff0048,#ff0046,#ff0045,#ff0044)"></b><b class="r4" style="top:156px;background:linear-gradient(90deg,#0095ff,#0093ff,#0091ff,#008fff,#008dff,#008cff,#008aff,#0088ff,#0086ff,#0084ff,#0082ff,#0080ff,#067eff,#0e7cff,#167aff,#1e78ff,#2776ff,#2f74ff,#3772ff,#3f70ff,#486eff,#506cff,#596aff,#6168ff,#6a65ff,#7363ff,#7b61ff,#845fff,#8d5dff,#965bff,#9f59ff,#a756ff,#b054ff,#ba52ff,#c350ff,#cc4eff,#d54bff,#de49ff,#e847ff,#f144ff,#fa42ff,#ff3ffa,#ff3af1,#ff36e9,#ff32e1,#ff2eda,#ff2bd3,#ff28cc,#ff25c6,#ff22c0,#ff1fbb,#ff1cb6,#ff1ab1,#ff17ac,#ff15a7,#ff13a3,#ff119f,#ff0f9b,#ff0d97,#ff0b93,#ff0990,#ff088d,#ff0689,#ff0586,#ff0383,#ff0281,#ff007e,#ff007b,#ff0079,#ff0076,#ff0074,#ff0071,#ff006f,#ff006d,#ff006b,#ff0069,#ff0067,#ff0065,#ff0063,#ff0061,#ff0060,#ff005e,#ff005c,#ff005b,#ff0059,#ff0058,#ff0056,#ff0055,#ff0053,#ff0052,#ff0051,#ff004f,#ff004e,#ff004d,#ff004c,#ff004b,#ff0049,#ff0048,#ff0047)"></b><b class="r4" style="top:160px;background:linear-gradient(90deg,#008fff,#008dff,#008bff,#0089ff,#0087ff,#0085ff,#0084ff,#0082ff,#0080ff,#007eff,#007cff,#007aff,#0478ff,#0c76ff,#1474ff,#1c72ff,#2470ff,#2c6eff,#346cff,#3c6aff,#4468ff,#4d66ff,#5564ff,#5d62ff,#6660ff,#6e5eff,#765cff,#7f5aff,#8758ff,#9056ff,#9854ff,#a151ff,#aa4fff,#b34dff,#bb4bff,#c449ff,#cd47ff,#d644ff,#df42ff,#e840ff,#f13eff,#fb3bff,#ff38fa,#ff34f2,#ff30ea,#ff2de2,#ff29db,#ff26d4,#ff23ce,#ff20c8,#ff1dc2,#ff1bbc,#ff18b7,#ff16b2,#ff14ae,#ff11a9,#ff0fa5,#ff0da1,#ff0c9d,#ff0a99,#ff0895,#ff0692,#ff058f,#ff038b,#ff0288,#ff0085,#ff0082,#ff0080,#ff007d,#ff007b,#ff0078,#ff0076,#ff0073,#ff0071,#ff006f,#ff006d,#ff006b,#ff0069,#ff0067,#ff0065,#ff0063,#ff0062,#ff0060,#ff005e,#ff005d,#ff005b,#ff005a,#ff0058,#ff0057,#ff0055,#ff0054,#ff0053,#ff0051,#ff0050,#ff004f,#ff004d,#ff004c,#ff004b,#ff004a)"></b><b class="r4" style="top:164px;background:linear-gradient(90deg,#0089ff,#0087ff,#0085ff,#0083ff,#0082ff,#0080ff,#007eff,#007cff,#007aff,#0078ff,#0077ff,#0075ff,#0373ff,#0b71ff,#126fff,#1a6dff,#226bff,#2a69ff,#3167ff,#3965ff,#4163ff,#4961ff,#515fff,#595dff,#615bff,#6959ff,#7257ff,#7a55ff,#8253ff,#8a51ff,#934fff,#9b4dff,#a44bff,#ac49ff,#b547ff,#bd44ff,#c642ff,#cf40ff,#d73eff,#e03cff,#e93aff,#f237ff,#fb35ff,#ff32fa,#ff2ef2,#ff2bea,#ff27e3,#ff24dc,#ff21d5,#ff1ecf,#ff1bc9,#ff19c3,#ff16be,#ff14b9,#ff12b4,#ff10af,#ff0eab,#ff0ca6,#ff0aa2,#ff089e,#ff079b,#ff0597,#ff0394,#ff0290,#ff008d,#ff008a,#ff0087,#ff0084,#ff0082,#ff007f,#ff007c,#ff007a,#ff0078,#ff0075,#ff0073,#ff0071,#ff006f,#ff006d,#ff006b,#ff0069,#ff0067,#ff0065,#ff0063,#ff0062,#ff0060,#ff005e,#ff005d,#ff005b,#ff005a,#ff0058,#ff0057,#ff0056,#ff0054,#ff0053,#ff0052,#ff0050,#ff004f,#ff004e,#ff004d)"></b><b class="r4" style="top:168px;background:linear-gradient(90deg,#0083ff,#0081ff,#0080ff,#007eff,#007cff,#007aff,#0079ff,#0077ff,#0075ff,#0073ff,#0071ff,#006fff,#026eff,#096cff,#116aff,#1868ff,#2066ff,#2764ff,#2f62ff,#3760ff,#3e5eff,#465cff,#4e5bff,#5659ff,#5d57ff,#6555ff,#6d53ff,#7551ff,#7d4fff,#854dff,#8d4bff,#9649ff,#9e46ff,#a644ff,#ae42ff,#b740ff,#bf3eff,#c73cff,#d03aff,#d838ff,#e136ff,#e933ff,#f231ff,#fb2fff,#ff2cfb,#ff29f2,#ff25eb,#ff22e3,#ff1fdc,#ff1cd6,#ff1ad0,#ff17ca,#ff15c4,#ff12bf,#ff10ba,#ff0eb5,#ff0cb1,#ff0aac,#ff09a8,#ff07a4,#ff05a0,#ff049c,#ff0299,#ff0195,#ff0092,#ff008f,#ff008c,#ff0089,#ff0086,#ff0083,#ff0081,#ff007e,#ff007c,#ff0079,#ff0077,#ff0075,#ff0073,#ff0071,#ff006f,#ff006d,#ff006b,#ff0069,#ff0067,#ff0065,#ff0064,#ff0062,#ff0060,#ff005f,#ff005d,#ff005c,#ff005a,#ff0059,#ff0057,#ff0056,#ff0055,#ff0053,#ff0052,#ff0051,#ff0050)"></b><b class="r4" style="top:172px;background:linear-gradient(90deg,#007eff,#007cff,#007aff,#0079ff,#0077ff,#0075ff,#0073ff,#0072ff,#0070ff,#006eff,#006cff,#006aff,#0169ff,#0867ff,#0f65ff,#1663ff,#1e61ff,#255fff,#2d5eff,#345cff,#3b5aff,#4358ff,#4a56ff,#5254ff,#5a52ff,#6150ff,#694eff,#714cff,#794aff,#8048ff,#8846ff,#9044ff,#9842ff,#a040ff,#a83eff,#b03cff,#b83aff,#c138ff,#c936ff,#d134ff,#d932ff,#e230ff,#ea2eff,#f22cff,#fb29ff,#ff27fb,#ff23f3,#ff20eb,#ff1de4,#ff1bdd,#ff18d7,#ff15d1,#ff13cb,#ff11c6,#ff0fc0,#ff0dbb,#ff0bb7,#ff09b2,#ff07ae,#ff05aa,#ff04a6,#ff02a2,#ff019e,#ff009b,#ff0097,#ff0094,#ff0091,#ff008e,#ff008b,#ff0088,#ff0085,#ff0083,#ff0080,#ff007e,#ff007b,#ff0079,#ff0077,#ff0075,#ff0072,#ff0070,#ff006e,#ff006d,#ff006b,#ff0069,#ff0067,#ff0065,#ff0064,#ff0062,#ff0060,#ff005f,#ff005d,#ff005c,#ff005b,#ff0059,#ff0058,#ff0056,#ff0055,#ff0054,#ff0053)"></b><b class="r4" style="top:176px;background:linear-gradient(90deg,#0079ff,#0077ff,#0075ff,#0074ff,#0072ff,#0070ff,#006fff,#006dff,#006bff,#0069ff,#0068ff,#0066ff,#0064ff,#0762ff,#0e60ff,#155fff,#1c5dff,#235bff,#2a59ff,#3157ff,#3955ff,#4054ff,#4752ff,#4f50ff,#564eff,#5e4cff,#654aff,#6d48ff,#7446ff,#7c44ff,#8342ff,#8b40ff,#933fff,#9b3dff,#a23bff,#aa39ff,#b237ff,#ba35ff,#c233ff,#ca30ff,#d22eff,#da2cff,#e22aff,#ea28ff,#f326ff,#fb24ff,#ff21fb,#ff1ef3,#ff1bec,#ff19e5,#ff16de,#ff14d8,#ff11d2,#ff0fcc,#ff0dc7,#ff0bc2,#ff09bd,#ff07b8,#ff05b3,#ff04af,#ff02ab,#ff01a7,#ff00a3,#ff00a0,#ff009c,#ff0099,#ff0096,#ff0092,#ff008f,#ff008d,#ff008a,#ff0087,#ff0084,#ff0082,#ff007f,#ff007d,#ff007b,#ff0078,#ff0076,#ff0074,#ff0072,#ff0070,#ff006e,#ff006c,#ff006b,#ff0069,#ff0067,#ff0065,#ff0064,#ff0062,#ff0061,#ff005f,#ff005e,#ff005c,#ff005b,#ff0059,#ff0058,#ff0057,#ff0056)"></b><b class="r4" style="top:180px;background:linear-gradient(90deg,#0074ff,#0072ff,#0071ff,#006fff,#006dff,#006cff,#006aff,#0068ff,#0067ff,#0065ff,#0063ff,#0061ff,#0060ff,#055eff,#0c5cff,#135aff,#1a59ff,#2157ff,#2855ff,#2f53ff,#3651ff,#3d50ff,#444eff,#4c4cff,#534aff,#5a48ff,#6146ff,#6944ff,#7043ff,#7741ff,#7f3fff,#863dff,#8e3bff,#9539ff,#9d37ff,#a535ff,#ac33ff,#b431ff,#bc2fff,#c42dff,#cb2bff,#d329ff,#db27ff,#e325ff,#eb23ff,#f321ff,#fb1fff,#ff1cfb,#ff1af3,#ff17ec,#ff14e5,#ff12df,#ff10d9,#ff0dd3,#ff0bcd,#ff09c8,#ff07c3,#ff06be,#ff04b9,#ff02b5,#ff01b1,#ff00ad,#ff00a9,#ff00a5,#ff00a1,#ff009e,#ff009a,#ff0097,#ff0094,#ff0091,#ff008e,#ff008b,#ff0089,#ff0086,#ff0084,#ff0081,#ff007f,#ff007c,#ff007a,#ff0078,#ff0076,#ff0074,#ff0072,#ff0070,#ff006e,#ff006c,#ff006b,#ff0069,#ff0067,#ff0065,#ff0064,#ff0062,#ff0061,#ff005f,#ff005e,#ff005d,#ff005b,#ff005a,#ff0059)"></b><b class="r4" style="top:184px;background:linear-gradient(90deg,#006fff,#006eff,#006cff,#006bff,#0069ff,#0067ff,#0066ff,#0064ff,#0062ff,#0061ff,#005fff,#005dff,#005bff,#045aff,#0b58ff,#1256ff,#1854ff,#1f53ff,#2651ff,#2d4fff,#344dff,#3b4cff,#424aff,#4948ff,#5046ff,#5744ff,#5e43ff,#6541ff,#6c3fff,#733dff,#7b3bff,#8239ff,#8937ff,#9136ff,#9834ff,#9f32ff,#a730ff,#ae2eff,#b62cff,#bd2aff,#c528ff,#cd26ff,#d424ff,#dc22ff,#e420ff,#eb1eff,#f31cff,#fb1aff,#ff18fb,#ff15f4,#ff12ed,#ff10e6,#ff0edf,#ff0cd9,#ff0ad4,#ff08ce,#ff06c9,#ff04c4,#ff02bf,#ff01bb,#ff00b6,#ff00b2,#ff00ae,#ff00aa,#ff00a6,#ff00a3,#ff009f,#ff009c,#ff0099,#ff0096,#ff0093,#ff0090,#ff008d,#ff008a,#ff0088,#ff0085,#ff0083,#ff0080,#ff007e,#ff007c,#ff007a,#ff0078,#ff0076,#ff0074,#ff0072,#ff0070,#ff006e,#ff006c,#ff006a,#ff0069,#ff0067,#ff0066,#ff0064,#ff0062,#ff0061,#ff0060,#ff005e,#ff005d,#ff005b)"></b><b class="r4" style="top:188px;background:linear-gradient(90deg,#006bff,#006aff,#0068ff,#0066ff,#0065ff,#0063ff,#0061ff,#0060ff,#005eff,#005cff,#005bff,#0059ff,#0057ff,#0356ff,#0954ff,#1052ff,#1751ff,#1d4fff,#244dff,#2b4bff,#314aff,#3848ff,#3f46ff,#4644ff,#4d43ff,#5441ff,#5a3fff,#613dff,#683bff,#6f3aff,#7638ff,#7e36ff,#8534ff,#8c32ff,#9330ff,#9a2fff,#a12dff,#a92bff,#b029ff,#b727ff,#bf25ff,#c623ff,#ce21ff,#d51fff,#dd1dff,#e41bff,#ec19ff,#f417ff,#fb15ff,#ff13fb,#ff11f4,#ff0eed,#ff0ce6,#ff0ae0,#ff08da,#ff06d4,#ff04cf,#ff02ca,#ff01c5,#ff00c0,#ff00bc,#ff00b7,#ff00b3,#ff00af,#ff00ab,#ff00a8,#ff00a4,#ff00a1,#ff009d,#ff009a,#ff0097,#ff0094,#ff0091,#ff008f,#ff008c,#ff0089,#ff0087,#ff0084,#ff0082,#ff0080,#ff007d,#ff007b,#ff0079,#ff0077,#ff0075,#ff0073,#ff0071,#ff0070,#ff006e,#ff006c,#ff006a,#ff0069,#ff0067,#ff0066,#ff0064,#ff0063,#ff0061,#ff0060,#ff005e)"></b><b class="r4" style="top:192px;background:linear-gradient(90deg,#0067ff,#0065ff,#0064ff,#0062ff,#0061ff,#005fff,#005dff,#005cff,#005aff,#0059ff,#0057ff,#0055ff,#0054ff,#0252ff,#0850ff,#0f4fff,#154dff,#1c4bff,#224aff,#2948ff,#2f46ff,#3644ff,#3c43ff,#4341ff,#4a3fff,#503dff,#573cff,#5e3aff,#6538ff,#6c36ff,#7335ff,#7933ff,#8031ff,#872fff,#8e2dff,#952cff,#9c2aff,#a428ff,#ab26ff,#b224ff,#b922ff,#c020ff,#c71eff,#cf1dff,#d61bff,#dd19ff,#e517ff,#ec15ff,#f413ff,#fb11ff,#ff0ffb,#ff0cf4,#ff0aed,#ff08e7,#ff06e1,#ff04db,#ff03d5,#ff01d0,#ff00cb,#ff00c6,#ff00c1,#ff00bd,#ff00b9,#ff00b5,#ff00b1,#ff00ad,#ff00a9,#ff00a6,#ff00a2,#ff009f,#ff009c,#ff0099,#ff0096,#ff0093,#ff0090,#ff008d,#ff008b,#ff0088,#ff0086,#ff0084,#ff0081,#ff007f,#ff007d,#ff007b,#ff0079,#ff0077,#ff0075,#ff0073,#ff0071,#ff006f,#ff006e,#ff006c,#ff006a,#ff0069,#ff0067,#ff0066,#ff0064,#ff0063,#ff0061)"></b><b class="r4" style="top:196px;background:linear-gradient(90deg,#0063ff,#0061ff,#0060ff,#005eff,#005dff,#005bff,#005aff,#0058ff,#0056ff,#0055ff,#0053ff,#0052ff,#0050ff,#014eff,#074dff,#0d4bff,#1449ff,#1a48ff,#2046ff,#2744ff,#2d43ff,#3441ff,#3a3fff,#413eff,#473cff,#4e3aff,#5438ff,#5b37ff,#6135ff,#6833ff,#6f32ff,#7630ff,#7c2eff,#832cff,#8a2aff,#9129ff,#9827ff,#9f25ff,#a623ff,#ac21ff,#b320ff,#bb1eff,#c21cff,#c91aff,#d018ff,#d716ff,#de14ff,#e512ff,#ed11ff,#f40fff,#fb0dff,#ff0bfb,#ff09f4,#ff06ee,#ff05e7,#ff03e1,#ff01dc,#ff00d6,#ff00d1,#ff00cc,#ff00c7,#ff00c2,#ff00be,#ff00ba,#ff00b6,#ff00b2,#ff00ae,#ff00aa,#ff00a7,#ff00a4,#ff00a0,#ff009d,#ff009a,#ff0097,#ff0094,#ff0092,#ff008f,#ff008c,#ff008a,#ff0087,#ff0085,#ff0083,#ff0081,#ff007e,#ff007c,#ff007a,#ff0078,#ff0076,#ff0075,#ff0073,#ff0071,#ff006f,#ff006e,#ff006c,#ff006a,#ff0069,#ff0067,#ff0066,#ff0064)"></b><b class="r4" style="top:200px;background:linear-gradient(90deg,#005fff,#005eff,#005cff,#005bff,#0059ff,#0057ff,#0056ff,#0054ff,#0053ff,#0051ff,#0050ff,#004eff,#004cff,#004bff,#0649ff,#0c48ff,#1246ff,#1844ff,#1f43ff,#2541ff,#2b3fff,#313eff,#383cff,#3e3aff,#4439ff,#4b37ff,#5135ff,#5834ff,#5e32ff,#6530ff,#6b2fff,#722dff,#782bff,#7f29ff,#8628ff,#8c26ff,#9324ff,#9a22ff,#a121ff,#a71fff,#ae1dff,#b51bff,#bc19ff,#c318ff,#ca16ff,#d114ff,#d812ff,#df10ff,#e60eff,#ed0cff,#f40bff,#fb09ff,#ff07fb,#ff05f5,#ff03ee,#ff01e8,#ff00e2,#ff00dc,#ff00d7,#ff00d2,#ff00cd,#ff00c8,#ff00c4,#ff00bf,#ff00bb,#ff00b7,#ff00b3,#ff00af,#ff00ac,#ff00a8,#ff00a5,#ff00a2,#ff009f,#ff009c,#ff0099,#ff0096,#ff0093,#ff0090,#ff008e,#ff008b,#ff0089,#ff0087,#ff0084,#ff0082,#ff0080,#ff007e,#ff007c,#ff007a,#ff0078,#ff0076,#ff0074,#ff0073,#ff0071,#ff006f,#ff006d,#ff006c,#ff006a,#ff0069,#ff0067)"></b><b class="r4" style="top:204px;background:linear-gradient(90deg,#005cff,#005aff,#0059ff,#0057ff,#0055ff,#0054ff,#0052ff,#0051ff,#004fff,#004eff,#004cff,#004bff,#0049ff,#0048ff,#0546ff,#0b44ff,#1143ff,#1741ff,#1d40ff,#233eff,#293cff,#2f3bff,#3539ff,#3c37ff,#4236ff,#4834ff,#4e33ff,#5531ff,#5b2fff,#612dff,#682cff,#6e2aff,#7528ff,#7b27ff,#8225ff,#8823ff,#8f22ff,#9520ff,#9c1eff,#a31cff,#a91bff,#b019ff,#b717ff,#bd15ff,#c413ff,#cb12ff,#d210ff,#d90eff,#e00cff,#e70aff,#ed09ff,#f407ff,#fb05ff,#ff03fb,#ff01f5,#ff00ee,#ff00e8,#ff00e3,#ff00dd,#ff00d8,#ff00d3,#ff00ce,#ff00c9,#ff00c5,#ff00c0,#ff00bc,#ff00b8,#ff00b4,#ff00b1,#ff00ad,#ff00aa,#ff00a6,#ff00a3,#ff00a0,#ff009d,#ff009a,#ff0097,#ff0095,#ff0092,#ff008f,#ff008d,#ff008a,#ff0088,#ff0086,#ff0084,#ff0082,#ff007f,#ff007d,#ff007b,#ff007a,#ff0078,#ff0076,#ff0074,#ff0072,#ff0071,#ff006f,#ff006d,#ff006c,#ff006a)"></b><b class="r4" style="top:208px;background:linear-gradient(90deg,#0058ff,#0057ff,#0055ff,#0054ff,#0052ff,#0051ff,#004fff,#004eff,#004cff,#004bff,#0049ff,#0047ff,#0046ff,#0044ff,#0443ff,#0a41ff,#0f40ff,#153eff,#1b3dff,#213bff,#2739ff,#2d38ff,#3336ff,#3935ff,#4033ff,#4631ff,#4c30ff,#522eff,#582cff,#5e2bff,#6529ff,#6b27ff,#7126ff,#7724ff,#7e22ff,#8421ff,#8b1fff,#911dff,#971cff,#9e1aff,#a418ff,#ab16ff,#b215ff,#b813ff,#bf11ff,#c50fff,#cc0eff,#d30cff,#d90aff,#e008ff,#e707ff,#ee05ff,#f503ff,#fc01ff,#ff00fc,#ff00f5,#ff00ef,#ff00e9,#ff00e3,#ff00de,#ff00d8,#ff00d3,#ff00cf,#ff00ca,#ff00c6,#ff00c1,#ff00bd,#ff00b9,#ff00b5,#ff00b2,#ff00ae,#ff00ab,#ff00a8,#ff00a4,#ff00a1,#ff009e,#ff009b,#ff0099,#ff0096,#ff0093,#ff0091,#ff008e,#ff008c,#ff008a,#ff0087,#ff0085,#ff0083,#ff0081,#ff007f,#ff007d,#ff007b,#ff0079,#ff0077,#ff0075,#ff0074,#ff0072,#ff0070,#ff006f,#ff006d)"></b><b class="r4" style="top:212px;background:linear-gradient(90deg,#0055ff,#0053ff,#0052ff,#0050ff,#004fff,#004dff,#004cff,#004aff,#0049ff,#0047ff,#0046ff,#0044ff,#0043ff,#0041ff,#0340ff,#083eff,#0e3dff,#143bff,#1a3aff,#2038ff,#2637ff,#2b35ff,#3133ff,#3732ff,#3d30ff,#432fff,#492dff,#4f2bff,#552aff,#5b28ff,#6127ff,#6825ff,#6e23ff,#7422ff,#7a20ff,#801eff,#871dff,#8d1bff,#9319ff,#9918ff,#a016ff,#a614ff,#ad13ff,#b311ff,#ba0fff,#c00dff,#c70cff,#cd0aff,#d408ff,#da06ff,#e105ff,#e803ff,#ee01ff,#f500ff,#fc00ff,#ff00fc,#ff00f5,#ff00ef,#ff00e9,#ff00e4,#ff00de,#ff00d9,#ff00d4,#ff00cf,#ff00cb,#ff00c6,#ff00c2,#ff00be,#ff00ba,#ff00b7,#ff00b3,#ff00af,#ff00ac,#ff00a9,#ff00a6,#ff00a3,#ff00a0,#ff009d,#ff009a,#ff0097,#ff0095,#ff0092,#ff0090,#ff008d,#ff008b,#ff0089,#ff0087,#ff0084,#ff0082,#ff0080,#ff007e,#ff007c,#ff007b,#ff0079,#ff0077,#ff0075,#ff0074,#ff0072,#ff0070)"></b><b class="r4" style="top:216px;background:linear-gradient(90deg,#0051ff,#0050ff,#004fff,#004dff,#004cff,#004aff,#0049ff,#0047ff,#0046ff,#0044ff,#0043ff,#0041ff,#0040ff,#003eff,#023dff,#073bff,#0d3aff,#1338ff,#1837ff,#1e35ff,#2434ff,#2a32ff,#2f31ff,#352fff,#3b2eff,#412cff,#472aff,#4d29ff,#5327ff,#5926ff,#5e24ff,#6423ff,#6a21ff,#711fff,#771eff,#7d1cff,#831aff,#8919ff,#8f17ff,#9515ff,#9b14ff,#a212ff,#a810ff,#ae0fff,#b50dff,#bb0bff,#c10aff,#c808ff,#ce06ff,#d405ff,#db03ff,#e101ff,#e800ff,#ef00ff,#f500ff,#fc00ff,#ff00fc,#ff00f5,#ff00ef,#ff00ea,#ff00e4,#ff00df,#ff00da,#ff00d5,#ff00d0,#ff00cc,#ff00c7,#ff00c3,#ff00bf,#ff00bb,#ff00b8,#ff00b4,#ff00b1,#ff00ad,#ff00aa,#ff00a7,#ff00a4,#ff00a1,#ff009e,#ff009b,#ff0099,#ff0096,#ff0093,#ff0091,#ff008f,#ff008c,#ff008a,#ff0088,#ff0086,#ff0084,#ff0082,#ff0080,#ff007e,#ff007c,#ff007a,#ff0078,#ff0077,#ff0075,#ff0073)"></b><b class="r4" style="top:220px;background:linear-gradient(90deg,#004eff,#004dff,#004cff,#004aff,#0049ff,#0047ff,#0046ff,#0044ff,#0043ff,#0041ff,#0040ff,#003fff,#003dff,#003cff,#013aff,#0639ff,#0c37ff,#1136ff,#1734ff,#1d33ff,#2231ff,#2830ff,#2e2eff,#332dff,#392bff,#3f2aff,#4428ff,#4a26ff,#5025ff,#5623ff,#5c22ff,#6120ff,#671fff,#6d1dff,#731bff,#791aff,#7f18ff,#8517ff,#8b15ff,#9113ff,#9712ff,#9d10ff,#a30fff,#aa0dff,#b00bff,#b60aff,#bc08ff,#c206ff,#c905ff,#cf03ff,#d501ff,#dc00ff,#e200ff,#e800ff,#ef00ff,#f500ff,#fc00ff,#ff00fc,#ff00f6,#ff00f0,#ff00ea,#ff00e5,#ff00df,#ff00da,#ff00d6,#ff00d1,#ff00cd,#ff00c8,#ff00c4,#ff00c0,#ff00bc,#ff00b9,#ff00b5,#ff00b2,#ff00ae,#ff00ab,#ff00a8,#ff00a5,#ff00a2,#ff009f,#ff009d,#ff009a,#ff0097,#ff0095,#ff0092,#ff0090,#ff008e,#ff008b,#ff0089,#ff0087,#ff0085,#ff0083,#ff0081,#ff007f,#ff007d,#ff007b,#ff007a,#ff0078,#ff0076)"></b><b class="r4" style="top:224px;background:linear-gradient(90deg,#004bff,#004aff,#0049ff,#0047ff,#0046ff,#0044ff,#0043ff,#0042ff,#0040ff,#003fff,#003dff,#003cff,#003aff,#0039ff,#0038ff,#0536ff,#0b35ff,#1033ff,#1632ff,#1b30ff,#212fff,#262dff,#2c2cff,#312aff,#3729ff,#3c27ff,#4226ff,#4824ff,#4d23ff,#5321ff,#5920ff,#5f1eff,#641cff,#6a1bff,#7019ff,#7618ff,#7c16ff,#8115ff,#8713ff,#8d11ff,#9310ff,#990eff,#9f0dff,#a50bff,#ab09ff,#b108ff,#b706ff,#bd04ff,#c403ff,#ca01ff,#d000ff,#d600ff,#dc00ff,#e300ff,#e900ff,#ef00ff,#f500ff,#fc00ff,#ff00fc,#ff00f6,#ff00f0,#ff00ea,#ff00e5,#ff00e0,#ff00db,#ff00d6,#ff00d2,#ff00cd,#ff00c9,#ff00c5,#ff00c1,#ff00bd,#ff00ba,#ff00b6,#ff00b3,#ff00af,#ff00ac,#ff00a9,#ff00a6,#ff00a3,#ff00a0,#ff009e,#ff009b,#ff0099,#ff0096,#ff0094,#ff0091,#ff008f,#ff008d,#ff008b,#ff0088,#ff0086,#ff0084,#ff0082,#ff0081,#ff007f,#ff007d,#ff007b,#ff0079)"></b><b class="r4" style="top:228px;background:linear-gradient(90deg,#0048ff,#0047ff,#0046ff,#0044ff,#0043ff,#0042ff,#0040ff,#003fff,#003dff,#003cff,#003bff,#0039ff,#0038ff,#0036ff,#0035ff,#0434ff,#0a32ff,#0f31ff,#142fff,#1a2eff,#1f2cff,#252bff,#2a29ff,#2f28ff,#3526ff,#3a25ff,#4023ff,#4522ff,#4b20ff,#511fff,#561dff,#5c1cff,#611aff,#6719ff,#6d17ff,#7316ff,#7814ff,#7e13ff,#8411ff,#8a10ff,#8f0eff,#950cff,#9b0bff,#a109ff,#a708ff,#ad06ff,#b304ff,#b903ff,#bf01ff,#c500ff,#cb00ff,#d100ff,#d700ff,#dd00ff,#e300ff,#e900ff,#ef00ff,#f600ff,#fc00ff,#ff00fc,#ff00f6,#ff00f0,#ff00eb,#ff00e5,#ff00e0,#ff00dc,#ff00d7,#ff00d2,#ff00ce,#ff00ca,#ff00c6,#ff00c2,#ff00be,#ff00bb,#ff00b7,#ff00b4,#ff00b1,#ff00ad,#ff00aa,#ff00a7,#ff00a4,#ff00a2,#ff009f,#ff009c,#ff009a,#ff0097,#ff0095,#ff0093,#ff0090,#ff008e,#ff008c,#ff008a,#ff0088,#ff0086,#ff0084,#ff0082,#ff0080,#ff007e,#ff007c)"></b><b class="r4" style="top:232px;background:linear-gradient(90deg,#0046ff,#0044ff,#0043ff,#0042ff,#0040ff,#003fff,#003eff,#003cff,#003bff,#0039ff,#0038ff,#0037ff,#0035ff,#0034ff,#0032ff,#0331ff,#0930ff,#0e2eff,#132dff,#182bff,#1e2aff,#2329ff,#2827ff,#2e26ff,#3324ff,#3823ff,#3e21ff,#4320ff,#491eff,#4e1dff,#541bff,#591aff,#5f18ff,#6417ff,#6a15ff,#6f14ff,#7512ff,#7b11ff,#800fff,#860eff,#8c0cff,#910bff,#9709ff,#9d07ff,#a306ff,#a804ff,#ae03ff,#b401ff,#ba00ff,#c000ff,#c600ff,#cc00ff,#d200ff,#d800ff,#de00ff,#e400ff,#ea00ff,#f000ff,#f600ff,#fc00ff,#ff00fc,#ff00f6,#ff00f0,#ff00eb,#ff00e6,#ff00e1,#ff00dc,#ff00d8,#ff00d3,#ff00cf,#ff00cb,#ff00c7,#ff00c3,#ff00bf,#ff00bc,#ff00b8,#ff00b5,#ff00b2,#ff00ae,#ff00ab,#ff00a8,#ff00a6,#ff00a3,#ff00a0,#ff009e,#ff009b,#ff0099,#ff0096,#ff0094,#ff0092,#ff008f,#ff008d,#ff008b,#ff0089,#ff0087,#ff0085,#ff0083,#ff0081,#ff007f)"></b><b class="r4" style="top:236px;background:linear-gradient(90deg,#0043ff,#0042ff,#0040ff,#003fff,#003eff,#003cff,#003bff,#003aff,#0038ff,#0037ff,#0036ff,#0034ff,#0033ff,#0032ff,#0030ff,#032fff,#082dff,#0d2cff,#122bff,#1729ff,#1c28ff,#2226ff,#2725ff,#2c23ff,#3122ff,#3721ff,#3c1fff,#411eff,#471cff,#4c1bff,#5119ff,#5718ff,#5c16ff,#6115ff,#6713ff,#6c12ff,#7210ff,#770fff,#7d0dff,#830cff,#880aff,#8e09ff,#9307ff,#9906ff,#9f04ff,#a403ff,#aa01ff,#b000ff,#b500ff,#bb00ff,#c100ff,#c700ff,#cd00ff,#d200ff,#d800ff,#de00ff,#e400ff,#ea00ff,#f000ff,#f600ff,#fc00ff,#ff00fc,#ff00f6,#ff00f1,#ff00eb,#ff00e6,#ff00e1,#ff00dd,#ff00d8,#ff00d4,#ff00d0,#ff00cc,#ff00c8,#ff00c4,#ff00c0,#ff00bd,#ff00b9,#ff00b6,#ff00b3,#ff00b0,#ff00ad,#ff00aa,#ff00a7,#ff00a4,#ff00a1,#ff009f,#ff009c,#ff009a,#ff0097,#ff0095,#ff0093,#ff0091,#ff008e,#ff008c,#ff008a,#ff0088,#ff0086,#ff0084,#ff0083)"></b><b class="r4" style="top:240px;background:linear-gradient(90deg,#0041ff,#003fff,#003eff,#003dff,#003bff,#003aff,#0039ff,#0037ff,#0036ff,#0035ff,#0033ff,#0032ff,#0031ff,#002fff,#002eff,#022cff,#072bff,#0c2aff,#1128ff,#1627ff,#1b26ff,#2024ff,#2523ff,#2a21ff,#3020ff,#351fff,#3a1dff,#3f1cff,#441aff,#4a19ff,#4f17ff,#5416ff,#5915ff,#5f13ff,#6412ff,#6a10ff,#6f0fff,#740dff,#7a0cff,#7f0aff,#8509ff,#8a07ff,#9006ff,#9504ff,#9b03ff,#a001ff,#a600ff,#ab00ff,#b100ff,#b700ff,#bc00ff,#c200ff,#c800ff,#cd00ff,#d300ff,#d900ff,#df00ff,#e500ff,#ea00ff,#f000ff,#f600ff,#fc00ff,#ff00fc,#ff00f6,#ff00f1,#ff00ec,#ff00e7,#ff00e2,#ff00dd,#ff00d9,#ff00d4,#ff00d0,#ff00cc,#ff00c8,#ff00c5,#ff00c1,#ff00be,#ff00ba,#ff00b7,#ff00b4,#ff00b1,#ff00ae,#ff00ab,#ff00a8,#ff00a5,#ff00a2,#ff00a0,#ff009d,#ff009b,#ff0098,#ff0096,#ff0094,#ff0092,#ff0090,#ff008d,#ff008b,#ff0089,#ff0088,#ff0086)"></b><b class="r4" style="top:244px;background:linear-gradient(90deg,#003eff,#003dff,#003bff,#003aff,#0039ff,#0038ff,#0036ff,#0035ff,#0034ff,#0032ff,#0031ff,#0030ff,#002eff,#002dff,#002cff,#012aff,#0629ff,#0b28ff,#1026ff,#1525ff,#1a23ff,#1f22ff,#2421ff,#291fff,#2e1eff,#331dff,#381bff,#3d1aff,#4218ff,#4717ff,#4d16ff,#5214ff,#5713ff,#5c11ff,#6110ff,#670eff,#6c0dff,#710bff,#770aff,#7c09ff,#8107ff,#8706ff,#8c04ff,#9203ff,#9701ff,#9c00ff,#a200ff,#a700ff,#ad00ff,#b200ff,#b800ff,#bd00ff,#c300ff,#c900ff,#ce00ff,#d400ff,#da00ff,#df00ff,#e500ff,#eb00ff,#f000ff,#f600ff,#fc00ff,#ff00fc,#ff00f7,#ff00f1,#ff00ec,#ff00e7,#ff00e2,#ff00de,#ff00d9,#ff00d5,#ff00d1,#ff00cd,#ff00c9,#ff00c5,#ff00c2,#ff00be,#ff00bb,#ff00b8,#ff00b5,#ff00b2,#ff00af,#ff00ac,#ff00a9,#ff00a6,#ff00a4,#ff00a1,#ff009e,#ff009c,#ff009a,#ff0097,#ff0095,#ff0093,#ff0091,#ff008f,#ff008d,#ff008b,#ff0089)"></b><b class="r4" style="top:248px;background:linear-gradient(90deg,#003cff,#003aff,#0039ff,#0038ff,#0037ff,#0035ff,#0034ff,#0033ff,#0031ff,#0030ff,#002fff,#002dff,#002cff,#002bff,#002aff,#0028ff,#0527ff,#0a26ff,#0f24ff,#1423ff,#1821ff,#1d20ff,#221fff,#271dff,#2c1cff,#311bff,#3619ff,#3b18ff,#4017ff,#4515ff,#4a14ff,#5012ff,#5511ff,#5a10ff,#5f0eff,#640dff,#690bff,#6e0aff,#7408ff,#7907ff,#7e06ff,#8304ff,#8903ff,#8e01ff,#9300ff,#9900ff,#9e00ff,#a300ff,#a900ff,#ae00ff,#b400ff,#b900ff,#bf00ff,#c400ff,#ca00ff,#cf00ff,#d500ff,#da00ff,#e000ff,#e500ff,#eb00ff,#f100ff,#f600ff,#fc00ff,#ff00fc,#ff00f7,#ff00f1,#ff00ec,#ff00e8,#ff00e3,#ff00de,#ff00da,#ff00d6,#ff00d2,#ff00ce,#ff00ca,#ff00c6,#ff00c3,#ff00bf,#ff00bc,#ff00b9,#ff00b6,#ff00b3,#ff00b0,#ff00ad,#ff00aa,#ff00a7,#ff00a5,#ff00a2,#ff00a0,#ff009d,#ff009b,#ff0098,#ff0096,#ff0094,#ff0092,#ff0090,#ff008e,#ff008c)"></b><b class="r4" style="top:252px;background:linear-gradient(90deg,#0039ff,#0038ff,#0037ff,#0036ff,#0034ff,#0033ff,#0032ff,#0030ff,#002fff,#002eff,#002dff,#002bff,#002aff,#0029ff,#0027ff,#0026ff,#0425ff,#0924ff,#0e22ff,#1221ff,#1720ff,#1c1eff,#211dff,#261cff,#2b1aff,#3019ff,#3518ff,#3916ff,#3e15ff,#4313ff,#4812ff,#4d11ff,#520fff,#570eff,#5c0dff,#620bff,#670aff,#6c08ff,#7107ff,#7605ff,#7b04ff,#8003ff,#8501ff,#8b00ff,#9000ff,#9500ff,#9a00ff,#a000ff,#a500ff,#aa00ff,#b000ff,#b500ff,#ba00ff,#c000ff,#c500ff,#ca00ff,#d000ff,#d500ff,#db00ff,#e000ff,#e600ff,#eb00ff,#f100ff,#f700ff,#fc00ff,#ff00fc,#ff00f7,#ff00f2,#ff00ed,#ff00e8,#ff00e3,#ff00df,#ff00da,#ff00d6,#ff00d2,#ff00ce,#ff00cb,#ff00c7,#ff00c4,#ff00c0,#ff00bd,#ff00ba,#ff00b6,#ff00b3,#ff00b1,#ff00ae,#ff00ab,#ff00a8,#ff00a6,#ff00a3,#ff00a1,#ff009e,#ff009c,#ff009a,#ff0097,#ff0095,#ff0093,#ff0091,#ff008f)"></b><b class="r4" style="top:256px;background:linear-gradient(90deg,#0037ff,#0036ff,#0035ff,#0033ff,#0032ff,#0031ff,#0030ff,#002eff,#002dff,#002cff,#002bff,#0029ff,#0028ff,#0027ff,#0025ff,#0024ff,#0323ff,#0822ff,#0d20ff,#111fff,#161eff,#1b1cff,#201bff,#241aff,#2918ff,#2e17ff,#3316ff,#3814ff,#3d13ff,#4112ff,#4610ff,#4b0fff,#500eff,#550cff,#5a0bff,#5f0aff,#6408ff,#6907ff,#6e05ff,#7304ff,#7803ff,#7d01ff,#8200ff,#8700ff,#8d00ff,#9200ff,#9700ff,#9c00ff,#a100ff,#a600ff,#ac00ff,#b100ff,#b600ff,#bb00ff,#c100ff,#c600ff,#cb00ff,#d100ff,#d600ff,#db00ff,#e100ff,#e600ff,#ec00ff,#f100ff,#f700ff,#fc00ff,#ff00fc,#ff00f7,#ff00f2,#ff00ed,#ff00e8,#ff00e4,#ff00df,#ff00db,#ff00d7,#ff00d3,#ff00cf,#ff00cb,#ff00c8,#ff00c4,#ff00c1,#ff00be,#ff00ba,#ff00b7,#ff00b4,#ff00b1,#ff00af,#ff00ac,#ff00a9,#ff00a7,#ff00a4,#ff00a2,#ff009f,#ff009d,#ff009b,#ff0098,#ff0096,#ff0094,#ff0092)"></b><b class="r4" style="top:260px;background:linear-gradient(90deg,#0035ff,#0034ff,#0032ff,#0031ff,#0030ff,#002fff,#002eff,#002cff,#002bff,#002aff,#0029ff,#0027ff,#0026ff,#0025ff,#0024ff,#0022ff,#0221ff,#0720ff,#0c1eff,#101dff,#151cff,#1a1bff,#1e19ff,#2318ff,#2817ff,#2c15ff,#3114ff,#3613ff,#3b11ff,#4010ff,#440fff,#490dff,#4e0cff,#530bff,#5809ff,#5d08ff,#6207ff,#6605ff,#6b04ff,#7003ff,#7501ff,#7a00ff,#7f00ff,#8400ff,#8900ff,#8e00ff,#9300ff,#9800ff,#9e00ff,#a300ff,#a800ff,#ad00ff,#b200ff,#b700ff,#bc00ff,#c200ff,#c700ff,#cc00ff,#d100ff,#d700ff,#dc00ff,#e100ff,#e700ff,#ec00ff,#f100ff,#f700ff,#fc00ff,#ff00fc,#ff00f7,#ff00f2,#ff00ed,#ff00e9,#ff00e4,#ff00e0,#ff00dc,#ff00d7,#ff00d4,#ff00d0,#ff00cc,#ff00c9,#ff00c5,#ff00c2,#ff00be,#ff00bb,#ff00b8,#ff00b5,#ff00b2,#ff00b0,#ff00ad,#ff00aa,#ff00a8,#ff00a5,#ff00a3,#ff00a0,#ff009e,#ff009c,#ff009a,#ff0097,#ff0095)"></b><b class="r4" style="top:264px;background:linear-gradient(90deg,#0033ff,#0032ff,#0030ff,#002fff,#002eff,#002dff,#002cff,#002aff,#0029ff,#0028ff,#0027ff,#0025ff,#0024ff,#0023ff,#0022ff,#0020ff,#021fff,#061eff,#0b1dff,#0f1bff,#141aff,#1919ff,#1d18ff,#2216ff,#2615ff,#2b14ff,#3012ff,#3411ff,#3910ff,#3e0fff,#420dff,#470cff,#4c0bff,#5109ff,#5508ff,#5a07ff,#5f05ff,#6404ff,#6903ff,#6e01ff,#7300ff,#7700ff,#7c00ff,#8100ff,#8600ff,#8b00ff,#9000ff,#9500ff,#9a00ff,#9f00ff,#a400ff,#a900ff,#ae00ff,#b300ff,#b800ff,#be00ff,#c300ff,#c800ff,#cd00ff,#d200ff,#d700ff,#dd00ff,#e200ff,#e700ff,#ec00ff,#f200ff,#f700ff,#fc00ff,#ff00fc,#ff00f7,#ff00f2,#ff00ee,#ff00e9,#ff00e4,#ff00e0,#ff00dc,#ff00d8,#ff00d4,#ff00d0,#ff00cd,#ff00c9,#ff00c6,#ff00c3,#ff00bf,#ff00bc,#ff00b9,#ff00b6,#ff00b3,#ff00b1,#ff00ae,#ff00ab,#ff00a9,#ff00a6,#ff00a4,#ff00a1,#ff009f,#ff009d,#ff009b,#ff0098)"></b><b class="r4" style="top:268px;background:linear-gradient(90deg,#0031ff,#0030ff,#002eff,#002dff,#002cff,#002bff,#002aff,#0028ff,#0027ff,#0026ff,#0025ff,#0024ff,#0022ff,#0021ff,#0020ff,#001fff,#011dff,#051cff,#0a1bff,#0e1aff,#1318ff,#1717ff,#1c16ff,#2015ff,#2513ff,#2a12ff,#2e11ff,#3310ff,#370eff,#3c0dff,#410cff,#450aff,#4a09ff,#4f08ff,#5307ff,#5805ff,#5d04ff,#6203ff,#6601ff,#6b00ff,#7000ff,#7500ff,#7900ff,#7e00ff,#8300ff,#8800ff,#8d00ff,#9200ff,#9700ff,#9c00ff,#a100ff,#a600ff,#aa00ff,#af00ff,#b400ff,#ba00ff,#bf00ff,#c400ff,#c900ff,#ce00ff,#d300ff,#d800ff,#dd00ff,#e200ff,#e700ff,#ed00ff,#f200ff,#f700ff,#fc00ff,#ff00fc,#ff00f7,#ff00f3,#ff00ee,#ff00e9,#ff00e5,#ff00e1,#ff00dd,#ff00d9,#ff00d5,#ff00d1,#ff00cd,#ff00ca,#ff00c7,#ff00c3,#ff00c0,#ff00bd,#ff00ba,#ff00b7,#ff00b4,#ff00b1,#ff00af,#ff00ac,#ff00aa,#ff00a7,#ff00a5,#ff00a2,#ff00a0,#ff009e,#ff009c)"></b><b class="r4" style="top:272px;background:linear-gradient(90deg,#002fff,#002eff,#002dff,#002bff,#002aff,#0029ff,#0028ff,#0027ff,#0025ff,#0024ff,#0023ff,#0022ff,#0021ff,#001fff,#001eff,#001dff,#001cff,#051bff,#0919ff,#0d18ff,#1217ff,#1616ff,#1b14ff,#1f13ff,#2412ff,#2811ff,#2d0fff,#310eff,#360dff,#3a0cff,#3f0aff,#4309ff,#4808ff,#4d06ff,#5105ff,#5604ff,#5b03ff,#5f01ff,#6400ff,#6900ff,#6d00ff,#7200ff,#7700ff,#7b00ff,#8000ff,#8500ff,#8a00ff,#8f00ff,#9300ff,#9800ff,#9d00ff,#a200ff,#a700ff,#ac00ff,#b100ff,#b600ff,#bb00ff,#c000ff,#c500ff,#c900ff,#cf00ff,#d400ff,#d900ff,#de00ff,#e300ff,#e800ff,#ed00ff,#f200ff,#f700ff,#fc00ff,#ff00fd,#ff00f8,#ff00f3,#ff00ee,#ff00ea,#ff00e5,#ff00e1,#ff00dd,#ff00d9,#ff00d5,#ff00d2,#ff00ce,#ff00cb,#ff00c7,#ff00c4,#ff00c1,#ff00be,#ff00bb,#ff00b8,#ff00b5,#ff00b2,#ff00b0,#ff00ad,#ff00ab,#ff00a8,#ff00a6,#ff00a3,#ff00a1,#ff009f)"></b><b class="r4" style="top:276px;background:linear-gradient(90deg,#002dff,#002cff,#002bff,#0029ff,#0028ff,#0027ff,#0026ff,#0025ff,#0024ff,#0022ff,#0021ff,#0020ff,#001fff,#001eff,#001dff,#001bff,#001aff,#0419ff,#0818ff,#0d16ff,#1115ff,#1514ff,#1a13ff,#1e12ff,#2210ff,#270fff,#2b0eff,#300dff,#340bff,#390aff,#3d09ff,#4208ff,#4606ff,#4b05ff,#4f04ff,#5403ff,#5801ff,#5d00ff,#6200ff,#6600ff,#6b00ff,#6f00ff,#7400ff,#7900ff,#7d00ff,#8200ff,#8700ff,#8c00ff,#9000ff,#9500ff,#9a00ff,#9f00ff,#a300ff,#a800ff,#ad00ff,#b200ff,#b700ff,#bc00ff,#c000ff,#c500ff,#ca00ff,#cf00ff,#d400ff,#d900ff,#de00ff,#e300ff,#e800ff,#ed00ff,#f200ff,#f700ff,#fc00ff,#ff00fd,#ff00f8,#ff00f3,#ff00ee,#ff00ea,#ff00e6,#ff00e1,#ff00dd,#ff00da,#ff00d6,#ff00d2,#ff00cf,#ff00cb,#ff00c8,#ff00c5,#ff00c2,#ff00bf,#ff00bc,#ff00b9,#ff00b6,#ff00b3,#ff00b1,#ff00ae,#ff00ab,#ff00a9,#ff00a7,#ff00a4,#ff00a2)"></b><b class="r4" style="top:280px;background:linear-gradient(90deg,#002bff,#002aff,#0029ff,#0028ff,#0027ff,#0025ff,#0024ff,#0023ff,#0022ff,#0021ff,#0020ff,#001eff,#001dff,#001cff,#001bff,#001aff,#0019ff,#0317ff,#0716ff,#0c15ff,#1014ff,#1413ff,#1911ff,#1d10ff,#210fff,#260eff,#2a0cff,#2e0bff,#330aff,#3709ff,#3b08ff,#4006ff,#4405ff,#4904ff,#4d03ff,#5201ff,#5600ff,#5b00ff,#5f00ff,#6400ff,#6800ff,#6d00ff,#7100ff,#7600ff,#7b00ff,#7f00ff,#8400ff,#8900ff,#8d00ff,#9200ff,#9700ff,#9b00ff,#a000ff,#a500ff,#a900ff,#ae00ff,#b300ff,#b800ff,#bd00ff,#c100ff,#c600ff,#cb00ff,#d000ff,#d500ff,#da00ff,#df00ff,#e400ff,#e800ff,#ed00ff,#f200ff,#f700ff,#fc00ff,#ff00fd,#ff00f8,#ff00f3,#ff00ef,#ff00ea,#ff00e6,#ff00e2,#ff00de,#ff00da,#ff00d6,#ff00d3,#ff00cf,#ff00cc,#ff00c9,#ff00c5,#ff00c2,#ff00bf,#ff00bc,#ff00ba,#ff00b7,#ff00b4,#ff00b1,#ff00af,#ff00ac,#ff00aa,#ff00a8,#ff00a5)"></b><b class="r4" style="top:284px;background:linear-gradient(90deg,#0029ff,#0028ff,#0027ff,#0026ff,#0025ff,#0024ff,#0023ff,#0021ff,#0020ff,#001fff,#001eff,#001dff,#001cff,#001aff,#0019ff,#0018ff,#0017ff,#0216ff,#0715ff,#0b13ff,#0f12ff,#1311ff,#1710ff,#1c0fff,#200dff,#240cff,#290bff,#2d0aff,#3109ff,#3607ff,#3a06ff,#3e05ff,#4304ff,#4703ff,#4b01ff,#5000ff,#5400ff,#5900ff,#5d00ff,#6200ff,#6600ff,#6a00ff,#6f00ff,#7400ff,#7800ff,#7d00ff,#8100ff,#8600ff,#8a00ff,#8f00ff,#9300ff,#9800ff,#9d00ff,#a100ff,#a600ff,#ab00ff,#af00ff,#b400ff,#b900ff,#be00ff,#c200ff,#c700ff,#cc00ff,#d100ff,#d500ff,#da00ff,#df00ff,#e400ff,#e900ff,#ee00ff,#f300ff,#f800ff,#fc00ff,#ff00fd,#ff00f8,#ff00f3,#ff00ef,#ff00ea,#ff00e6,#ff00e2,#ff00de,#ff00db,#ff00d7,#ff00d3,#ff00d0,#ff00cd,#ff00c9,#ff00c6,#ff00c3,#ff00c0,#ff00bd,#ff00ba,#ff00b8,#ff00b5,#ff00b2,#ff00b0,#ff00ad,#ff00ab,#ff00a8)"></b><b class="r4" style="top:288px;background:linear-gradient(90deg,#0028ff,#0026ff,#0025ff,#0024ff,#0023ff,#0022ff,#0021ff,#0020ff,#001fff,#001dff,#001cff,#001bff,#001aff,#0019ff,#0018ff,#0017ff,#0015ff,#0214ff,#0613ff,#0a12ff,#0e11ff,#1210ff,#160eff,#1b0dff,#1f0cff,#230bff,#270aff,#2c09ff,#3007ff,#3406ff,#3805ff,#3d04ff,#4103ff,#4501ff,#4a00ff,#4e00ff,#5200ff,#5700ff,#5b00ff,#5f00ff,#6400ff,#6800ff,#6d00ff,#7100ff,#7500ff,#7a00ff,#7e00ff,#8300ff,#8700ff,#8c00ff,#9000ff,#9500ff,#9a00ff,#9e00ff,#a300ff,#a700ff,#ac00ff,#b100ff,#b500ff,#ba00ff,#be00ff,#c300ff,#c800ff,#cd00ff,#d100ff,#d600ff,#db00ff,#e000ff,#e400ff,#e900ff,#ee00ff,#f300ff,#f800ff,#fc00ff,#ff00fd,#ff00f8,#ff00f3,#ff00ef,#ff00eb,#ff00e7,#ff00e3,#ff00df,#ff00db,#ff00d7,#ff00d4,#ff00d0,#ff00cd,#ff00ca,#ff00c7,#ff00c4,#ff00c1,#ff00be,#ff00bb,#ff00b8,#ff00b6,#ff00b3,#ff00b1,#ff00ae,#ff00ac)"></b><b class="r4" style="top:292px;background:linear-gradient(90deg,#0026ff,#0025ff,#0024ff,#0023ff,#0021ff,#0020ff,#001fff,#001eff,#001dff,#001cff,#001bff,#001aff,#0019ff,#0017ff,#0016ff,#0015ff,#0014ff,#0113ff,#0512ff,#0911ff,#0d0fff,#110eff,#150dff,#1a0cff,#1e0bff,#220aff,#2608ff,#2a07ff,#2e06ff,#3305ff,#3704ff,#3b02ff,#3f01ff,#4300ff,#4800ff,#4c00ff,#5000ff,#5500ff,#5900ff,#5d00ff,#6200ff,#6600ff,#6a00ff,#6f00ff,#7300ff,#7700ff,#7c00ff,#8000ff,#8500ff,#8900ff,#8e00ff,#9200ff,#9600ff,#9b00ff,#9f00ff,#a400ff,#a900ff,#ad00ff,#b200ff,#b600ff,#bb00ff,#bf00ff,#c400ff,#c900ff,#cd00ff,#d200ff,#d700ff,#db00ff,#e000ff,#e500ff,#e900ff,#ee00ff,#f300ff,#f800ff,#fc00ff,#ff00fd,#ff00f8,#ff00f4,#ff00ef,#ff00eb,#ff00e7,#ff00e3,#ff00df,#ff00dc,#ff00d8,#ff00d4,#ff00d1,#ff00ce,#ff00cb,#ff00c7,#ff00c4,#ff00c1,#ff00bf,#ff00bc,#ff00b9,#ff00b6,#ff00b4,#ff00b1,#ff00af)"></b><b class="r4" style="top:296px;background:linear-gradient(90deg,#0024ff,#0023ff,#0022ff,#0021ff,#0020ff,#001fff,#001eff,#001dff,#001bff,#001aff,#0019ff,#0018ff,#0017ff,#0016ff,#0015ff,#0014ff,#0013ff,#0011ff,#0410ff,#080fff,#0c0eff,#100dff,#140cff,#190bff,#1d09ff,#2108ff,#2507ff,#2906ff,#2d05ff,#3104ff,#3502ff,#3901ff,#3e00ff,#4200ff,#4600ff,#4a00ff,#4e00ff,#5300ff,#5700ff,#5b00ff,#5f00ff,#6400ff,#6800ff,#6c00ff,#7100ff,#7500ff,#7900ff,#7e00ff,#8200ff,#8600ff,#8b00ff,#8f00ff,#9300ff,#9800ff,#9c00ff,#a100ff,#a500ff,#aa00ff,#ae00ff,#b300ff,#b700ff,#bc00ff,#c000ff,#c500ff,#c900ff,#ce00ff,#d300ff,#d700ff,#dc00ff,#e000ff,#e500ff,#ea00ff,#ee00ff,#f300ff,#f800ff,#fd00ff,#ff00fd,#ff00f8,#ff00f4,#ff00ef,#ff00eb,#ff00e7,#ff00e3,#ff00e0,#ff00dc,#ff00d8,#ff00d5,#ff00d2,#ff00ce,#ff00cb,#ff00c8,#ff00c5,#ff00c2,#ff00bf,#ff00bd,#ff00ba,#ff00b7,#ff00b5,#ff00b2)"></b><b class="r4" style="top:300px;background:linear-gradient(90deg,#0023ff,#0022ff,#0020ff,#001fff,#001eff,#001dff,#001cff,#001bff,#001aff,#0019ff,#0018ff,#0017ff,#0016ff,#0015ff,#0013ff,#0012ff,#0011ff,#0010ff,#040fff,#080eff,#0c0dff,#100cff,#140aff,#1809ff,#1c08ff,#2007ff,#2406ff,#2805ff,#2c04ff,#3002ff,#3401ff,#3800ff,#3c00ff,#4000ff,#4400ff,#4800ff,#4d00ff,#5100ff,#5500ff,#5900ff,#5d00ff,#6200ff,#6600ff,#6a00ff,#6e00ff,#7200ff,#7700ff,#7b00ff,#7f00ff,#8400ff,#8800ff,#8c00ff,#9100ff,#9500ff,#9900ff,#9e00ff,#a200ff,#a600ff,#ab00ff,#af00ff,#b400ff,#b800ff,#bd00ff,#c100ff,#c600ff,#ca00ff,#cf00ff,#d300ff,#d800ff,#dc00ff,#e100ff,#e500ff,#ea00ff,#ef00ff,#f300ff,#f800ff,#fd00ff,#ff00fd,#ff00f8,#ff00f4,#ff00f0,#ff00ec,#ff00e8,#ff00e4,#ff00e0,#ff00dc,#ff00d9,#ff00d5,#ff00d2,#ff00cf,#ff00cc,#ff00c9,#ff00c6,#ff00c3,#ff00c0,#ff00bd,#ff00bb,#ff00b8,#ff00b5)"></b><b class="r4" style="top:304px;background:linear-gradient(90deg,#0021ff,#0020ff,#001fff,#001eff,#001dff,#001cff,#001bff,#001aff,#0019ff,#0017ff,#0016ff,#0015ff,#0014ff,#0013ff,#0012ff,#0011ff,#0010ff,#000fff,#030eff,#070dff,#0b0bff,#0f0aff,#1309ff,#1708ff,#1b07ff,#1f06ff,#2205ff,#2604ff,#2a02ff,#2e01ff,#3300ff,#3700ff,#3b00ff,#3f00ff,#4300ff,#4700ff,#4b00ff,#4f00ff,#5300ff,#5700ff,#5b00ff,#5f00ff,#6400ff,#6800ff,#6c00ff,#7000ff,#7400ff,#7900ff,#7d00ff,#8100ff,#8500ff,#8a00ff,#8e00ff,#9200ff,#9600ff,#9b00ff,#9f00ff,#a300ff,#a800ff,#ac00ff,#b000ff,#b500ff,#b900ff,#be00ff,#c200ff,#c600ff,#cb00ff,#cf00ff,#d400ff,#d800ff,#dd00ff,#e100ff,#e600ff,#ea00ff,#ef00ff,#f300ff,#f800ff,#fd00ff,#ff00fd,#ff00f8,#ff00f4,#ff00f0,#ff00ec,#ff00e8,#ff00e4,#ff00e0,#ff00dd,#ff00d9,#ff00d6,#ff00d3,#ff00cf,#ff00cc,#ff00c9,#ff00c6,#ff00c4,#ff00c1,#ff00be,#ff00bb,#ff00b9)"></b><b class="r4" style="top:308px;background:linear-gradient(90deg,#0020ff,#001fff,#001dff,#001cff,#001bff,#001aff,#0019ff,#0018ff,#0017ff,#0016ff,#0015ff,#0014ff,#0013ff,#0012ff,#0011ff,#0010ff,#000fff,#000dff,#020cff,#060bff,#0a0aff,#0e09ff,#1208ff,#1607ff,#1a06ff,#1d05ff,#2104ff,#2502ff,#2901ff,#2d00ff,#3100ff,#3500ff,#3900ff,#3d00ff,#4100ff,#4500ff,#4900ff,#4d00ff,#5100ff,#5500ff,#5900ff,#5d00ff,#6200ff,#6600ff,#6a00ff,#6e00ff,#7200ff,#7600ff,#7a00ff,#7f00ff,#8300ff,#8700ff,#8b00ff,#8f00ff,#9400ff,#9800ff,#9c00ff,#a000ff,#a500ff,#a900ff,#ad00ff,#b100ff,#b600ff,#ba00ff,#be00ff,#c300ff,#c700ff,#cc00ff,#d000ff,#d400ff,#d900ff,#dd00ff,#e200ff,#e600ff,#eb00ff,#ef00ff,#f400ff,#f800ff,#fd00ff,#ff00fd,#ff00f8,#ff00f4,#ff00f0,#ff00ec,#ff00e8,#ff00e4,#ff00e1,#ff00dd,#ff00da,#ff00d6,#ff00d3,#ff00d0,#ff00cd,#ff00ca,#ff00c7,#ff00c4,#ff00c1,#ff00bf,#ff00bc)"></b><b class="r4" style="top:312px;background:linear-gradient(90deg,#001eff,#001dff,#001cff,#001bff,#001aff,#0019ff,#0018ff,#0017ff,#0016ff,#0015ff,#0014ff,#0013ff,#0012ff,#0011ff,#000fff,#000eff,#000dff,#000cff,#020bff,#050aff,#0909ff,#0d08ff,#1107ff,#1506ff,#1905ff,#1c04ff,#2002ff,#2401ff,#2800ff,#2c00ff,#3000ff,#3400ff,#3800ff,#3c00ff,#4000ff,#4400ff,#4800ff,#4b00ff,#4f00ff,#5300ff,#5700ff,#5c00ff,#6000ff,#6400ff,#6800ff,#6c00ff,#7000ff,#7400ff,#7800ff,#7c00ff,#8000ff,#8400ff,#8800ff,#8d00ff,#9100ff,#9500ff,#9900ff,#9d00ff,#a200ff,#a600ff,#aa00ff,#ae00ff,#b200ff,#b700ff,#bb00ff,#bf00ff,#c400ff,#c800ff,#cc00ff,#d100ff,#d500ff,#d900ff,#de00ff,#e200ff,#e600ff,#eb00ff,#ef00ff,#f400ff,#f800ff,#fd00ff,#ff00fd,#ff00f9,#ff00f4,#ff00f0,#ff00ec,#ff00e9,#ff00e5,#ff00e1,#ff00de,#ff00da,#ff00d7,#ff00d4,#ff00d1,#ff00cd,#ff00cb,#ff00c8,#ff00c5,#ff00c2,#ff00bf)"></b><b class="r4" style="top:316px;background:linear-gradient(90deg,#001dff,#001cff,#001bff,#001aff,#0019ff,#0018ff,#0017ff,#0015ff,#0014ff,#0013ff,#0012ff,#0011ff,#0010ff,#000fff,#000eff,#000dff,#000cff,#000bff,#010aff,#0509ff,#0908ff,#0c07ff,#1006ff,#1405ff,#1804ff,#1b02ff,#1f01ff,#2300ff,#2700ff,#2b00ff,#2f00ff,#3200ff,#3600ff,#3a00ff,#3e00ff,#4200ff,#4600ff,#4a00ff,#4e00ff,#5200ff,#5600ff,#5a00ff,#5e00ff,#6200ff,#6600ff,#6a00ff,#6e00ff,#7200ff,#7600ff,#7a00ff,#7e00ff,#8200ff,#8600ff,#8a00ff,#8e00ff,#9200ff,#9600ff,#9a00ff,#9f00ff,#a300ff,#a700ff,#ab00ff,#af00ff,#b300ff,#b800ff,#bc00ff,#c000ff,#c400ff,#c900ff,#cd00ff,#d100ff,#d500ff,#da00ff,#de00ff,#e200ff,#e700ff,#eb00ff,#f000ff,#f400ff,#f800ff,#fd00ff,#ff00fd,#ff00f9,#ff00f5,#ff00f0,#ff00ed,#ff00e9,#ff00e5,#ff00e2,#ff00de,#ff00db,#ff00d7,#ff00d4,#ff00d1,#ff00ce,#ff00cb,#ff00c8,#ff00c5,#ff00c3)"></b><b class="r4" style="top:320px;background:linear-gradient(90deg,#001bff,#001aff,#0019ff,#0018ff,#0017ff,#0016ff,#0015ff,#0014ff,#0013ff,#0012ff,#0011ff,#0010ff,#000fff,#000eff,#000dff,#000cff,#000bff,#000aff,#0009ff,#0408ff,#0807ff,#0c06ff,#0f05ff,#1303ff,#1702ff,#1a01ff,#1e00ff,#2200ff,#2600ff,#2a00ff,#2d00ff,#3100ff,#3500ff,#3900ff,#3d00ff,#4000ff,#4400ff,#4800ff,#4c00ff,#5000ff,#5400ff,#5800ff,#5c00ff,#6000ff,#6400ff,#6700ff,#6b00ff,#6f00ff,#7300ff,#7700ff,#7b00ff,#7f00ff,#8300ff,#8700ff,#8b00ff,#8f00ff,#9400ff,#9800ff,#9c00ff,#a000ff,#a400ff,#a800ff,#ac00ff,#b000ff,#b400ff,#b900ff,#bd00ff,#c100ff,#c500ff,#c900ff,#ce00ff,#d200ff,#d600ff,#da00ff,#df00ff,#e300ff,#e700ff,#eb00ff,#f000ff,#f400ff,#f800ff,#fd00ff,#ff00fd,#ff00f9,#ff00f5,#ff00f1,#ff00ed,#ff00e9,#ff00e5,#ff00e2,#ff00de,#ff00db,#ff00d8,#ff00d5,#ff00d2,#ff00cf,#ff00cc,#ff00c9,#ff00c6)"></b><b class="r4" style="top:324px;background:linear-gradient(90deg,#001aff,#0019ff,#0018ff,#0017ff,#0016ff,#0015ff,#0014ff,#0013ff,#0012ff,#0011ff,#0010ff,#000fff,#000eff,#000dff,#000cff,#000bff,#000aff,#0009ff,#0008ff,#0307ff,#0706ff,#0b04ff,#0e03ff,#1202ff,#1601ff,#1a00ff,#1d00ff,#2100ff,#2500ff,#2800ff,#2c00ff,#3000ff,#3400ff,#3700ff,#3b00ff,#3f00ff,#4300ff,#4700ff,#4a00ff,#4e00ff,#5200ff,#5600ff,#5a00ff,#5e00ff,#6200ff,#6500ff,#6900ff,#6d00ff,#7100ff,#7500ff,#7900ff,#7d00ff,#8100ff,#8500ff,#8900ff,#8d00ff,#9100ff,#9500ff,#9900ff,#9d00ff,#a100ff,#a500ff,#a900ff,#ad00ff,#b100ff,#b500ff,#b900ff,#be00ff,#c200ff,#c600ff,#ca00ff,#ce00ff,#d200ff,#d700ff,#db00ff,#df00ff,#e300ff,#e700ff,#ec00ff,#f000ff,#f400ff,#f800ff,#fd00ff,#ff00fd,#ff00f9,#ff00f5,#ff00f1,#ff00ed,#ff00e9,#ff00e6,#ff00e2,#ff00df,#ff00dc,#ff00d8,#ff00d5,#ff00d2,#ff00cf,#ff00cc,#ff00c9)"></b><b class="r4" style="top:328px;background:linear-gradient(90deg,#0019ff,#0018ff,#0017ff,#0016ff,#0015ff,#0014ff,#0013ff,#0012ff,#0011ff,#0010ff,#000fff,#000eff,#000dff,#000cff,#000bff,#000aff,#0009ff,#0008ff,#0007ff,#0305ff,#0604ff,#0a03ff,#0e02ff,#1101ff,#1500ff,#1900ff,#1c00ff,#2000ff,#2400ff,#2700ff,#2b00ff,#2f00ff,#3200ff,#3600ff,#3a00ff,#3e00ff,#4100ff,#4500ff,#4900ff,#4d00ff,#5000ff,#5400ff,#5800ff,#5c00ff,#6000ff,#6300ff,#6700ff,#6b00ff,#6f00ff,#7300ff,#7700ff,#7b00ff,#7f00ff,#8300ff,#8600ff,#8a00ff,#8e00ff,#9200ff,#9600ff,#9a00ff,#9e00ff,#a200ff,#a600ff,#aa00ff,#ae00ff,#b200ff,#b600ff,#ba00ff,#be00ff,#c300ff,#c700ff,#cb00ff,#cf00ff,#d300ff,#d700ff,#db00ff,#df00ff,#e400ff,#e800ff,#ec00ff,#f000ff,#f400ff,#f900ff,#fd00ff,#ff00fd,#ff00f9,#ff00f5,#ff00f1,#ff00ed,#ff00ea,#ff00e6,#ff00e3,#ff00df,#ff00dc,#ff00d9,#ff00d6,#ff00d3,#ff00d0,#ff00cd)"></b><b class="r4" style="top:332px;background:linear-gradient(90deg,#0017ff,#0016ff,#0015ff,#0014ff,#0013ff,#0012ff,#0011ff,#0010ff,#000fff,#000eff,#000dff,#000cff,#000bff,#000aff,#0009ff,#0008ff,#0007ff,#0006ff,#0005ff,#0204ff,#0603ff,#0902ff,#0d01ff,#1100ff,#1400ff,#1800ff,#1b00ff,#1f00ff,#2300ff,#2600ff,#2a00ff,#2d00ff,#3100ff,#3500ff,#3800ff,#3c00ff,#4000ff,#4400ff,#4700ff,#4b00ff,#4f00ff,#5200ff,#5600ff,#5a00ff,#5e00ff,#6200ff,#6500ff,#6900ff,#6d00ff,#7100ff,#7500ff,#7800ff,#7c00ff,#8000ff,#8400ff,#8800ff,#8c00ff,#9000ff,#9400ff,#9800ff,#9b00ff,#9f00ff,#a300ff,#a700ff,#ab00ff,#af00ff,#b300ff,#b700ff,#bb00ff,#bf00ff,#c300ff,#c700ff,#cb00ff,#cf00ff,#d300ff,#d800ff,#dc00ff,#e000ff,#e400ff,#e800ff,#ec00ff,#f000ff,#f400ff,#f900ff,#fd00ff,#ff00fd,#ff00f9,#ff00f5,#ff00f1,#ff00ed,#ff00ea,#ff00e6,#ff00e3,#ff00e0,#ff00dc,#ff00d9,#ff00d6,#ff00d3,#ff00d0)"></b><b class="r4" style="top:336px;background:linear-gradient(90deg,#0016ff,#0015ff,#0014ff,#0013ff,#0012ff,#0011ff,#0010ff,#000fff,#000eff,#000dff,#000cff,#000bff,#000aff,#0009ff,#0008ff,#0007ff,#0006ff,#0005ff,#0004ff,#0203ff,#0502ff,#0901ff,#0c00ff,#1000ff,#1300ff,#1700ff,#1a00ff,#1e00ff,#2200ff,#2500ff,#2900ff,#2c00ff,#3000ff,#3400ff,#3700ff,#3b00ff,#3e00ff,#4200ff,#4600ff,#4900ff,#4d00ff,#5100ff,#5500ff,#5800ff,#5c00ff,#6000ff,#6300ff,#6700ff,#6b00ff,#6f00ff,#7200ff,#7600ff,#7a00ff,#7e00ff,#8200ff,#8500ff,#8900ff,#8d00ff,#9100ff,#9500ff,#9900ff,#9d00ff,#a100ff,#a400ff,#a800ff,#ac00ff,#b000ff,#b400ff,#b800ff,#bc00ff,#c000ff,#c400ff,#c800ff,#cc00ff,#d000ff,#d400ff,#d800ff,#dc00ff,#e000ff,#e400ff,#e800ff,#ec00ff,#f000ff,#f500ff,#f900ff,#fd00ff,#ff00fd,#ff00f9,#ff00f5,#ff00f1,#ff00ee,#ff00ea,#ff00e7,#ff00e3,#ff00e0,#ff00dd,#ff00da,#ff00d6,#ff00d4)"></b><b class="r4" style="top:340px;background:linear-gradient(90deg,#0015ff,#0014ff,#0013ff,#0012ff,#0011ff,#0010ff,#000fff,#000eff,#000dff,#000cff,#000bff,#000aff,#0009ff,#0008ff,#0007ff,#0006ff,#0005ff,#0004ff,#0003ff,#0102ff,#0501ff,#0800ff,#0b00ff,#0f00ff,#1200ff,#1600ff,#1900ff,#1d00ff,#2100ff,#2400ff,#2800ff,#2b00ff,#2f00ff,#3200ff,#3600ff,#3900ff,#3d00ff,#4100ff,#4400ff,#4800ff,#4c00ff,#4f00ff,#5300ff,#5700ff,#5a00ff,#5e00ff,#6200ff,#6500ff,#6900ff,#6d00ff,#7000ff,#7400ff,#7800ff,#7c00ff,#7f00ff,#8300ff,#8700ff,#8b00ff,#8f00ff,#9200ff,#9600ff,#9a00ff,#9e00ff,#a200ff,#a600ff,#a900ff,#ad00ff,#b100ff,#b500ff,#b900ff,#bd00ff,#c100ff,#c500ff,#c900ff,#cd00ff,#d100ff,#d500ff,#d900ff,#dd00ff,#e100ff,#e500ff,#e900ff,#ed00ff,#f100ff,#f500ff,#f900ff,#fd00ff,#ff00fd,#ff00f9,#ff00f5,#ff00f2,#ff00ee,#ff00ea,#ff00e7,#ff00e4,#ff00e0,#ff00dd,#ff00da,#ff00d7)"></b><b class="r4" style="top:344px;background:linear-gradient(90deg,#0014ff,#0013ff,#0012ff,#0011ff,#0010ff,#000fff,#000eff,#000dff,#000cff,#000bff,#000aff,#0009ff,#0008ff,#0007ff,#0006ff,#0005ff,#0004ff,#0003ff,#0002ff,#0101ff,#0400ff,#0700ff,#0b00ff,#0e00ff,#1200ff,#1500ff,#1900ff,#1c00ff,#2000ff,#2300ff,#2700ff,#2a00ff,#2e00ff,#3100ff,#3500ff,#3800ff,#3c00ff,#3f00ff,#4300ff,#4600ff,#4a00ff,#4e00ff,#5100ff,#5500ff,#5800ff,#5c00ff,#6000ff,#6300ff,#6700ff,#6b00ff,#6e00ff,#7200ff,#7600ff,#7900ff,#7d00ff,#8100ff,#8500ff,#8800ff,#8c00ff,#9000ff,#9400ff,#9700ff,#9b00ff,#9f00ff,#a300ff,#a700ff,#aa00ff,#ae00ff,#b200ff,#b600ff,#ba00ff,#be00ff,#c200ff,#c500ff,#c900ff,#cd00ff,#d100ff,#d500ff,#d900ff,#dd00ff,#e100ff,#e500ff,#e900ff,#ed00ff,#f100ff,#f500ff,#f900ff,#fd00ff,#ff00fd,#ff00f9,#ff00f5,#ff00f2,#ff00ee,#ff00eb,#ff00e7,#ff00e4,#ff00e1,#ff00dd,#ff00da)"></b><b class="r4" style="top:348px;background:linear-gradient(90deg,#0012ff,#0012ff,#0011ff,#0010ff,#000fff,#000eff,#000dff,#000cff,#000bff,#000aff,#0009ff,#0008ff,#0007ff,#0006ff,#0005ff,#0004ff,#0003ff,#0002ff,#0001ff,#0000ff,#0300ff,#0700ff,#0a00ff,#0e00ff,#1100ff,#1400ff,#1800ff,#1b00ff,#1f00ff,#2200ff,#2600ff,#2900ff,#2c00ff,#3000ff,#3300ff,#3700ff,#3a00ff,#3e00ff,#4100ff,#4500ff,#4900ff,#4c00ff,#5000ff,#5300ff,#5700ff,#5a00ff,#5e00ff,#6200ff,#6500ff,#6900ff,#6c00ff,#7000ff,#7400ff,#7700ff,#7b00ff,#7f00ff,#8200ff,#8600ff,#8a00ff,#8d00ff,#9100ff,#9500ff,#9900ff,#9c00ff,#a000ff,#a400ff,#a800ff,#ab00ff,#af00ff,#b300ff,#b700ff,#bb00ff,#be00ff,#c200ff,#c600ff,#ca00ff,#ce00ff,#d200ff,#d600ff,#d900ff,#dd00ff,#e100ff,#e500ff,#e900ff,#ed00ff,#f100ff,#f500ff,#f900ff,#fd00ff,#ff00fd,#ff00f9,#ff00f6,#ff00f2,#ff00ee,#ff00eb,#ff00e7,#ff00e4,#ff00e1,#ff00de)"></b><b class="r4" style="top:352px;background:linear-gradient(90deg,#0011ff,#0010ff,#0010ff,#000fff,#000eff,#000dff,#000cff,#000bff,#000aff,#0009ff,#0008ff,#0007ff,#0006ff,#0005ff,#0004ff,#0003ff,#0002ff,#0001ff,#0000ff,#0000ff,#0300ff,#0600ff,#0900ff,#0d00ff,#1000ff,#1400ff,#1700ff,#1a00ff,#1e00ff,#2100ff,#2500ff,#2800ff,#2b00ff,#2f00ff,#3200ff,#3600ff,#3900ff,#3d00ff,#4000ff,#4400ff,#4700ff,#4b00ff,#4e00ff,#5200ff,#5500ff,#5900ff,#5c00ff,#6000ff,#6300ff,#6700ff,#6b00ff,#6e00ff,#7200ff,#7500ff,#7900ff,#7d00ff,#8000ff,#8400ff,#8700ff,#8b00ff,#8f00ff,#9200ff,#9600ff,#9a00ff,#9d00ff,#a100ff,#a500ff,#a900ff,#ac00ff,#b000ff,#b400ff,#b800ff,#bb00ff,#bf00ff,#c300ff,#c700ff,#cb00ff,#ce00ff,#d200ff,#d600ff,#da00ff,#de00ff,#e200ff,#e500ff,#e900ff,#ed00ff,#f100ff,#f500ff,#f900ff,#fd00ff,#ff00fd,#ff00f9,#ff00f6,#ff00f2,#ff00ee,#ff00eb,#ff00e8,#ff00e4,#ff00e1)"></b><b class="r4" style="top:356px;background:linear-gradient(90deg,#0010ff,#000fff,#000eff,#000dff,#000dff,#000cff,#000bff,#000aff,#0009ff,#0008ff,#0007ff,#0006ff,#0005ff,#0004ff,#0003ff,#0002ff,#0001ff,#0000ff,#0000ff,#0000ff,#0200ff,#0500ff,#0900ff,#0c00ff,#0f00ff,#1300ff,#1600ff,#1900ff,#1d00ff,#2000ff,#2400ff,#2700ff,#2a00ff,#2e00ff,#3100ff,#3500ff,#3800ff,#3b00ff,#3f00ff,#4200ff,#4600ff,#4900ff,#4d00ff,#5000ff,#5400ff,#5700ff,#5b00ff,#5e00ff,#6200ff,#6500ff,#6900ff,#6c00ff,#7000ff,#7300ff,#7700ff,#7a00ff,#7e00ff,#8200ff,#8500ff,#8900ff,#8c00ff,#9000ff,#9400ff,#9700ff,#9b00ff,#9f00ff,#a200ff,#a600ff,#aa00ff,#ad00ff,#b100ff,#b500ff,#b800ff,#bc00ff,#c000ff,#c400ff,#c700ff,#cb00ff,#cf00ff,#d300ff,#d600ff,#da00ff,#de00ff,#e200ff,#e600ff,#ea00ff,#ed00ff,#f100ff,#f500ff,#f900ff,#fd00ff,#ff00fd,#ff00f9,#ff00f6,#ff00f2,#ff00ef,#ff00eb,#ff00e8,#ff00e5)"></b><b class="r4" style="top:360px;background:linear-gradient(90deg,#000fff,#000eff,#000dff,#000cff,#000cff,#000bff,#000aff,#0009ff,#0008ff,#0007ff,#0006ff,#0005ff,#0004ff,#0003ff,#0002ff,#0001ff,#0000ff,#0000ff,#0000ff,#0000ff,#0200ff,#0500ff,#0800ff,#0b00ff,#0f00ff,#1200ff,#1500ff,#1900ff,#1c00ff,#1f00ff,#2300ff,#2600ff,#2900ff,#2d00ff,#3000ff,#3300ff,#3700ff,#3a00ff,#3e00ff,#4100ff,#4400ff,#4800ff,#4b00ff,#4f00ff,#5200ff,#5500ff,#5900ff,#5c00ff,#6000ff,#6300ff,#6700ff,#6a00ff,#6e00ff,#7100ff,#7500ff,#7800ff,#7c00ff,#7f00ff,#8300ff,#8700ff,#8a00ff,#8e00ff,#9100ff,#9500ff,#9800ff,#9c00ff,#a000ff,#a300ff,#a700ff,#ab00ff,#ae00ff,#b200ff,#b600ff,#b900ff,#bd00ff,#c100ff,#c400ff,#c800ff,#cc00ff,#cf00ff,#d300ff,#d700ff,#db00ff,#de00ff,#e200ff,#e600ff,#ea00ff,#ee00ff,#f100ff,#f500ff,#f900ff,#fd00ff,#ff00fd,#ff00f9,#ff00f6,#ff00f2,#ff00ef,#ff00eb,#ff00e8)"></b><b class="r4" style="top:364px;background:linear-gradient(90deg,#000eff,#000dff,#000cff,#000bff,#000aff,#000aff,#0009ff,#0008ff,#0007ff,#0006ff,#0005ff,#0004ff,#0003ff,#0002ff,#0001ff,#0000ff,#0000ff,#0000ff,#0000ff,#0000ff,#0100ff,#0400ff,#0800ff,#0b00ff,#0e00ff,#1100ff,#1500ff,#1800ff,#1b00ff,#1e00ff,#2200ff,#2500ff,#2800ff,#2c00ff,#2f00ff,#3200ff,#3600ff,#3900ff,#3c00ff,#4000ff,#4300ff,#4600ff,#4a00ff,#4d00ff,#5000ff,#5400ff,#5700ff,#5b00ff,#5e00ff,#6200ff,#6500ff,#6800ff,#6c00ff,#6f00ff,#7300ff,#7600ff,#7a00ff,#7d00ff,#8100ff,#8400ff,#8800ff,#8b00ff,#8f00ff,#9200ff,#9600ff,#9a00ff,#9d00ff,#a100ff,#a400ff,#a800ff,#ac00ff,#af00ff,#b300ff,#b600ff,#ba00ff,#be00ff,#c100ff,#c500ff,#c900ff,#cc00ff,#d000ff,#d400ff,#d700ff,#db00ff,#df00ff,#e300ff,#e600ff,#ea00ff,#ee00ff,#f200ff,#f500ff,#f900ff,#fd00ff,#ff00fd,#ff00fa,#ff00f6,#ff00f2,#ff00ef,#ff00ec)"></b><b class="r4" style="top:368px;background:linear-gradient(90deg,#000dff,#000cff,#000bff,#000aff,#0009ff,#0009ff,#0008ff,#0007ff,#0006ff,#0005ff,#0004ff,#0003ff,#0002ff,#0001ff,#0000ff,#0000ff,#0000ff,#0000ff,#0000ff,#0000ff,#0100ff,#0400ff,#0700ff,#0a00ff,#0d00ff,#1100ff,#1400ff,#1700ff,#1a00ff,#1e00ff,#2100ff,#2400ff,#2700ff,#2b00ff,#2e00ff,#3100ff,#3400ff,#3800ff,#3b00ff,#3e00ff,#4200ff,#4500ff,#4800ff,#4c00ff,#4f00ff,#5200ff,#5600ff,#5900ff,#5c00ff,#6000ff,#6300ff,#6700ff,#6a00ff,#6e00ff,#7100ff,#7400ff,#7800ff,#7b00ff,#7f00ff,#8200ff,#8600ff,#8900ff,#8d00ff,#9000ff,#9400ff,#9700ff,#9b00ff,#9e00ff,#a200ff,#a500ff,#a900ff,#ac00ff,#b000ff,#b400ff,#b700ff,#bb00ff,#be00ff,#c200ff,#c600ff,#c900ff,#cd00ff,#d100ff,#d400ff,#d800ff,#dc00ff,#df00ff,#e300ff,#e700ff,#ea00ff,#ee00ff,#f200ff,#f500ff,#f900ff,#fd00ff,#ff00fd,#ff00fa,#ff00f6,#ff00f3,#ff00ef)"></b></div></div><svg style="left:0;top:0" width="1670" height="1006"><rect x="1019.6" y="119.6" width="639.9" height="491.6" fill="none" stroke="#a8a8a8" stroke-width="1.5"/><line x1="1014" y1="611.2" x2="1019.6" y2="611.2" stroke="#d0d0d0" stroke-width="1.2"/><text x="1013.5" y="616.2" font-size="13.5" fill="#dcdcdc" text-anchor="end">0</text><line x1="1019.6" y1="611.2" x2="1019.6" y2="617.5" stroke="#e0e0e0" stroke-width="1.3"/><text x="1019.6" y="633" font-size="13.5" fill="#dcdcdc" text-anchor="middle">0</text><line x1="1014" y1="570.3" x2="1019.6" y2="570.3" stroke="#d0d0d0" stroke-width="1.2"/><text x="1013.5" y="575.3" font-size="13.5" fill="#dcdcdc" text-anchor="end">0,05</text><line x1="1072.8" y1="611.2" x2="1072.8" y2="617.5" stroke="#e0e0e0" stroke-width="1.3"/><text x="1072.8" y="633" font-size="13.5" fill="#dcdcdc" text-anchor="middle">0,05</text><line x1="1014" y1="529.4" x2="1019.6" y2="529.4" stroke="#d0d0d0" stroke-width="1.2"/><text x="1013.5" y="534.4" font-size="13.5" fill="#dcdcdc" text-anchor="end">0,1</text><line x1="1126.0" y1="611.2" x2="1126.0" y2="617.5" stroke="#e0e0e0" stroke-width="1.3"/><text x="1126.0" y="633" font-size="13.5" fill="#dcdcdc" text-anchor="middle">0,1</text><line x1="1014" y1="488.6" x2="1019.6" y2="488.6" stroke="#d0d0d0" stroke-width="1.2"/><text x="1013.5" y="493.6" font-size="13.5" fill="#dcdcdc" text-anchor="end">0,15</text><line x1="1179.2" y1="611.2" x2="1179.2" y2="617.5" stroke="#e0e0e0" stroke-width="1.3"/><text x="1179.2" y="633" font-size="13.5" fill="#dcdcdc" text-anchor="middle">0,15</text><line x1="1014" y1="447.7" x2="1019.6" y2="447.7" stroke="#d0d0d0" stroke-width="1.2"/><text x="1013.5" y="452.7" font-size="13.5" fill="#dcdcdc" text-anchor="end">0,2</text><line x1="1232.4" y1="611.2" x2="1232.4" y2="617.5" stroke="#e0e0e0" stroke-width="1.3"/><text x="1232.4" y="633" font-size="13.5" fill="#dcdcdc" text-anchor="middle">0,2</text><line x1="1014" y1="406.8" x2="1019.6" y2="406.8" stroke="#d0d0d0" stroke-width="1.2"/><text x="1013.5" y="411.8" font-size="13.5" fill="#dcdcdc" text-anchor="end">0,25</text><line x1="1285.6" y1="611.2" x2="1285.6" y2="617.5" stroke="#e0e0e0" stroke-width="1.3"/><text x="1285.6" y="633" font-size="13.5" fill="#dcdcdc" text-anchor="middle">0,25</text><line x1="1014" y1="365.9" x2="1019.6" y2="365.9" stroke="#d0d0d0" stroke-width="1.2"/><text x="1013.5" y="370.9" font-size="13.5" fill="#dcdcdc" text-anchor="end">0,3</text><line x1="1338.8" y1="611.2" x2="1338.8" y2="617.5" stroke="#e0e0e0" stroke-width="1.3"/><text x="1338.8" y="633" font-size="13.5" fill="#dcdcdc" text-anchor="middle">0,3</text><line x1="1014" y1="325.0" x2="1019.6" y2="325.0" stroke="#d0d0d0" stroke-width="1.2"/><text x="1013.5" y="330.0" font-size="13.5" fill="#dcdcdc" text-anchor="end">0,35</text><line x1="1392.0" y1="611.2" x2="1392.0" y2="617.5" stroke="#e0e0e0" stroke-width="1.3"/><text x="1392.0" y="633" font-size="13.5" fill="#dcdcdc" text-anchor="middle">0,35</text><line x1="1014" y1="284.2" x2="1019.6" y2="284.2" stroke="#d0d0d0" stroke-width="1.2"/><text x="1013.5" y="289.2" font-size="13.5" fill="#dcdcdc" text-anchor="end">0,4</text><line x1="1445.2" y1="611.2" x2="1445.2" y2="617.5" stroke="#e0e0e0" stroke-width="1.3"/><text x="1445.2" y="633" font-size="13.5" fill="#dcdcdc" text-anchor="middle">0,4</text><line x1="1014" y1="243.3" x2="1019.6" y2="243.3" stroke="#d0d0d0" stroke-width="1.2"/><text x="1013.5" y="248.3" font-size="13.5" fill="#dcdcdc" text-anchor="end">0,45</text><line x1="1498.4" y1="611.2" x2="1498.4" y2="617.5" stroke="#e0e0e0" stroke-width="1.3"/><text x="1498.4" y="633" font-size="13.5" fill="#dcdcdc" text-anchor="middle">0,45</text><line x1="1014" y1="202.4" x2="1019.6" y2="202.4" stroke="#d0d0d0" stroke-width="1.2"/><text x="1013.5" y="207.4" font-size="13.5" fill="#dcdcdc" text-anchor="end">0,5</text><line x1="1551.6" y1="611.2" x2="1551.6" y2="617.5" stroke="#e0e0e0" stroke-width="1.3"/><text x="1551.6" y="633" font-size="13.5" fill="#dcdcdc" text-anchor="middle">0,5</text><line x1="1014" y1="161.5" x2="1019.6" y2="161.5" stroke="#d0d0d0" stroke-width="1.2"/><text x="1013.5" y="166.5" font-size="13.5" fill="#dcdcdc" text-anchor="end">0,55</text><line x1="1604.8" y1="611.2" x2="1604.8" y2="617.5" stroke="#e0e0e0" stroke-width="1.3"/><text x="1604.8" y="633" font-size="13.5" fill="#dcdcdc" text-anchor="middle">0,55</text><rect x="1223.3" y="220.0" width="12.4" height="12.4" fill="none" stroke="#000" stroke-width="2.2"/><rect x="1492.5" y="175.6" width="13.2" height="13.2" fill="none" stroke="#eef4ee" stroke-width="1.8"/><rect x="1146.0" y="143.0" width="13.2" height="13.2" fill="none" stroke="#eef4ee" stroke-width="1.8"/><rect x="1199.7" y="475.6" width="13.2" height="13.2" fill="none" stroke="#eef4ee" stroke-width="1.8"/><rect x="1160.2" y="231.0" width="13.2" height="13.2" fill="none" stroke="#eef4ee" stroke-width="1.8"/><rect x="1337.5" y="334.3" width="13.2" height="13.2" fill="none" stroke="#eef4ee" stroke-width="1.8"/><rect x="1230.0" y="150.9" width="13.2" height="13.2" fill="none" stroke="#eef4ee" stroke-width="1.8"/><circle cx="1229.0" cy="226.5" r="4.6" fill="#ffffff" stroke="#111" stroke-width="1.4"/><circle cx="1507.4" cy="179.8" r="4.1" fill="#d00000" stroke="#111" stroke-width="1.4"/><circle cx="1151.6" cy="148.3" r="4.1" fill="#00b400" stroke="#111" stroke-width="1.4"/><circle cx="1201.4" cy="482.4" r="4.1" fill="#0000d0" stroke="#111" stroke-width="1.4"/><circle cx="1165.1" cy="237.2" r="4.1" fill="#00b4b4" stroke="#111" stroke-width="1.4"/><circle cx="1343.7" cy="341.8" r="4.1" fill="#b400b4" stroke="#111" stroke-width="1.4"/><circle cx="1236.2" cy="156.5" r="4.1" fill="#b4b400" stroke="#111" stroke-width="1.4"/></svg><div class="a" style="left:1402px;top:579px;width:254px;height:27px;background:#2e2e2e"></div><div class="t" style="left:1404.5px;top:584px;font-size:19.8px;color:#f4f4f4">Gamut Coverage:&nbsp; 99,9%</div><svg style="left:0;top:0" width="1670" height="1006"><text x="15.5" y="713.2" font-size="30.0" fill="#f2f2f2" text-anchor="start" font-weight="normal" >Current Reading</text><text x="15.5" y="782.2" font-size="25.6" fill="#f0f0f0" text-anchor="start" font-weight="normal" >x: 0,3118</text><text x="172.5" y="782.2" font-size="25.0" fill="#f0f0f0" text-anchor="start" font-weight="normal" >y: 0,3297</text><text x="15.5" y="823.2" font-size="25.0" fill="#f0f0f0" text-anchor="start" font-weight="normal" >fL: 78,93</text><text x="15.5" y="863.5" font-size="26.2" fill="#f0f0f0" text-anchor="start" font-weight="normal" >cd/m²: 270,45</text></svg><svg style="left:0;top:0" width="1670" height="1006"><text x="468.0" y="681.0" font-size="13.6" fill="#d8d8d8" text-anchor="middle" font-weight="normal" >RGB Balance</text><rect x="358.7" y="685.9" width="250" height="180.7" fill="#232323"/><line x1="358.7" y1="704.6" x2="608.7" y2="704.6" stroke="#8e8e8e" stroke-width="1.3"/><line x1="352.5" y1="704.6" x2="358.7" y2="704.6" stroke="#d0d0d0" stroke-width="1.3"/><text x="352.0" y="709.6" font-size="13.5" fill="#dcdcdc" text-anchor="end" font-weight="normal" >104</text><line x1="358.7" y1="741.2" x2="608.7" y2="741.2" stroke="#8e8e8e" stroke-width="1.3"/><line x1="352.5" y1="741.2" x2="358.7" y2="741.2" stroke="#d0d0d0" stroke-width="1.3"/><text x="352.0" y="746.2" font-size="13.5" fill="#dcdcdc" text-anchor="end" font-weight="normal" >102</text><line x1="358.7" y1="777.0" x2="608.7" y2="777.0" stroke="#8e8e8e" stroke-width="1.3"/><line x1="352.5" y1="777.0" x2="358.7" y2="777.0" stroke="#d0d0d0" stroke-width="1.3"/><text x="352.0" y="782.0" font-size="13.5" fill="#dcdcdc" text-anchor="end" font-weight="normal" >100</text><line x1="358.7" y1="812.9" x2="608.7" y2="812.9" stroke="#8e8e8e" stroke-width="1.3"/><line x1="352.5" y1="812.9" x2="358.7" y2="812.9" stroke="#d0d0d0" stroke-width="1.3"/><text x="352.0" y="817.9" font-size="13.5" fill="#dcdcdc" text-anchor="end" font-weight="normal" >98</text><line x1="358.7" y1="848.9" x2="608.7" y2="848.9" stroke="#8e8e8e" stroke-width="1.3"/><line x1="352.5" y1="848.9" x2="358.7" y2="848.9" stroke="#d0d0d0" stroke-width="1.3"/><text x="352.0" y="853.9" font-size="13.5" fill="#dcdcdc" text-anchor="end" font-weight="normal" >96</text><defs><linearGradient id="rb" x1="0" x2="0" y1="0" y2="1"><stop offset="0" stop-color="#ff5a5a"/><stop offset="1" stop-color="#ff4040"/></linearGradient><linearGradient id="gb" x1="0" x2="0" y1="0" y2="1"><stop offset="0" stop-color="#58ad58"/><stop offset="1" stop-color="#3d993d"/></linearGradient><linearGradient id="bb" x1="0" x2="0" y1="0" y2="1"><stop offset="0" stop-color="#5a5aff"/><stop offset="1" stop-color="#4040f8"/></linearGradient></defs><rect x="383.4" y="787.0" width="64.7" height="79.6" fill="url(#rb)" stroke="#000" stroke-width="1.5"/><rect x="449.6" y="775.0" width="64.9" height="91.6" fill="url(#gb)" stroke="#000" stroke-width="1.5"/><rect x="517.0" y="779.0" width="64.1" height="87.6" fill="url(#bb)" stroke="#000050" stroke-width="1.5"/><rect x="358.7" y="685.9" width="250" height="180.7" fill="none" stroke="#9c9c9c" stroke-width="1.5"/><line x1="358.7" y1="866.6" x2="358.7" y2="873" stroke="#e0e0e0" stroke-width="1.3"/><line x1="608.7" y1="866.6" x2="608.7" y2="873" stroke="#e0e0e0" stroke-width="1.3"/><text x="483.5" y="883.0" font-size="14.5" fill="#dcdcdc" text-anchor="middle" font-weight="normal" >100W</text></svg><svg style="left:0;top:0" width="1670" height="1006"><text x="809.0" y="672.0" font-size="13.6" fill="#d8d8d8" text-anchor="middle" font-weight="normal" >CIE 1931 xy</text></svg><div class="a" style="left:638px;top:677px;width:342px;height:199px;overflow:hidden;border:1px solid #888"><div class="a fld" style="left:-5px;top:-5px;width:360px;height:216px;filter:blur(3px)"><b class="r6" style="top:0px;background:linear-gradient(90deg,#56ffd4,#5dffd4,#64ffd4,#6affd4,#6fffd4,#75ffd3,#7affd3,#7fffd3,#84ffd3,#88ffd2,#8dffd2,#91ffd2,#95ffd2,#99ffd1,#9effd1,#a2ffd1,#a5ffd1,#a9ffd1,#adffd0,#b1ffd0,#b4ffd0,#b8ffcf,#bbffcf,#bfffcf,#c2ffcf,#c6ffce,#c9ffce,#ccffce,#d0ffce,#d3ffcd,#d6ffcd,#daffcd,#ddffcc,#e0ffcc,#e3ffcc,#e6ffcc,#e9ffcb,#edffcb,#f0ffcb,#f3ffca,#f6ffca,#f9ffca,#fcffc9,#ffffc9,#fffcc6,#fff9c4,#fff6c1,#fff4bf,#fff1bc,#ffeeba,#ffecb7,#ffe9b5,#ffe7b3,#ffe4b1,#ffe2ae,#ffe0ac,#ffddaa,#ffdba8,#ffd9a6,#ffd7a4,#ffd5a2)"></b><b class="r6" style="top:6px;background:linear-gradient(90deg,#5affd7,#60ffd7,#67ffd6,#6dffd6,#72ffd6,#78ffd6,#7dffd6,#82ffd5,#86ffd5,#8bffd5,#8fffd5,#94ffd5,#98ffd4,#9cffd4,#a0ffd4,#a4ffd4,#a8ffd3,#acffd3,#afffd3,#b3ffd3,#b7ffd2,#baffd2,#beffd2,#c1ffd2,#c5ffd1,#c8ffd1,#ccffd1,#cfffd1,#d2ffd0,#d6ffd0,#d9ffd0,#dcffd0,#dfffcf,#e3ffcf,#e6ffcf,#e9ffce,#ecffce,#efffce,#f2ffcd,#f5ffcd,#f8ffcd,#fcffcd,#ffffcc,#fffcca,#fff9c7,#fff7c4,#fff4c2,#fff1bf,#ffeebd,#ffecbb,#ffe9b8,#ffe7b6,#ffe4b4,#ffe2b2,#ffe0af,#ffddad,#ffdbab,#ffd9a9,#ffd7a7,#ffd5a5,#ffd2a3)"></b><b class="r6" style="top:12px;background:linear-gradient(90deg,#5dffd9,#64ffd9,#6affd9,#70ffd9,#75ffd8,#7affd8,#7fffd8,#84ffd8,#89ffd8,#8dffd7,#92ffd7,#96ffd7,#9affd7,#9effd7,#a3ffd6,#a6ffd6,#aaffd6,#aeffd6,#b2ffd6,#b6ffd5,#b9ffd5,#bdffd5,#c0ffd5,#c4ffd4,#c7ffd4,#cbffd4,#ceffd4,#d2ffd3,#d5ffd3,#d8ffd3,#dbffd3,#dfffd2,#e2ffd2,#e5ffd2,#e8ffd2,#ecffd1,#efffd1,#f2ffd1,#f5ffd0,#f8ffd0,#fbffd0,#feffd0,#fffdcd,#fffacb,#fff7c8,#fff4c5,#fff1c3,#ffeec0,#ffecbe,#ffe9bc,#ffe7b9,#ffe4b7,#ffe2b5,#ffdfb2,#ffddb0,#ffdbae,#ffd9ac,#ffd7aa,#ffd4a8,#ffd2a6,#ffd0a4)"></b><b class="r6" style="top:18px;background:linear-gradient(90deg,#60ffdc,#67ffdc,#6dffdb,#72ffdb,#78ffdb,#7dffdb,#82ffdb,#87ffda,#8bffda,#90ffda,#94ffda,#99ffda,#9dffd9,#a1ffd9,#a5ffd9,#a9ffd9,#adffd9,#b1ffd8,#b4ffd8,#b8ffd8,#bcffd8,#bfffd8,#c3ffd7,#c6ffd7,#caffd7,#cdffd7,#d1ffd6,#d4ffd6,#d7ffd6,#dbffd6,#deffd6,#e1ffd5,#e5ffd5,#e8ffd5,#ebffd5,#eeffd4,#f1ffd4,#f5ffd4,#f8ffd3,#fbffd3,#feffd3,#fffdd1,#ffface,#fff7cb,#fff4c9,#fff1c6,#ffeec4,#ffecc1,#ffe9bf,#ffe7bc,#ffe4ba,#ffe2b8,#ffdfb6,#ffddb3,#ffdbb1,#ffd9af,#ffd6ad,#ffd4ab,#ffd2a9,#ffd0a7,#ffcea5)"></b><b class="r6" style="top:24px;background:linear-gradient(90deg,#64ffde,#6affde,#70ffde,#75ffde,#7bffde,#80ffdd,#85ffdd,#89ffdd,#8effdd,#93ffdd,#97ffdc,#9bffdc,#9fffdc,#a4ffdc,#a8ffdc,#abffdc,#afffdb,#b3ffdb,#b7ffdb,#bbffdb,#beffdb,#c2ffda,#c5ffda,#c9ffda,#ccffda,#d0ffda,#d3ffd9,#d7ffd9,#daffd9,#ddffd9,#e1ffd8,#e4ffd8,#e7ffd8,#ebffd8,#eeffd7,#f1ffd7,#f4ffd7,#f7ffd7,#fbffd6,#feffd6,#fffdd4,#fffad2,#fff7cf,#fff4cc,#fff1ca,#ffefc7,#ffecc4,#ffe9c2,#ffe7c0,#ffe4bd,#ffe2bb,#ffdfb9,#ffddb7,#ffdbb4,#ffd8b2,#ffd6b0,#ffd4ae,#ffd2ac,#ffd0aa,#ffcea8,#ffcca6)"></b><b class="r6" style="top:30px;background:linear-gradient(90deg,#67ffe1,#6dffe1,#73ffe0,#78ffe0,#7dffe0,#83ffe0,#87ffe0,#8cffe0,#91ffdf,#95ffdf,#9affdf,#9effdf,#a2ffdf,#a6ffdf,#aaffde,#aeffde,#b2ffde,#b6ffde,#b9ffde,#bdffde,#c1ffdd,#c4ffdd,#c8ffdd,#ccffdd,#cfffdd,#d3ffdc,#d6ffdc,#d9ffdc,#ddffdc,#e0ffdc,#e3ffdb,#e7ffdb,#eaffdb,#edffdb,#f1ffda,#f4ffda,#f7ffda,#faffda,#fdffda,#fffdd8,#fffad5,#fff7d2,#fff4d0,#fff1cd,#ffefca,#ffecc8,#ffe9c5,#ffe7c3,#ffe4c0,#ffe2be,#ffdfbc,#ffddba,#ffdbb7,#ffd8b5,#ffd6b3,#ffd4b1,#ffd2af,#ffd0ad,#ffceab,#ffcca9,#ffcaa7)"></b><b class="r6" style="top:36px;background:linear-gradient(90deg,#6affe3,#70ffe3,#76ffe3,#7bffe3,#80ffe3,#85ffe3,#8affe2,#8fffe2,#93ffe2,#98ffe2,#9cffe2,#a0ffe2,#a5ffe1,#a9ffe1,#adffe1,#b1ffe1,#b4ffe1,#b8ffe1,#bcffe1,#c0ffe0,#c3ffe0,#c7ffe0,#cbffe0,#ceffe0,#d2ffdf,#d5ffdf,#d9ffdf,#dcffdf,#dfffdf,#e3ffdf,#e6ffde,#e9ffde,#edffde,#f0ffde,#f3ffde,#f7ffdd,#faffdd,#fdffdd,#fffedc,#fffbd9,#fff7d6,#fff4d3,#fff2d0,#ffefce,#ffeccb,#ffe9c8,#ffe7c6,#ffe4c4,#ffe2c1,#ffdfbf,#ffddbd,#ffdaba,#ffd8b8,#ffd6b6,#ffd4b4,#ffd2b2,#ffcfb0,#ffcdae,#ffcbac,#ffc9aa,#ffc7a8)"></b><b class="r6" style="top:42px;background:linear-gradient(90deg,#6dffe6,#73ffe6,#78ffe6,#7effe5,#83ffe5,#88ffe5,#8dffe5,#92ffe5,#96ffe5,#9bffe5,#9fffe5,#a3ffe4,#a7ffe4,#abffe4,#afffe4,#b3ffe4,#b7ffe4,#bbffe4,#bfffe3,#c2ffe3,#c6ffe3,#caffe3,#cdffe3,#d1ffe3,#d4ffe2,#d8ffe2,#dbffe2,#dfffe2,#e2ffe2,#e6ffe2,#e9ffe1,#ecffe1,#f0ffe1,#f3ffe1,#f6ffe1,#faffe0,#fdffe0,#fffedf,#fffbdc,#fff8d9,#fff5d6,#fff2d4,#ffefd1,#ffecce,#ffe9cc,#ffe7c9,#ffe4c7,#ffe2c4,#ffdfc2,#ffddc0,#ffdabd,#ffd8bb,#ffd6b9,#ffd4b7,#ffd1b5,#ffcfb3,#ffcdb1,#ffcbaf,#ffc9ad,#ffc7ab,#ffc5a9)"></b><b class="r6" style="top:48px;background:linear-gradient(90deg,#70ffe8,#76ffe8,#7bffe8,#81ffe8,#86ffe8,#8bffe8,#90ffe8,#94ffe8,#99ffe8,#9dffe7,#a1ffe7,#a6ffe7,#aaffe7,#aeffe7,#b2ffe7,#b6ffe7,#baffe6,#beffe6,#c1ffe6,#c5ffe6,#c9ffe6,#ccffe6,#d0ffe6,#d4ffe6,#d7ffe5,#dbffe5,#deffe5,#e2ffe5,#e5ffe5,#e8ffe5,#ecffe4,#efffe4,#f2ffe4,#f6ffe4,#f9ffe4,#fcffe4,#fffee3,#fffbe0,#fff8dd,#fff5da,#fff2d7,#ffefd4,#ffecd2,#ffe9cf,#ffe7cc,#ffe4ca,#ffe2c8,#ffdfc5,#ffddc3,#ffdac1,#ffd8be,#ffd6bc,#ffd3ba,#ffd1b8,#ffcfb6,#ffcdb4,#ffcbb2,#ffc9b0,#ffc7ae,#ffc5ac,#ffc3aa)"></b><b class="r6" style="top:54px;background:linear-gradient(90deg,#73ffeb,#79ffeb,#7effeb,#84ffeb,#89ffeb,#8effeb,#92ffeb,#97ffea,#9bffea,#a0ffea,#a4ffea,#a8ffea,#adffea,#b1ffea,#b5ffea,#b9ffea,#bcffe9,#c0ffe9,#c4ffe9,#c8ffe9,#cbffe9,#cfffe9,#d3ffe9,#d6ffe9,#daffe8,#ddffe8,#e1ffe8,#e4ffe8,#e8ffe8,#ebffe8,#efffe8,#f2ffe7,#f5ffe7,#f9ffe7,#fcffe7,#ffffe6,#fffbe3,#fff8e0,#fff5dd,#fff2da,#ffefd8,#ffecd5,#ffe9d2,#ffe7d0,#ffe4cd,#ffe1cb,#ffdfc8,#ffdcc6,#ffdac4,#ffd8c1,#ffd5bf,#ffd3bd,#ffd1bb,#ffcfb9,#ffcdb7,#ffcab5,#ffc8b3,#ffc6b1,#ffc4af,#ffc3ad,#ffc1ab)"></b><b class="r6" style="top:60px;background:linear-gradient(90deg,#76ffee,#7cffee,#81ffee,#86ffee,#8bffed,#90ffed,#95ffed,#9affed,#9effed,#a3ffed,#a7ffed,#abffed,#afffed,#b3ffed,#b7ffed,#bbffec,#bfffec,#c3ffec,#c7ffec,#caffec,#ceffec,#d2ffec,#d5ffec,#d9ffec,#ddffeb,#e0ffeb,#e4ffeb,#e7ffeb,#ebffeb,#eeffeb,#f2ffeb,#f5ffeb,#f8ffeb,#fcffea,#ffffea,#fffce7,#fff8e4,#fff5e1,#fff2de,#ffefdb,#ffecd8,#ffe9d6,#ffe7d3,#ffe4d0,#ffe1ce,#ffdfcb,#ffdcc9,#ffdac7,#ffd8c4,#ffd5c2,#ffd3c0,#ffd1be,#ffcebc,#ffccb9,#ffcab7,#ffc8b5,#ffc6b3,#ffc4b1,#ffc2b0,#ffc0ae,#ffbeac)"></b><b class="r6" style="top:66px;background:linear-gradient(90deg,#79fff1,#7ffff0,#84fff0,#89fff0,#8efff0,#93fff0,#98fff0,#9cfff0,#a1fff0,#a5fff0,#aafff0,#aefff0,#b2fff0,#b6fff0,#baffef,#beffef,#c2ffef,#c6ffef,#c9ffef,#cdffef,#d1ffef,#d5ffef,#d8ffef,#dcffef,#e0ffef,#e3ffee,#e7ffee,#eaffee,#eeffee,#f1ffee,#f5ffee,#f8ffee,#fbffee,#ffffee,#fffceb,#fff9e7,#fff5e4,#fff2e1,#ffefde,#ffecdc,#ffe9d9,#ffe7d6,#ffe4d4,#ffe1d1,#ffdfcf,#ffdccc,#ffdaca,#ffd7c7,#ffd5c5,#ffd3c3,#ffd0c1,#ffcebe,#ffccbc,#ffcaba,#ffc8b8,#ffc6b6,#ffc4b4,#ffc2b2,#ffc0b0,#ffbeaf,#ffbcad)"></b><b class="r6" style="top:72px;background:linear-gradient(90deg,#7cfff3,#82fff3,#87fff3,#8cfff3,#91fff3,#96fff3,#9bfff3,#9ffff3,#a4fff3,#a8fff3,#acfff3,#b1fff3,#b5fff3,#b9fff3,#bdfff2,#c1fff2,#c5fff2,#c8fff2,#ccfff2,#d0fff2,#d4fff2,#d7fff2,#dbfff2,#dffff2,#e2fff2,#e6fff2,#eafff2,#edfff2,#f1fff1,#f4fff1,#f8fff1,#fbfff1,#fffff1,#fffcee,#fff9eb,#fff6e8,#fff2e5,#ffefe2,#ffecdf,#ffeadc,#ffe7da,#ffe4d7,#ffe1d4,#ffdfd2,#ffdccf,#ffdacd,#ffd7ca,#ffd5c8,#ffd3c6,#ffd0c4,#ffcec1,#ffccbf,#ffcabd,#ffc8bb,#ffc5b9,#ffc3b7,#ffc1b5,#ffbfb3,#ffbeb1,#ffbcaf,#ffbaae)"></b><b class="r6" style="top:78px;background:linear-gradient(90deg,#7ffff6,#85fff6,#8afff6,#8ffff6,#94fff6,#99fff6,#9dfff6,#a2fff6,#a6fff6,#abfff6,#affff6,#b3fff6,#b7fff6,#bcfff6,#c0fff5,#c4fff5,#c7fff5,#cbfff5,#cffff5,#d3fff5,#d7fff5,#dafff5,#defff5,#e2fff5,#e5fff5,#e9fff5,#edfff5,#f0fff5,#f4fff5,#f7fff5,#fbfff5,#fefff5,#fffcf2,#fff9ef,#fff6eb,#fff3e8,#ffefe5,#ffece2,#ffeae0,#ffe7dd,#ffe4da,#ffe1d7,#ffdfd5,#ffdcd2,#ffdad0,#ffd7cd,#ffd5cb,#ffd2c9,#ffd0c7,#ffcec4,#ffccc2,#ffc9c0,#ffc7be,#ffc5bc,#ffc3ba,#ffc1b8,#ffbfb6,#ffbdb4,#ffbbb2,#ffb9b0,#ffb8ae)"></b><b class="r6" style="top:84px;background:linear-gradient(90deg,#82fff9,#88fff9,#8dfff9,#92fff9,#97fff9,#9cfff9,#a0fff9,#a5fff9,#a9fff9,#aefff9,#b2fff9,#b6fff9,#bafff9,#befff9,#c2fff9,#c6fff9,#cafff9,#cefff8,#d2fff8,#d6fff8,#dafff8,#ddfff8,#e1fff8,#e5fff8,#e8fff8,#ecfff8,#f0fff8,#f3fff8,#f7fff8,#fafff8,#fefff8,#fffdf6,#fff9f2,#fff6ef,#fff3ec,#fff0e9,#ffede6,#ffeae3,#ffe7e0,#ffe4dd,#ffe1db,#ffdfd8,#ffdcd5,#ffd9d3,#ffd7d1,#ffd4ce,#ffd2cc,#ffd0c9,#ffcdc7,#ffcbc5,#ffc9c3,#ffc7c1,#ffc5bf,#ffc3bd,#ffc1bb,#ffbfb9,#ffbdb7,#ffbbb5,#ffb9b3,#ffb7b1,#ffb5af)"></b><b class="r6" style="top:90px;background:linear-gradient(90deg,#85fffc,#8bfffc,#90fffc,#95fffc,#9afffc,#9ffffc,#a3fffc,#a8fffc,#acfffc,#b1fffc,#b5fffc,#b9fffc,#bdfffc,#c1fffc,#c5fffc,#c9fffc,#cdfffc,#d1fffc,#d5fffc,#d9fffc,#ddfffc,#e0fffc,#e4fffc,#e8fffc,#ebfffc,#effffc,#f3fffc,#f6fffc,#fafffc,#fefffb,#fffdf9,#fff9f6,#fff6f3,#fff3ef,#fff0ec,#ffede9,#ffeae6,#ffe7e3,#ffe4e1,#ffe1de,#ffdedb,#ffdcd9,#ffd9d6,#ffd7d4,#ffd4d1,#ffd2cf,#ffd0cc,#ffcdca,#ffcbc8,#ffc9c6,#ffc7c4,#ffc4c1,#ffc2bf,#ffc0bd,#ffbebb,#ffbcb9,#ffbab7,#ffb9b6,#ffb7b4,#ffb5b2,#ffb3b0)"></b><b class="r6" style="top:96px;background:linear-gradient(90deg,#88ffff,#8effff,#93ffff,#98ffff,#9dffff,#a1ffff,#a6ffff,#abffff,#afffff,#b3ffff,#b8ffff,#bcffff,#c0ffff,#c4ffff,#c8ffff,#ccffff,#d0ffff,#d4ffff,#d8ffff,#dcffff,#e0ffff,#e3ffff,#e7ffff,#ebffff,#efffff,#f2ffff,#f6ffff,#faffff,#fdffff,#fffdfd,#fffafa,#fff6f6,#fff3f3,#fff0f0,#ffeded,#ffeaea,#ffe7e7,#ffe4e4,#ffe1e1,#ffdede,#ffdcdc,#ffd9d9,#ffd7d7,#ffd4d4,#ffd2d2,#ffcfcf,#ffcdcd,#ffcbcb,#ffc8c9,#ffc6c6,#ffc4c4,#ffc2c2,#ffc0c0,#ffbebe,#ffbcbc,#ffbaba,#ffb8b8,#ffb6b6,#ffb4b5,#ffb2b3,#ffb1b1)"></b><b class="r6" style="top:102px;background:linear-gradient(90deg,#8afcff,#8ffcff,#94fcff,#99fcff,#9efcff,#a3fcff,#a7fcff,#acfcff,#b0fcff,#b4fcff,#b8fcff,#bdfcff,#c1fcff,#c5fcff,#c9fcff,#cdfcff,#d1fcff,#d4fcff,#d8fcff,#dcfcff,#e0fcff,#e3fcff,#e7fcff,#ebfcff,#effcff,#f2fcff,#f6fcff,#f9fcff,#fdfbff,#fffafe,#fff7fa,#fff3f7,#fff0f3,#ffedf0,#ffeaed,#ffe7ea,#ffe4e7,#ffe1e4,#ffdee2,#ffdcdf,#ffd9dc,#ffd6da,#ffd4d7,#ffd1d5,#ffcfd2,#ffcdd0,#ffcace,#ffc8cb,#ffc6c9,#ffc4c7,#ffc2c5,#ffc0c3,#ffbec1,#ffbcbf,#ffbabd,#ffb8bb,#ffb6b9,#ffb4b7,#ffb2b5,#ffb0b3,#ffaeb2)"></b><b class="r6" style="top:108px;background:linear-gradient(90deg,#8bf9ff,#90f9ff,#95f9ff,#9af9ff,#9ff9ff,#a3f9ff,#a8f9ff,#acf9ff,#b1f9ff,#b5f9ff,#b9f9ff,#bdf9ff,#c1f9ff,#c5f9ff,#c9f9ff,#cdf9ff,#d1f9ff,#d5f9ff,#d8f9ff,#dcf8ff,#e0f8ff,#e4f8ff,#e7f8ff,#ebf8ff,#eef8ff,#f2f8ff,#f6f8ff,#f9f8ff,#fdf8ff,#fff7fe,#fff3fa,#fff0f7,#ffedf4,#ffeaf1,#ffe7ee,#ffe4eb,#ffe1e8,#ffdee5,#ffdbe2,#ffd9df,#ffd6dd,#ffd4da,#ffd1d8,#ffcfd5,#ffccd3,#ffcad1,#ffc8ce,#ffc6cc,#ffc3ca,#ffc1c8,#ffbfc6,#ffbdc4,#ffbbc2,#ffb9c0,#ffb7be,#ffb5bc,#ffb3ba,#ffb1b8,#ffb0b6,#ffaeb4,#ffacb2)"></b><b class="r6" style="top:114px;background:linear-gradient(90deg,#8df6ff,#92f6ff,#97f6ff,#9bf6ff,#a0f6ff,#a4f6ff,#a9f6ff,#adf6ff,#b1f6ff,#b6f6ff,#baf6ff,#bef6ff,#c2f6ff,#c6f6ff,#c9f6ff,#cdf5ff,#d1f5ff,#d5f5ff,#d9f5ff,#dcf5ff,#e0f5ff,#e4f5ff,#e7f5ff,#ebf5ff,#eef5ff,#f2f5ff,#f5f5ff,#f9f5ff,#fcf5ff,#fff4fe,#fff0fb,#ffedf7,#ffeaf4,#ffe7f1,#ffe4ee,#ffe1eb,#ffdee8,#ffdbe5,#ffd9e3,#ffd6e0,#ffd3dd,#ffd1db,#ffcfd8,#ffccd6,#ffcad4,#ffc7d1,#ffc5cf,#ffc3cd,#ffc1cb,#ffbfc8,#ffbdc6,#ffbbc4,#ffb9c2,#ffb7c0,#ffb5be,#ffb3bc,#ffb1ba,#ffafb9,#ffadb7,#ffacb5,#ffaab3)"></b><b class="r6" style="top:120px;background:linear-gradient(90deg,#8ef3ff,#93f3ff,#98f3ff,#9cf3ff,#a1f3ff,#a5f3ff,#aaf3ff,#aef3ff,#b2f3ff,#b6f3ff,#baf3ff,#bef3ff,#c2f3ff,#c6f2ff,#caf2ff,#cef2ff,#d1f2ff,#d5f2ff,#d9f2ff,#dcf2ff,#e0f2ff,#e4f2ff,#e7f2ff,#ebf2ff,#eef2ff,#f2f1ff,#f5f1ff,#f9f1ff,#fcf1ff,#fff0fe,#ffedfb,#ffeaf8,#ffe7f4,#ffe4f1,#ffe1ee,#ffdeeb,#ffdbe9,#ffd8e6,#ffd6e3,#ffd3e0,#ffd1de,#ffcedb,#ffccd9,#ffc9d6,#ffc7d4,#ffc5d2,#ffc3d0,#ffc0cd,#ffbecb,#ffbcc9,#ffbac7,#ffb8c5,#ffb6c3,#ffb4c1,#ffb2bf,#ffb0bd,#ffafbb,#ffadb9,#ffabb8,#ffa9b6,#ffa7b4)"></b><b class="r6" style="top:126px;background:linear-gradient(90deg,#8ff1ff,#94f0ff,#99f0ff,#9df0ff,#a2f0ff,#a6f0ff,#aaf0ff,#aff0ff,#b3f0ff,#b7f0ff,#bbf0ff,#bff0ff,#c3efff,#c6efff,#caefff,#ceefff,#d2efff,#d5efff,#d9efff,#ddefff,#e0efff,#e4efff,#e7eeff,#ebeeff,#eeeeff,#f2eeff,#f5eeff,#f9eeff,#fceeff,#ffedff,#ffeafb,#ffe7f8,#ffe4f5,#ffe1f2,#ffdeef,#ffdbec,#ffd8e9,#ffd6e6,#ffd3e4,#ffd0e1,#ffcede,#ffccdc,#ffc9d9,#ffc7d7,#ffc5d5,#ffc2d2,#ffc0d0,#ffbece,#ffbccc,#ffbaca,#ffb8c8,#ffb6c6,#ffb4c4,#ffb2c2,#ffb0c0,#ffaebe,#ffacbc,#ffaaba,#ffa9b8,#ffa7b6,#ffa5b5)"></b><b class="r6" style="top:132px;background:linear-gradient(90deg,#90eeff,#95eeff,#9aedff,#9eedff,#a3edff,#a7edff,#abedff,#afedff,#b3edff,#b7edff,#bbedff,#bfecff,#c3ecff,#c7ecff,#cbecff,#ceecff,#d2ecff,#d6ecff,#d9ecff,#ddecff,#e0ebff,#e4ebff,#e7ebff,#ebebff,#eeebff,#f2ebff,#f5ebff,#f8eaff,#fceaff,#ffeaff,#ffe7fb,#ffe4f8,#ffe1f5,#ffdef2,#ffdbef,#ffd8ec,#ffd5e9,#ffd3e7,#ffd0e4,#ffcee1,#ffcbdf,#ffc9dc,#ffc6da,#ffc4d8,#ffc2d5,#ffc0d3,#ffbdd1,#ffbbcf,#ffb9cc,#ffb7ca,#ffb5c8,#ffb3c6,#ffb1c4,#ffafc2,#ffadc0,#ffacbe,#ffaabd,#ffa8bb,#ffa6b9,#ffa4b7,#ffa3b5)"></b><b class="r6" style="top:138px;background:linear-gradient(90deg,#92ebff,#96ebff,#9bebff,#9feaff,#a4eaff,#a8eaff,#aceaff,#b0eaff,#b4eaff,#b8eaff,#bceaff,#c0e9ff,#c4e9ff,#c7e9ff,#cbe9ff,#cfe9ff,#d2e9ff,#d6e9ff,#d9e8ff,#dde8ff,#e0e8ff,#e4e8ff,#e7e8ff,#ebe8ff,#eee8ff,#f2e7ff,#f5e7ff,#f8e7ff,#fce7ff,#ffe7ff,#ffe4fc,#ffe1f9,#ffdef5,#ffdbf2,#ffd8ef,#ffd5ed,#ffd3ea,#ffd0e7,#ffcde4,#ffcbe2,#ffc8df,#ffc6dd,#ffc4da,#ffc1d8,#ffbfd6,#ffbdd4,#ffbbd1,#ffb9cf,#ffb7cd,#ffb5cb,#ffb3c9,#ffb1c7,#ffafc5,#ffadc3,#ffabc1,#ffa9bf,#ffa7bd,#ffa6bb,#ffa4ba,#ffa2b8,#ffa0b6)"></b><b class="r6" style="top:144px;background:linear-gradient(90deg,#93e8ff,#97e8ff,#9ce8ff,#a0e8ff,#a4e7ff,#a9e7ff,#ade7ff,#b1e7ff,#b5e7ff,#b9e7ff,#bce7ff,#c0e6ff,#c4e6ff,#c8e6ff,#cbe6ff,#cfe6ff,#d2e6ff,#d6e5ff,#dae5ff,#dde5ff,#e1e5ff,#e4e5ff,#e7e5ff,#ebe5ff,#eee4ff,#f1e4ff,#f5e4ff,#f8e4ff,#fbe4ff,#ffe3ff,#ffe1fc,#ffdef9,#ffdbf6,#ffd8f3,#ffd5f0,#ffd2ed,#ffd0ea,#ffcde8,#ffcbe5,#ffc8e2,#ffc6e0,#ffc3dd,#ffc1db,#ffbfd9,#ffbdd6,#ffbad4,#ffb8d2,#ffb6d0,#ffb4ce,#ffb2cb,#ffb0c9,#ffaec7,#ffacc5,#ffaac4,#ffa9c2,#ffa7c0,#ffa5be,#ffa3bc,#ffa1ba,#ffa0b9,#ff9eb7)"></b><b class="r6" style="top:150px;background:linear-gradient(90deg,#94e5ff,#98e5ff,#9de5ff,#a1e5ff,#a5e5ff,#a9e4ff,#ade4ff,#b1e4ff,#b5e4ff,#b9e4ff,#bde4ff,#c1e3ff,#c4e3ff,#c8e3ff,#cce3ff,#cfe3ff,#d3e3ff,#d6e2ff,#dae2ff,#dde2ff,#e1e2ff,#e4e2ff,#e7e1ff,#ebe1ff,#eee1ff,#f1e1ff,#f5e1ff,#f8e0ff,#fbe0ff,#ffe0ff,#ffddfc,#ffdaf9,#ffd8f6,#ffd5f3,#ffd2f0,#ffcfed,#ffcdeb,#ffcae8,#ffc8e5,#ffc5e3,#ffc3e0,#ffc1de,#ffbedb,#ffbcd9,#ffbad7,#ffb8d5,#ffb6d2,#ffb4d0,#ffb2ce,#ffb0cc,#ffaeca,#ffacc8,#ffaac6,#ffa8c4,#ffa6c2,#ffa4c0,#ffa2bf,#ffa1bd,#ff9fbb,#ff9db9,#ff9cb8)"></b><b class="r6" style="top:156px;background:linear-gradient(90deg,#95e2ff,#99e2ff,#9ee2ff,#a2e2ff,#a6e2ff,#aae1ff,#aee1ff,#b2e1ff,#b6e1ff,#bae1ff,#bde1ff,#c1e0ff,#c5e0ff,#c8e0ff,#cce0ff,#cfe0ff,#d3dfff,#d6dfff,#dadfff,#dddfff,#e1dfff,#e4deff,#e7deff,#ebdeff,#eedeff,#f1deff,#f5ddff,#f8ddff,#fbddff,#feddff,#ffdafc,#ffd7f9,#ffd5f6,#ffd2f3,#ffcff1,#ffccee,#ffcaeb,#ffc7e8,#ffc5e6,#ffc3e3,#ffc0e1,#ffbede,#ffbcdc,#ffb9da,#ffb7d7,#ffb5d5,#ffb3d3,#ffb1d1,#ffafcf,#ffadcd,#ffabcb,#ffa9c9,#ffa7c7,#ffa5c5,#ffa4c3,#ffa2c1,#ffa0bf,#ff9ebd,#ff9cbc,#ff9bba,#ff99b8)"></b><b class="r6" style="top:162px;background:linear-gradient(90deg,#96dfff,#9adfff,#9fdfff,#a3dfff,#a7dfff,#abdfff,#afdeff,#b3deff,#b6deff,#badeff,#bedeff,#c2ddff,#c5ddff,#c9ddff,#ccddff,#d0ddff,#d3dcff,#d7dcff,#dadcff,#dddcff,#e1dcff,#e4dbff,#e7dbff,#ebdbff,#eedbff,#f1daff,#f4daff,#f8daff,#fbdaff,#fed9ff,#ffd7fd,#ffd4fa,#ffd2f7,#ffcff4,#ffccf1,#ffcaee,#ffc7eb,#ffc5e9,#ffc2e6,#ffc0e4,#ffbde1,#ffbbdf,#ffb9dc,#ffb7da,#ffb5d8,#ffb2d6,#ffb0d3,#ffaed1,#ffaccf,#ffaacd,#ffa8cb,#ffa7c9,#ffa5c7,#ffa3c5,#ffa1c4,#ff9fc2,#ff9dc0,#ff9cbe,#ff9abc,#ff98bb,#ff97b9)"></b><b class="r6" style="top:168px;background:linear-gradient(90deg,#97ddff,#9bdcff,#a0dcff,#a4dcff,#a8dcff,#acdcff,#b0dbff,#b3dbff,#b7dbff,#bbdbff,#bedbff,#c2daff,#c6daff,#c9daff,#cddaff,#d0daff,#d3d9ff,#d7d9ff,#dad9ff,#ded9ff,#e1d8ff,#e4d8ff,#e7d8ff,#ebd8ff,#eed7ff,#f1d7ff,#f4d7ff,#f8d7ff,#fbd6ff,#fed6ff,#ffd4fd,#ffd1fa,#ffcff7,#ffccf4,#ffc9f1,#ffc7ee,#ffc4ec,#ffc2e9,#ffbfe7,#ffbde4,#ffbbe2,#ffb8df,#ffb6dd,#ffb4db,#ffb2d8,#ffb0d6,#ffaed4,#ffacd2,#ffaad0,#ffa8ce,#ffa6cc,#ffa4ca,#ffa2c8,#ffa0c6,#ff9ec4,#ff9dc2,#ff9bc0,#ff99bf,#ff98bd,#ff96bb,#ff94ba)"></b><b class="r6" style="top:174px;background:linear-gradient(90deg,#98daff,#9cdaff,#a0d9ff,#a5d9ff,#a8d9ff,#acd9ff,#b0d9ff,#b4d8ff,#b8d8ff,#bbd8ff,#bfd8ff,#c2d7ff,#c6d7ff,#c9d7ff,#cdd7ff,#d0d7ff,#d4d6ff,#d7d6ff,#dad6ff,#ded6ff,#e1d5ff,#e4d5ff,#e7d5ff,#ebd4ff,#eed4ff,#f1d4ff,#f4d4ff,#f7d3ff,#fbd3ff,#fed3ff,#ffd1fd,#ffcefa,#ffccf7,#ffc9f4,#ffc6f2,#ffc4ef,#ffc1ec,#ffbfea,#ffbce7,#ffbae5,#ffb8e2,#ffb6e0,#ffb3dd,#ffb1db,#ffafd9,#ffadd7,#ffabd5,#ffa9d2,#ffa7d0,#ffa5ce,#ffa3cc,#ffa1ca,#ffa0c8,#ff9ec7,#ff9cc5,#ff9ac3,#ff98c1,#ff97bf,#ff95be,#ff93bc,#ff92ba)"></b><b class="r6" style="top:180px;background:linear-gradient(90deg,#99d7ff,#9dd7ff,#a1d7ff,#a5d6ff,#a9d6ff,#add6ff,#b1d6ff,#b5d6ff,#b8d5ff,#bcd5ff,#bfd5ff,#c3d5ff,#c6d4ff,#cad4ff,#cdd4ff,#d1d4ff,#d4d3ff,#d7d3ff,#dbd3ff,#ded2ff,#e1d2ff,#e4d2ff,#e7d2ff,#ebd1ff,#eed1ff,#f1d1ff,#f4d0ff,#f7d0ff,#fad0ff,#fdd0ff,#ffcefd,#ffcbfa,#ffc8f8,#ffc6f5,#ffc3f2,#ffc1ef,#ffbeed,#ffbcea,#ffbae7,#ffb7e5,#ffb5e3,#ffb3e0,#ffb1de,#ffafdc,#ffacd9,#ffaad7,#ffa8d5,#ffa6d3,#ffa4d1,#ffa3cf,#ffa1cd,#ff9fcb,#ff9dc9,#ff9bc7,#ff99c5,#ff98c4,#ff96c2,#ff94c0,#ff92be,#ff91bd,#ff8fbb)"></b><b class="r6" style="top:186px;background:linear-gradient(90deg,#9ad4ff,#9ed4ff,#a2d4ff,#a6d4ff,#aad3ff,#aed3ff,#b1d3ff,#b5d3ff,#b9d2ff,#bcd2ff,#c0d2ff,#c3d2ff,#c7d1ff,#cad1ff,#ced1ff,#d1d0ff,#d4d0ff,#d7d0ff,#dbd0ff,#decfff,#e1cfff,#e4cfff,#e8ceff,#ebceff,#eeceff,#f1ceff,#f4cdff,#f7cdff,#facdff,#fdccff,#ffcbfe,#ffc8fb,#ffc5f8,#ffc3f5,#ffc0f2,#ffbeef,#ffbbed,#ffb9ea,#ffb7e8,#ffb4e5,#ffb2e3,#ffb0e1,#ffaede,#ffacdc,#ffaada,#ffa8d8,#ffa6d6,#ffa4d3,#ffa2d1,#ffa0cf,#ff9ecd,#ff9ccc,#ff9aca,#ff99c8,#ff97c6,#ff95c4,#ff93c2,#ff92c1,#ff90bf,#ff8ebd,#ff8dbb)"></b><b class="r6" style="top:192px;background:linear-gradient(90deg,#9bd2ff,#9fd1ff,#a3d1ff,#a7d1ff,#abd1ff,#aed0ff,#b2d0ff,#b6d0ff,#b9cfff,#bdcfff,#c0cfff,#c4cfff,#c7ceff,#caceff,#ceceff,#d1cdff,#d4cdff,#d8cdff,#dbcdff,#deccff,#e1ccff,#e4ccff,#e8cbff,#ebcbff,#eecbff,#f1caff,#f4caff,#f7caff,#fac9ff,#fdc9ff,#ffc8fe,#ffc5fb,#ffc2f8,#ffc0f5,#ffbdf3,#ffbbf0,#ffb9ed,#ffb6eb,#ffb4e8,#ffb2e6,#ffafe3,#ffade1,#ffabdf,#ffa9dc,#ffa7da,#ffa5d8,#ffa3d6,#ffa1d4,#ff9fd2,#ff9dd0,#ff9bce,#ff9acc,#ff98ca,#ff96c8,#ff94c6,#ff92c5,#ff91c3,#ff8fc1,#ff8dbf,#ff8cbe,#ff8abc)"></b><b class="r6" style="top:198px;background:linear-gradient(90deg,#9ccfff,#a0cfff,#a4ceff,#a8ceff,#abceff,#afcdff,#b3cdff,#b6cdff,#bacdff,#bdccff,#c1ccff,#c4ccff,#c7cbff,#cbcbff,#cecbff,#d1caff,#d5caff,#d8caff,#dbcaff,#dec9ff,#e1c9ff,#e4c9ff,#e8c8ff,#ebc8ff,#eec7ff,#f1c7ff,#f4c7ff,#f7c6ff,#fac6ff,#fdc6ff,#ffc5fe,#ffc2fb,#ffbff8,#ffbdf6,#ffbaf3,#ffb8f0,#ffb6ee,#ffb3eb,#ffb1e9,#ffafe6,#ffade4,#ffaae1,#ffa8df,#ffa6dd,#ffa4db,#ffa2d9,#ffa0d7,#ff9ed4,#ff9cd2,#ff9bd0,#ff99cf,#ff97cd,#ff95cb,#ff93c9,#ff92c7,#ff90c5,#ff8ec3,#ff8cc2,#ff8bc0,#ff89be,#ff87bd)"></b><b class="r6" style="top:204px;background:linear-gradient(90deg,#9dccff,#a1ccff,#a5cbff,#a8cbff,#accbff,#b0cbff,#b3caff,#b7caff,#bacaff,#bec9ff,#c1c9ff,#c4c9ff,#c8c8ff,#cbc8ff,#cec8ff,#d2c7ff,#d5c7ff,#d8c7ff,#dbc6ff,#dec6ff,#e1c6ff,#e4c5ff,#e8c5ff,#ebc5ff,#eec4ff,#f1c4ff,#f4c4ff,#f7c3ff,#fac3ff,#fdc2ff,#ffc1fe,#ffbffb,#ffbcf9,#ffbaf6,#ffb7f3,#ffb5f0,#ffb3ee,#ffb0eb,#ffaee9,#fface7,#ffaae4,#ffa8e2,#ffa5e0,#ffa3dd,#ffa1db,#ff9fd9,#ff9dd7,#ff9cd5,#ff9ad3,#ff98d1,#ff96cf,#ff94cd,#ff92cb,#ff91c9,#ff8fc8,#ff8dc6,#ff8bc4,#ff8ac2,#ff88c1,#ff86bf,#ff85bd)"></b><b class="r6" style="top:210px;background:linear-gradient(90deg,#9ec9ff,#a2c9ff,#a5c9ff,#a9c8ff,#adc8ff,#b0c8ff,#b4c7ff,#b7c7ff,#bbc7ff,#bec6ff,#c2c6ff,#c5c6ff,#c8c6ff,#cbc5ff,#cfc5ff,#d2c4ff,#d5c4ff,#d8c4ff,#dbc3ff,#dec3ff,#e1c3ff,#e5c2ff,#e8c2ff,#ebc2ff,#eec1ff,#f1c1ff,#f4c0ff,#f7c0ff,#fac0ff,#fdbfff,#ffbeff,#ffbcfc,#ffb9f9,#ffb7f6,#ffb4f3,#ffb2f1,#ffb0ee,#ffadec,#ffabe9,#ffa9e7,#ffa7e5,#ffa5e2,#ffa3e0,#ffa1de,#ff9fdc,#ff9dda,#ff9bd7,#ff99d5,#ff97d3,#ff95d1,#ff93d0,#ff91ce,#ff90cc,#ff8eca,#ff8cc8,#ff8ac6,#ff89c5,#ff87c3,#ff85c1,#ff84c0,#ff82be)"></b></div></div><svg style="left:0;top:0" width="1670" height="1006"><rect x="801.6" y="768.6" width="13.4" height="13.4" fill="#fff" stroke="#000" stroke-width="1.6"/><circle cx="802" cy="773.5" r="4.5" fill="#fff" stroke="#000" stroke-width="1.6"/></svg><div class="a" style="left:996px;top:661.5px;width:653px;height:224px;background:#2a2a2a;border:1px solid #000;border-bottom:none"></div><div class="a" style="left:997px;top:662px;width:651px;height:17px;background:#333"></div><div class="a" style="left:997px;top:679px;width:651px;height:17px;background:#161616"></div><div class="a" style="left:997px;top:695.7px;width:634px;height:31.0px;background:#3e3e3e"></div><div class="a" style="left:997px;top:726.7px;width:634px;height:31.0px;background:#7b7b7b"></div><div class="a" style="left:997px;top:757.7px;width:634px;height:31.0px;background:#3e3e3e"></div><div class="a" style="left:997px;top:788.7px;width:634px;height:31.0px;background:#7b7b7b"></div><div class="a" style="left:997px;top:819.7px;width:634px;height:31.0px;background:#3e3e3e"></div><div class="a" style="left:997px;top:850.7px;width:634px;height:15.3px;background:#7b7b7b"></div><svg style="left:0;top:0" width="1670" height="1006"><defs><clipPath id="tc"><rect x="997" y="662" width="633.6" height="204"/></clipPath></defs><g clip-path="url(#tc)"><text x="1344.3" y="686" font-size="18.5" fill="#f0f0f0" text-anchor="middle" transform="scale(0.84,1)">White</text><text x="1430.6" y="686" font-size="18.5" fill="#f0f0f0" text-anchor="middle" transform="scale(0.84,1)">Red</text><text x="1517.9" y="686" font-size="18.5" fill="#f0f0f0" text-anchor="middle" transform="scale(0.84,1)">Green</text><text x="1605.1" y="686" font-size="18.5" fill="#f0f0f0" text-anchor="middle" transform="scale(0.84,1)">Blue</text><text x="1691.4" y="686" font-size="18.5" fill="#f0f0f0" text-anchor="middle" transform="scale(0.84,1)">Cyan</text><text x="1780.6" y="686" font-size="18.5" fill="#f0f0f0" text-anchor="middle" transform="scale(0.84,1)">Magenta</text><text x="1869.3" y="686" font-size="18.5" fill="#f0f0f0" text-anchor="middle" transform="scale(0.84,1)">Yellow</text><text x="1963.1" y="686" font-size="18.5" fill="#f0f0f0" text-anchor="middle" transform="scale(0.84,1)">100W</text><text x="1202.9" y="719.1" font-size="20" fill="#f4f4f4" font-weight="bold" transform="scale(0.84,1)">x: CIE31</text><text x="1303.6" y="719.1" font-size="20" fill="#f0f0f0" transform="scale(0.84,1)">0,3116</text><text x="1395.7" y="719.1" font-size="20" fill="#f0f0f0" transform="scale(0.84,1)">0,6503</text><text x="1477.1" y="719.1" font-size="20" fill="#f0f0f0" transform="scale(0.84,1)">0,2996</text><text x="1570.2" y="719.1" font-size="20" fill="#f0f0f0" transform="scale(0.84,1)">0,1463</text><text x="1651.7" y="719.1" font-size="20" fill="#f0f0f0" transform="scale(0.84,1)">0,2224</text><text x="1743.8" y="719.1" font-size="20" fill="#f0f0f0" transform="scale(0.84,1)">0,3197</text><text x="1829.0" y="719.1" font-size="20" fill="#f0f0f0" transform="scale(0.84,1)">0,4199</text><text x="1921.2" y="719.1" font-size="20" fill="#f0f0f0" transform="scale(0.84,1)">0,3116</text><text x="1202.9" y="750.1" font-size="20" fill="#f4f4f4" font-weight="bold" transform="scale(0.84,1)">y: CIE31</text><text x="1303.6" y="750.1" font-size="20" fill="#f0f0f0" transform="scale(0.84,1)">0,3296</text><text x="1395.7" y="750.1" font-size="20" fill="#f0f0f0" transform="scale(0.84,1)">0,3312</text><text x="1477.1" y="750.1" font-size="20" fill="#f0f0f0" transform="scale(0.84,1)">0,6051</text><text x="1570.2" y="750.1" font-size="20" fill="#f0f0f0" transform="scale(0.84,1)">0,0598</text><text x="1651.7" y="750.1" font-size="20" fill="#f0f0f0" transform="scale(0.84,1)">0,3292</text><text x="1743.8" y="750.1" font-size="20" fill="#f0f0f0" transform="scale(0.84,1)">0,1531</text><text x="1829.0" y="750.1" font-size="20" fill="#f0f0f0" transform="scale(0.84,1)">0,5075</text><text x="1921.2" y="750.1" font-size="20" fill="#f0f0f0" transform="scale(0.84,1)">0,3296</text><text x="1202.9" y="781.1" font-size="20" fill="#f4f4f4" font-weight="bold" transform="scale(0.84,1)">Y</text><text x="1303.6" y="781.1" font-size="20" fill="#f0f0f0" transform="scale(0.84,1)">136,9886</text><text x="1395.7" y="781.1" font-size="20" fill="#f0f0f0" transform="scale(0.84,1)">27,5021</text><text x="1477.1" y="781.1" font-size="20" fill="#f0f0f0" transform="scale(0.84,1)">91,0569</text><text x="1570.2" y="781.1" font-size="20" fill="#f0f0f0" transform="scale(0.84,1)">9,0291</text><text x="1651.7" y="781.1" font-size="20" fill="#f0f0f0" transform="scale(0.84,1)">100,1228</text><text x="1743.8" y="781.1" font-size="20" fill="#f0f0f0" transform="scale(0.84,1)">35,9216</text><text x="1829.0" y="781.1" font-size="20" fill="#f0f0f0" transform="scale(0.84,1)">119,2442</text><text x="1921.2" y="781.1" font-size="20" fill="#f0f0f0" transform="scale(0.84,1)">270,45</text><text x="1202.9" y="812.1" font-size="20" fill="#f4f4f4" font-weight="bold" transform="scale(0.84,1)">Target Y</text><text x="1303.6" y="812.1" font-size="20" fill="#f0f0f0" transform="scale(0.84,1)">140,9028</text><text x="1395.7" y="812.1" font-size="20" fill="#f0f0f0" transform="scale(0.84,1)">29,9638</text><text x="1477.1" y="812.1" font-size="20" fill="#f0f0f0" transform="scale(0.84,1)">100,7678</text><text x="1570.2" y="812.1" font-size="20" fill="#f0f0f0" transform="scale(0.84,1)">10,1712</text><text x="1651.7" y="812.1" font-size="20" fill="#f0f0f0" transform="scale(0.84,1)">110,9390</text><text x="1743.8" y="812.1" font-size="20" fill="#f0f0f0" transform="scale(0.84,1)">40,1350</text><text x="1829.0" y="812.1" font-size="20" fill="#f0f0f0" transform="scale(0.84,1)">130,7316</text><text x="1921.2" y="812.1" font-size="20" fill="#f0f0f0" transform="scale(0.84,1)">270,45</text><text x="1202.9" y="843.1" font-size="20" fill="#f4f4f4" font-weight="bold" transform="scale(0.84,1)">ΔE 2000</text><text x="1303.6" y="843.1" font-size="20" fill="#f0f0f0" transform="scale(0.84,1)">1,1915</text><text x="1395.7" y="843.1" font-size="20" fill="#f0f0f0" transform="scale(0.84,1)">2,1630</text><text x="1477.1" y="843.1" font-size="20" fill="#f0f0f0" transform="scale(0.84,1)">2,2728</text><text x="1570.2" y="843.1" font-size="20" fill="#f0f0f0" transform="scale(0.84,1)">1,4772</text><text x="1651.7" y="843.1" font-size="20" fill="#f0f0f0" transform="scale(0.84,1)">2,2800</text><text x="1743.8" y="843.1" font-size="20" fill="#f0f0f0" transform="scale(0.84,1)">2,1602</text><text x="1829.0" y="843.1" font-size="20" fill="#f0f0f0" transform="scale(0.84,1)">2,0549</text><text x="1921.2" y="843.1" font-size="20" fill="#f0f0f0" transform="scale(0.84,1)">1,2000</text><text x="1202.9" y="874.1" font-size="20" fill="#f4f4f4" font-weight="bold" transform="scale(0.84,1)">ΔE ITP</text><text x="1303.6" y="874.1" font-size="20" fill="#f0f0f0" transform="scale(0.84,1)">2,2801</text><text x="1395.7" y="874.1" font-size="20" fill="#f0f0f0" transform="scale(0.84,1)">0,4141</text><text x="1477.1" y="874.1" font-size="20" fill="#f0f0f0" transform="scale(0.84,1)">7,4004</text><text x="1570.2" y="874.1" font-size="20" fill="#f0f0f0" transform="scale(0.84,1)">10,0787</text><text x="1651.7" y="874.1" font-size="20" fill="#f0f0f0" transform="scale(0.84,1)">7,5805</text><text x="1743.8" y="874.1" font-size="20" fill="#f0f0f0" transform="scale(0.84,1)">7,5108</text><text x="1829.0" y="874.1" font-size="20" fill="#f0f0f0" transform="scale(0.84,1)">6,8037</text><text x="1921.2" y="874.1" font-size="20" fill="#f0f0f0" transform="scale(0.84,1)">0,9000</text></g><rect x="1631" y="695.7" width="17" height="170.3" fill="#3a3a3a"/><rect x="1632.5" y="697.5" width="14" height="16" rx="3" fill="#555" stroke="#777" stroke-width="1"/><path d="M1635.5 709.5 L1639.5 704 L1643.5 709.5Z" fill="#2a2a2a"/><rect x="1634" y="718" width="11.5" height="104" rx="5.5" fill="#2e2e2e"/><rect x="1632.5" y="848" width="14" height="16" rx="3" fill="#555" stroke="#777" stroke-width="1"/><path d="M1635.5 853 L1639.5 858.5 L1643.5 853Z" fill="#2a2a2a"/><rect x="997" y="866" width="651" height="19" fill="#444"/><rect x="996" y="885" width="653" height="1" fill="#555"/><rect x="996" y="661.5" width="653" height="1.2" fill="#000"/><rect x="999" y="868" width="14" height="15" rx="3" fill="#5a5a5a" stroke="#777" stroke-width="1"/><path d="M1008.5 871 L1003 875.5 L1008.5 880Z" fill="#2a2a2a"/><rect x="1015" y="868.5" width="548" height="14" rx="7" fill="#2e2e2e"/><rect x="1615.5" y="868" width="14" height="15" rx="3" fill="#5a5a5a" stroke="#777" stroke-width="1"/><path d="M1620 871 L1625.5 875.5 L1620 880Z" fill="#2a2a2a"/></svg><div class="a" style="left:2.2px;top:929.5px;width:155.5px;height:80px;border-radius:5px 5px 0 0;background:linear-gradient(#acacac,#8e8e8e 45%,#6a6a6a 75%,#5c5c5c)"></div><div class="a" style="left:8.4px;top:936px;width:143px;height:45px;border-radius:5px;background:#c0c0c0;box-shadow:inset 1px 1.5px 1px rgba(0,0,0,.28),0 0 1px rgba(255,255,255,.2)"></div><div class="t" style="left:2.2px;top:989px;width:155px;text-align:center;font-size:13.5px;font-weight:bold;color:#2a2a2a">White</div><div class="a" style="left:160.2px;top:929.5px;width:155.5px;height:80px;border-radius:5px 5px 0 0;background:linear-gradient(#acacac,#8e8e8e 45%,#6a6a6a 75%,#5c5c5c)"></div><div class="a" style="left:166.4px;top:936px;width:143px;height:45px;border-radius:5px;background:#c00000;box-shadow:inset 1px 1.5px 1px rgba(0,0,0,.28),0 0 1px rgba(255,255,255,.2)"></div><div class="t" style="left:160.2px;top:989px;width:155px;text-align:center;font-size:13.5px;font-weight:bold;color:#2a2a2a">Red</div><div class="a" style="left:318.2px;top:929.5px;width:155.5px;height:80px;border-radius:5px 5px 0 0;background:linear-gradient(#acacac,#8e8e8e 45%,#6a6a6a 75%,#5c5c5c)"></div><div class="a" style="left:324.4px;top:936px;width:143px;height:45px;border-radius:5px;background:#00c000;box-shadow:inset 1px 1.5px 1px rgba(0,0,0,.28),0 0 1px rgba(255,255,255,.2)"></div><div class="t" style="left:318.2px;top:989px;width:155px;text-align:center;font-size:13.5px;font-weight:bold;color:#2a2a2a">Green</div><div class="a" style="left:476.2px;top:929.5px;width:155.5px;height:80px;border-radius:5px 5px 0 0;background:linear-gradient(#acacac,#8e8e8e 45%,#6a6a6a 75%,#5c5c5c)"></div><div class="a" style="left:482.4px;top:936px;width:143px;height:45px;border-radius:5px;background:#0000c0;box-shadow:inset 1px 1.5px 1px rgba(0,0,0,.28),0 0 1px rgba(255,255,255,.2)"></div><div class="t" style="left:476.2px;top:989px;width:155px;text-align:center;font-size:13.5px;font-weight:bold;color:#2a2a2a">Blue</div><div class="a" style="left:634.2px;top:929.5px;width:155.5px;height:80px;border-radius:5px 5px 0 0;background:linear-gradient(#acacac,#8e8e8e 45%,#6a6a6a 75%,#5c5c5c)"></div><div class="a" style="left:640.4px;top:936px;width:143px;height:45px;border-radius:5px;background:#00c0c0;box-shadow:inset 1px 1.5px 1px rgba(0,0,0,.28),0 0 1px rgba(255,255,255,.2)"></div><div class="t" style="left:634.2px;top:989px;width:155px;text-align:center;font-size:13.5px;font-weight:bold;color:#2a2a2a">Cyan</div><div class="a" style="left:792.2px;top:929.5px;width:155.5px;height:80px;border-radius:5px 5px 0 0;background:linear-gradient(#acacac,#8e8e8e 45%,#6a6a6a 75%,#5c5c5c)"></div><div class="a" style="left:798.4px;top:936px;width:143px;height:45px;border-radius:5px;background:#c000c0;box-shadow:inset 1px 1.5px 1px rgba(0,0,0,.28),0 0 1px rgba(255,255,255,.2)"></div><div class="t" style="left:792.2px;top:989px;width:155px;text-align:center;font-size:13.5px;font-weight:bold;color:#2a2a2a">Magenta</div><div class="a" style="left:950.2px;top:929.5px;width:155.5px;height:80px;border-radius:5px 5px 0 0;background:linear-gradient(#acacac,#8e8e8e 45%,#6a6a6a 75%,#5c5c5c)"></div><div class="a" style="left:956.4px;top:936px;width:143px;height:45px;border-radius:5px;background:#c0c000;box-shadow:inset 1px 1.5px 1px rgba(0,0,0,.28),0 0 1px rgba(255,255,255,.2)"></div><div class="t" style="left:950.2px;top:989px;width:155px;text-align:center;font-size:13.5px;font-weight:bold;color:#2a2a2a">Yellow</div><div class="a" style="left:1108.2px;top:929.5px;width:156px;height:80px;border-radius:5px 5px 0 0;background:linear-gradient(#1b1b1b,#242424 50%,#303030)"></div><div class="a" style="left:1114.6px;top:935.5px;width:143px;height:45.5px;border-radius:5px;background:#fff;box-shadow:inset 1px 1px 1px rgba(0,0,0,.15)"></div><div class="t" style="left:1108.2px;top:989px;width:155px;text-align:center;font-size:13.5px;font-weight:bold;color:#fafafa">100W</div><div class="a" style="left:1267.5px;top:929.5px;width:59.5px;height:23px;border-radius:5px 5px 0 0;background:linear-gradient(#a8a8a8,#858585)"></div><div class="a" style="left:1267.5px;top:953px;width:59.5px;height:56px;border-radius:0 0 5px 5px;background:linear-gradient(#9a9a9a,#6e6e6e 60%,#5a5a5a)"></div><div class="a" style="left:1288px;top:931.5px;width:19px;height:19px;border-radius:50%;background:linear-gradient(#7a7a7a,#9c9c9c)"></div><svg style="left:1291px;top:936.5px" width="13" height="8"><path d="M0.5 7.5 L6.5 0.8 L12.5 7.5Z" fill="#333"/></svg><div class="a" style="left:1277px;top:960.5px;width:39px;height:39px;border-radius:7px;border:3px solid #222;background:linear-gradient(#9a9a9a,#8a8a8a 45%,#7a7a7a 55%,#8c8c8c)"></div><div class="a" style="left:1288.5px;top:971.5px;width:16.5px;height:17px;background:linear-gradient(#161616 50%,#000 50%)"></div><div class="a" style="left:1328.0px;top:929.2px;width:58.0px;height:37.7px;background:linear-gradient(#b2b2b2,#8c8c8c 55%,#6c6c6c);border-radius:4px 0 0 0"></div><div class="a" style="left:1344.5px;top:935.5px;width:25px;height:25px;border-radius:50%;background:linear-gradient(#6e6e6e,#8a8a8a 60%,#a0a0a0)"></div><div class="a" style="left:1386.6px;top:929.2px;width:55.4px;height:37.7px;background:linear-gradient(#b2b2b2,#8c8c8c 55%,#6c6c6c);border-radius:0"></div><div class="a" style="left:1401.8px;top:935.5px;width:25px;height:25px;border-radius:50%;background:linear-gradient(#6e6e6e,#8a8a8a 60%,#a0a0a0)"></div><div class="a" style="left:1442.4px;top:929.2px;width:55.4px;height:37.7px;background:linear-gradient(#7c7c7c,#5e5e5e 55%,#484848);border-radius:0"></div><div class="a" style="left:1457.6px;top:935.5px;width:25px;height:25px;border-radius:50%;background:linear-gradient(#4c4c4c,#5a5a5a 60%,#6a6a6a)"></div><div class="a" style="left:1499.9px;top:929.2px;width:55.1px;height:37.7px;background:linear-gradient(#b2b2b2,#8c8c8c 55%,#6c6c6c);border-radius:0"></div><div class="a" style="left:1515.0px;top:935.5px;width:25px;height:25px;border-radius:50%;background:linear-gradient(#6e6e6e,#8a8a8a 60%,#a0a0a0)"></div><div class="a" style="left:1555.8px;top:929.2px;width:55.1px;height:37.7px;background:linear-gradient(#b2b2b2,#8c8c8c 55%,#6c6c6c);border-radius:0"></div><div class="a" style="left:1570.8px;top:935.5px;width:25px;height:25px;border-radius:50%;background:linear-gradient(#6e6e6e,#8a8a8a 60%,#a0a0a0)"></div><svg style="left:0;top:0" width="1670" height="1006"><rect x="1352.2" y="943" width="10" height="10" fill="#262626"/><path d="M1410.5 942 L1421.5 948.8 L1410.5 955.5Z" fill="#262626"/><path d="M1464.5 941.5 h-2.5 v14 h2.5 M1475.5 941.5 h2.5 v14 h-2.5" fill="none" stroke="#262626" stroke-width="2"/><circle cx="1468" cy="948.5" r="1" fill="#262626"/><circle cx="1472" cy="948.5" r="1" fill="#262626"/><path d="M1527.5 948 c-2 -3.2 -7.5 -3.2 -7.5 0 c0 3.2 5.5 3.2 7.5 0 c2 -3.2 7.5 -3.2 7.5 0 c0 3.2 -5.5 3.2 -7.5 0Z" fill="none" stroke="#262626" stroke-width="2"/><path d="M1577 945 a6 6 0 0 1 10.5 -1.5 M1589 951.5 a6 6 0 0 1 -10.5 1.5" fill="none" stroke="#262626" stroke-width="2.2"/><path d="M1589.5 940.5 v5.5 h-5.5Z M1576.5 956.5 v-5.5 h5.5Z" fill="#262626"/><g transform="translate(1638.5,948.5)" filter="url(#ash)"><g fill="#e80000"><rect x="-3.5" y="-17.5" width="7" height="35" rx="2.5" transform="rotate(0)"/><rect x="-3.5" y="-17.5" width="7" height="35" rx="2.5" transform="rotate(60)"/><rect x="-3.5" y="-17.5" width="7" height="35" rx="2.5" transform="rotate(120)"/></g></g><defs><filter id="ash" x="-50%" y="-50%" width="200%" height="200%"><feDropShadow dx="1" dy="1.5" stdDeviation="1" flood-color="#000" flood-opacity="0.6"/></filter></defs></svg><div class="a" style="left:1328px;top:968.3px;width:169.8px;height:40px;border-radius:4px 0 0 0;background:linear-gradient(#acacac,#8a8a8a 55%,#6e6e6e)"></div><div class="a" style="left:1499.9px;top:968.3px;width:168px;height:40px;border-radius:0 4px 0 0;background:linear-gradient(#acacac,#8a8a8a 55%,#6e6e6e)"></div><div class="a" style="left:1354.4px;top:974.5px;width:25px;height:25px;border-radius:50%;background:linear-gradient(#6e6e6e,#8a8a8a 60%,#a0a0a0)"></div><div class="a" style="left:1620.8px;top:974.5px;width:25px;height:25px;border-radius:50%;background:linear-gradient(#6e6e6e,#8a8a8a 60%,#a0a0a0)"></div><svg style="left:0;top:0" width="1670" height="1006"><path d="M1366 982 l-5 5 l5 5 M1371 982 l-5 5 l5 5" fill="none" stroke="#2a2a2a" stroke-width="1.8"/><path d="M1629 982 l5 5 l-5 5 M1634 982 l5 5 l-5 5" fill="none" stroke="#2a2a2a" stroke-width="1.8"/><text x="1400.5" y="996.5" font-size="28.5" fill="#333" stroke="#333" stroke-width="0.7">Back</text><text x="1535" y="996.5" font-size="30.5" fill="#333" stroke="#333" stroke-width="0.7">Next</text></svg><div class="a" style="left:1662px;top:38px;width:8px;height:968px;background:linear-gradient(90deg,rgba(0,0,0,0),rgba(0,0,0,.5))"></div></body></html>
